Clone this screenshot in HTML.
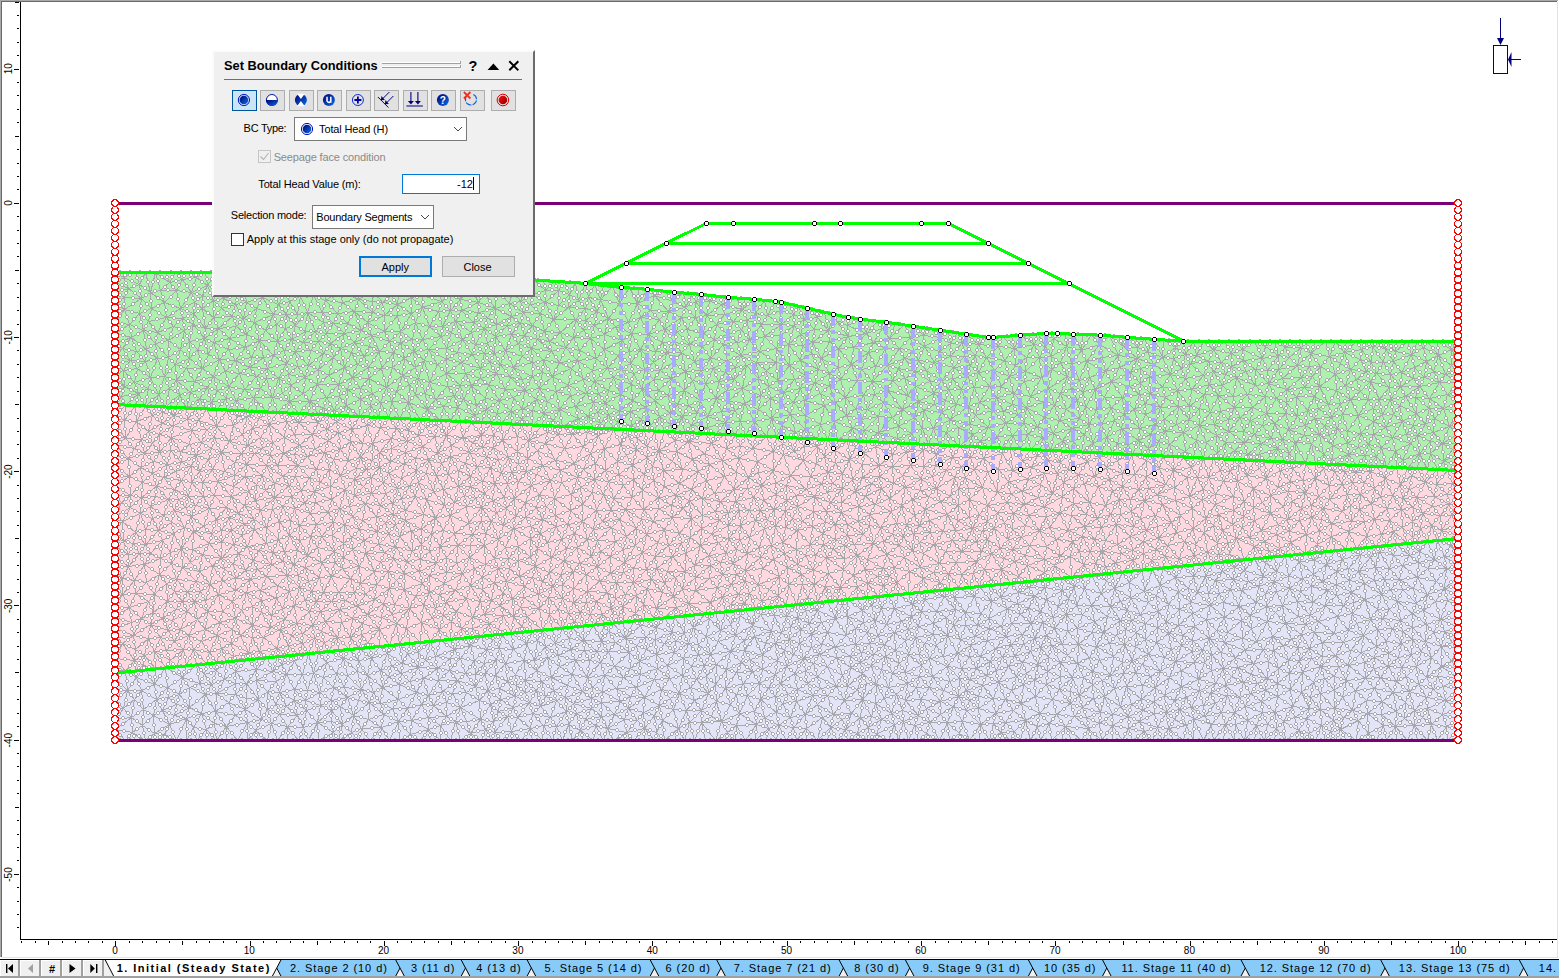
<!DOCTYPE html><html><head><meta charset="utf-8"><style>html,body{margin:0;padding:0}body{width:1559px;height:978px;overflow:hidden;background:#fff;position:relative;font-family:"Liberation Sans",sans-serif}svg{position:absolute;left:0;top:0}</style></head><body><svg width="1559" height="978" viewBox="0 0 1559 978" font-family="Liberation Sans, sans-serif"><g shape-rendering="crispEdges"><rect x="0" y="0" width="1558" height="1" fill="#a9a9a9"/><rect x="1" y="1" width="1556" height="1" fill="#6a6a6a"/><rect x="0" y="0" width="1" height="957" fill="#a9a9a9"/><rect x="1" y="1" width="1" height="956" fill="#6a6a6a"/><rect x="1557" y="2" width="1" height="955" fill="#e3e3e3"/><rect x="2" y="957" width="1556" height="1" fill="#e3e3e3"/></g><polygon points="115.0,272.0 418.0,272.0 585.5,283.4 621.2,287.3 647.3,289.3 674.2,292.2 701.1,294.4 728.3,297.3 754.0,299.3 775.2,301.3 781.0,302.2 807.3,308.2 833.3,314.2 848.2,317.3 860.2,319.1 886.3,322.2 913.2,326.2 940.1,330.2 966.4,334.2 988.2,337.4 993.3,337.4 1020.2,335.1 1046.3,333.4 1057.2,333.4 1073.2,334.2 1100.1,335.1 1127.3,337.4 1154.2,339.4 1183.4,341.1 1458.0,341.2 1458.0,470.5 115.0,404.5" fill="#aef0ae"/><polygon points="115.0,404.5 1458.0,470.5 1458.0,538.5 115.0,673.0" fill="#ffd9df"/><polygon points="115.0,673.0 1458.0,538.5 1458.0,740.0 115.0,740.0" fill="#e4e4f8"/><path d="M115.5 272.5l10 0l10 0l10 0l10 0l10 0l10 0l10 0l10 0l10 0l11 0l10 0l10 0l10 0l10 0l10 0l10 0l10 0l10 0l10 0l11 0l10 0l10 0l10 0l10 0l10 0l10 0l10 0l10 0l10 0l11 0l10 0l10 1l11 1l10 0l11 1l10 1l11 0l10 1l11 1l10 1l11 0l10 1l11 1l10 0l11 1l10 1l9 1l9 1l9 1l9 1l8 0l9 1l9 1l9 1l9 1l9 1l9 0l9 1l9 1l9 1l9 1l9 1l8 0l9 1l9 1l10 1l11 1l6 1l8 2l9 2l9 2l8 2l9 2l9 2l15 3l12 2l8 1l9 1l9 1l9 1l9 1l9 2l9 1l9 1l9 2l8 1l9 1l9 2l11 1l11 2l5 0l9-1l9-1l9 0l8-1l9-1l9 0l11 0l8 0l8 1l9 0l9 0l9 1l9 0l9 1l9 1l9 1l9 0l9 1l9 0l10 1l10 1l10 0l10 0l10 0l11 0l10 0l10 0l10 0l10 0l10 0l11 0l10 0l10 0l10 0l10 0l10 0l11 0l10 0l10 0l10 0l10 0l10 0l11 0l10 0l10 0l10 0l10 0l11 0l-7 8l-14-8l1 14l-11-14l-4 6l-6-6l-6 13l-4-13l-12 10l-9-10l-1 7l-9-7l-4 5l-6-5l-5 8l-5-8l-12 11l-9-11l-6 15l-4-15l-15 12l-5-12l-4 6l-6-6l-10 6l-11-6l-9 5l-11-5l-12 8l-8-8l-3 12l-7-12l-11 8l-10-8l-7 14l-3-14l-8 13l-2-13l-8 6l-12-8l-1 18l-8-18l-7 12l-2-13l-8 9l-10-10l-4 9l-14-11l-10 9l-8-10l-10 16l-8-16l-7 12l-1-13l-12 5l-7-5l-1 13l-8-13l-3 11l-6-10M115.5 272.5l8 5l2-5M115.5 272.5l0 10l8-5l12-5l4 12l6-12l5 20l5-20l14 10l-4-10M155.5 272.5l5 18l9-8l6-10l7 7l3-7l11 5l-1-5M246.5 272.5l-2 14l-8-14l-4 9l-6-9l-9 16l-1-16l-9 13l-2-13l-9 5l-14 2l-13 3l7 8l6-11l9 13l5-15l11 8l10 3l15-7l12 5l12-14l6 15l4-15l6 10l4-10M286.5 272.5l-14 10l-10 5l-18-1l-7 8l-5-13l-9 17l-6-10l-4 12l-6-15l-16 7l-15-2l-16 0l-10 2l-11-8l-16-7l5 11l-13-6l0 10l13-4l11-4l2 14l-13-10l-4 9l-9-5l0 10l9-5l17 1l9-6l14 10l-4-12M286.5 272.5l16 12l-6-12M286.5 272.5l-1 19l-13-9l2 11l-12-6l0 10l-18-11l2 16l-9-8l-14 4l-10 2l-11-5l5-10M317.5 272.5l-3 5l-8-5l-4 12l12-7l13-5l6 9l4-9l14 6l-4-6M327.5 272.5l-3 16l-10-11l-1 18l-11-11l-17 7l-11 2l-12 4l-16 5l-11 2l2-10M357.5 272.5l-6 6l-18 3l-9 7l16 2l11-12l8 10l-2-16l12 8l-2-8M418.5 272.5l0 10l-11-10l-8 13l-2-13l-6 5l-4-5l-6 11l-4-11l-8 8l12 3l10-6l8 8l19-3l10-10l10 13l0-12M449.5 274.5l-11 11l-20-3l4 13l16-10l12 9l-1-20l10 14l0-14l11 12l0-11M512.5 278.5l0 11l-11-12l-5 12l-5-13l-8 16l-3-16l-10 10l-11 2l-9 6l10 5l10-13l13 6l13-3l16 0l10-10l1 11l10-11l12 11l-2-10M533.5 279.5l-1 15l-9-4l-11-1l8 12l3-11M333.5 281.5l7 9l19-2l10-8l4 10l8-7l18 2l-8 10l-10-12M418.5 282.5l-7 15l-12-12l-2 19l-6-9l-18-5l-14-2l-1 11l15-9l-1 11l-14-2l-18-9l-15 10l-1-12l-11 7l-13 1l2-12M438.5 285.5l3 16l9-7l0 16l10-11l-1-11M603.5 285.5l-3 14l-6-15l-6 13l-3-14l-7 17l-3-18l-6 12l-5-13l-6 9l-4-9l-9 9l13 0l11 4l9 6l10-3l12 2l12-13l7 17l2-16M470.5 286.5l8 16l5-10l12 16l1-19l13 14l3-14M638.5 288.5l-1 15l-8-16l-10 16l-19-4l-3 12l-9-14l-3 11l-7-8l-10 7l1-13l-11 11l0-15l-13 12l0-12l-13 4l-12 7l-11 2l-14 5l-17-6l-18-3l1 11l17-8l0 10l17-4l16 8l-2-13l14 9l-3-11l10 3l2-10l13 8l-15 2l-7 8l17 1l5-11l13 3l10 2l17 1l12 3l11 7l-8-19M340.5 290.5l2 12l16-3l-4 12l-12-9l-17-2l-12-5l-6 17l-7-16l-15-5l4 10l11-5l-3 18l-8-13l-11 3l7-13M373.5 290.5l9 12l9-7M656.5 290.5l-2 5l-7-6l-10 14l17-8l11-4l8 10l1-9M150.5 292.5l1 16l-10-10l-17 11l0-12M191.5 292.5l11 3l-8 7l-3-10l-11 16l-4-18l-12 12l16 6l14-6l8 6l0-13M274.5 293.5l4 11l-16-7l-6 11l-10-6l-3 16l-8-14l-12-6l-2 10l-8-8l-11 8l-9 5l1-11M313.5 295.5l9 17l3-12l12 13l5-11M422.5 295.5l-11 2l-14 7l-15-2l-10-1l0 11l-14-13M422.5 295.5l19 6l-19 6l0-12M654.5 295.5l19 6l10-9l2 15l7-14l3 8l6-7l8 7l1-6M654.5 295.5l-4 15l-13-7l-18 0l-11 15l20 4l9-19l3 14l10-7l18 1l-14-16M262.5 297.5l11 17l5-10l8 10l3-13M728.5 297.5l-6 7l-3-8l-10 5l-14 0l-10 6l-12-6l-5 10l17-4l-4 10l-13-6l-9 8l-9-9M141.5 298.5l-2 15l12-5l13-6l2 15l14-9l13 5l-11 5l-2-10M745.5 298.5l-3 11l-6-12l-14 7l-13-3l-3 14l-11-14l0 16l-10-10M213.5 300.5l0 17l8-9l14-4l-3 12l-11-8M545.5 302.5l8 17l5-14M781.5 302.5l-1 8l-5-9l-8 14l-3-15l-9 13l-1-14l-12 10l-20-5l2 10l18-5l13 4l12 2l13-5l9-6l4 10l5-8l6 13l3-11l10 9l-2-7M619.5 303.5l9 19l12-5l19 2l5 10l4-18M397.5 304.5l14 9l0-16l11 10l16 4l3-10l9 9l11 0l17 2l9 5l8-9l1 16l15-8l12-4l-3 11l-9-7l-4 9l13-2l12 2l-9-13M397.5 304.5l0 11l14-2l11-6l-7 15l-4-9l-11 18l-3-16l-13 0l-2-13l-10 10l-18-1l-17 2l-15-1l-15 0l-10 2l-11 0l-13 0l-17-6l-13 10l-11-2l-19 1l-11-9l3 20l-12-15l0 11l-11-6l-16-1l-15-9l-3 13l-9-8l-15-4l-9-7l0 10l9-3l-9 13l0-10M397.5 304.5l-13 11l-12-3l-5 10l-13-11l-7 12l-10-10l-4 10l-11-11l1 10l-16-10l-12 13l-9-11l-10 10l-3-10l-19 8l2-14M530.5 304.5l10 9l13 6l15-12l7 12l10-11l0 12l12-9l-3 14l14-7l7 8l13-4l3 11l9-16l8 17l11-15M722.5 304.5l-16 11l18-1l9 7l9-12l5 11l8-7l6 11l6-9l14 9l-1-14l13 4l11 5l13-2l7-5l4 18l5-16l4 8l11-5l-1 8l13-6l6 14l2-13M422.5 307.5l7 19l9-15l12-1l5 11l6-11l12 12l5-10M124.5 309.5l5 15l10-11l4 17l5-9l18-4l7 9l9-8l2 12l9-6l12 4l8-11l5 11l14-12l4 10l7-8l11 4l11 8l8-16M450.5 310.5l-8 16l-4-15M354.5 311.5l7 19l6-8l17-7l0 16l13-16M286.5 314.5l-1 14l-9-4l-11 6l-6 10l-5-18l-8 12l-3-16M297.5 314.5l-2 11l-10 3l6 11l4-14l10 6l2-19l8 19l8-9l10 1l14 0l14 7l-17 3l-11-10l-7 10l-3-11M724.5 314.5l-8 10l-10-9l-11 2l-14 0l6 12l8-12l8 16l3-18M166.5 317.5l-9 15l-9-11M487.5 317.5l-14 5l-18-1l-13 5l-13 0l-14-4l-15 9l-16 0l-17-9l4 13l-10-5l-7 12l-10-9l3-10M487.5 317.5l9 7l11 1l4 9l9-11l4 12l8-10l8-12l4 18l9-12l22 0l10 1l9 5l-11 5l-8-11l-15 13l-7-13M487.5 317.5l-3 11l-11-6l-2 10l-16-11l-4 11l-9-6l-1 10l-12-10l-7 13l-7-17l-3 17l-12-8l-11 10l-5-10l-13 4l18 6l11 1l0-11M608.5 318.5l-4 16l-10-9l-4 13l-7-8l2-10M575.5 319.5l-2 18l10-7M804.5 319.5l-10 6l-1-11l-12 10l-20 0l-14-4l-14 1l-17 3l-13 9l-16-4l-11 2l5-14l-17 12l12 2l-2 11l-10-13l-16 5l-17-1l-16-7l-11 8l-14 4l-17-1l-13-5l-16-1l-12-6l5 14l7-8l5 10l11-9l5 15l8-10l6 13l11-12l14 11l0-15l18 6l-7-14M804.5 319.5l10 10l3-12l11 13l9-8l10 3l19 8l11-12l5 7l4-6M804.5 319.5l-4 15l-6-9l-13-1l-1 11l14-10l-6 19l12-10l14-5l14 1l20 6l-11-14M455.5 321.5l7 18l-11-7l-10 4l-19 3l-10 0l-12 3l13 9l9-12l6 10l13-13l5 12l5-16M276.5 324.5l1 17l8-13M781.5 324.5l-17 12l-3-12l-12 16l-2-20l-6 9l-8-8l-6 13l-11-10l-2 15l-11-6l-14 11l-2-15M507.5 325.5l-12 11l1-12l-12 4l-13 4l-9 7l13 5l9-16l11 8l16-2l13 1l13 4l12 2l16 6l14 3l17 8l-6-20M847.5 325.5l1 11l18-3l16-5l13-5l-6 15l15-14l6 13l3-11l10 9l-1-8M173.5 326.5l11 4l-16 10l5-14l-16 6l-14-2l-14-6l-14-2l0 11l14-9l2 13l12-7l12 13l2-11l11 8l-13 3l-9 6l-3-19M236.5 326.5l-18 2l-13 0l-1 10l-11-14l-4 17l-5-11l-4 19l-12-9l0 17l-13-14l2 15l-11-9l-15-12l-16-4l0 10l16-6l-9 11l-7-5l0 10l7-5l14 3l-5-14M236.5 326.5l10 8l-17 4l7-12M218.5 328.5l11 10l-16 4l5-14l-14 10l-15 3l8 8l7-11l9 4l15 7l1-11l16 9l1-13l13 6l18 1l-12-11M484.5 328.5l3 15l8-7l10 14l6-16l7 9l6-8l7 13l6-9l14 12l-2-10M664.5 329.5l-2 13l-14-8l-8 15l-9-16l-9 7l-18 9l14 6l4-15l7 11l2-18M741.5 329.5l-14 5l-13 5l9 5l4-10l10 8l4-13l8 11l15-4l16-1l8 9l14 1l-2-11l12 8l2-13M940.5 330.5l1 7l-10-9l-8 7l18 2l7-6l2 12l7-11l5 10l4-8l12 10l-1-9M305.5 331.5l10 0l11 2l18 0l-14 10l-4-10l-8 8l-3-10l-12 11l2-11l-14 8l-14 2l7 9l7-11l12 3l15-1l12 2l10 5l4-15M676.5 331.5l13 13l-15-2l-12 0l-7 9l-7-17M471.5 332.5l4 12l12-1l7 10l1-17M703.5 333.5l-1 13l12-7l-4 19l13-14l14-2l12-2l10 11l5-15l12 12l4-13M1057.5 333.5l-4 5l13 8l15 4l1-16M371.5 335.5l-17 7l15 4l2-11l8 16l10-10l4 11l7-10l4 16l9-7l-1-12M1011.5 335.5l3 13l6-13l14 9l11 2l8-8l-2 18l15-10l-6 16l-9-6l-6-10l-6 11l-5-13l-20 4l-12-12l-4 10l-10-9l-10 7l-16-2l-12 1l-9-6l-17 9l-1-11l-13 2l-21 1l-7-10l-9 14l-7-9l-13 14l-5-11l-19 5l-1-11l-16 12l17-1l9 7l10-12M1100.5 335.5l-1 9l-18 6l5 11l13-17l19 11l-9-20M1118.5 336.5l5 10l14 1l-1-9M910.5 337.5l14 9l-11 4l-3-13l-11 11l-10-10l-16 4l-20 5l-15 1l-17 10l8-17M941.5 337.5l-2 14l11-8l0 13l12-14l13 13l3-11l20 2l-5-9M204.5 338.5l4 16l5-12l6 17l9-10l17-2l14-7l14 15l4-14M889.5 338.5l-4 10l-12-6l-5 10l-15-5l-2 17l-13-16l0 19l-17-9l-9-16l-10 3l9 8l1-11M291.5 339.5l4 12l8-9l7 8l8-9l5 12l7-10l3 14l7-9l14-6l-3 10l-11-4l4 19l7-15l13 4l-10-14M462.5 339.5l-16 9l-18 1l-15 2l11 9l4-11l18 10l0-11l11 4l5-13l10 15l3-10l9 9l3-10M749.5 340.5l-9 15l-3-13M1173.5 340.5l2 7l10 7l11 1l17-6l0-8M1244.5 341.5l-2 8l-11 4l-18-4l-5 12l-12-6l-6 8l-5-9l-12 4l2-11l-13 10l-15-6l-10-4l0 11l-14-12l-5 9l-16 2l-3-13M1254.5 341.5l8 17l3-12l-1-5M1274.5 341.5l4 14l-13-9M1285.5 341.5l0 6l16 0l9 6l5-12M1346.5 341.5l-2 11l17-3l11-3l13 2l10 3l1-10M1447.5 341.5l4 8l7 2l0-10M662.5 342.5l5 10l7-10l7 10l8-8l13 2l8 12l17 2l-4-16l17 11l19-4l17-3l12-4l12 16l2-15M962.5 342.5l2 14l11-1l11 2l-8-13M518.5 343.5l13 5l20 3l14-4l12 13l2-10M518.5 343.5l-13 7l-11 3l-10 0l-12 1l-15-2l-11 7l15 3l-4-10M518.5 343.5l4 13l9-8l12 12l8-9l8 11l6-15M689.5 344.5l5 17l8-15M788.5 344.5l1 21l-13-17l0 14l-17-11l-3 11l-16-7l-13 5l8 7l5-12l6 10l10-3l20 0l13 3l11-5l11-7l10 5l-3 11l-7-16M1034.5 344.5l-8 13l-12-9l-16-2l-12 11l18 3l-6-14M924.5 346.5l15 5l11 5l14 0l6 9l5-10l3 17l8-15l8 13l10-10l10-12l1 17l11-8l13 0l12-1l0 13l-12-12l-14 14l1-14M924.5 346.5l-6 14l-5-10l-14-2l-14 0l-17 4l-17 12l-13 3l-9 6l-8-15M924.5 346.5l10 16l5-11M1066.5 346.5l5 17l10-13M1423.5 347.5l-12 7l-16-3l-2 10l-8-13l-2 14l-11-16l-1 16l-10-13l-1 10l-16-7l-15 4l-19-3l-13 12l4-18l-12 10l-4-10l-7 8l11 2l8 8l12 1l1-13l10 13l9-10l11 7l4-11l6 17l10-10l11 3l12 0l10-1l18-7l15 7l-3-14l15 8l13-6l7 12l0-10M122.5 348.5l8 12l6-9l10-2l-1 12l-9-10M531.5 348.5l1 14l-10-6l-17-6l-5 14l-6-11l-5 9l-5-9l-4 15l-8-14l-11 8l19 6l9-6l11 2l13 3l-8-17M197.5 349.5l11 5l11 5l16 1l10-13l6 10l8-17l4 17l10-2l11-5l11 1l15-1l13 3l10 4l11 10l13-3l-6-12M197.5 349.5l-8 9l0-17l-9 8l-12 8l-11 1l-12 3l-15-1l-15-7l0 10l15-3l7 8l8-7l5 16l7-19l7 18l4-19l7 7l5-15l9 9l-14 6l11 4l3-10l13 10l-5-19M228.5 349.5l7 11l16-3l12 0l-14 10l2-10M428.5 349.5l9 15l9-5l0 14l15-11l4 11l15-5l16 5l-7-11M640.5 349.5l15 2l12 1l14 0l13 9l16-3l3 10l14-8l-2 12l10-5l11-2l12 13l-2-16l10 8l10-8l1 18l12-15l16 10l-5-15l18 9l11 4l11 6l11-15l10 5l7-17l7 14l10-18l2 17l12-17l5 10l9-8M640.5 349.5l-11 2l-11 4l12 8l10-14l13 13l2-11M640.5 349.5l4 20l9-7l14-10l6 10l8-10l4 19l9-10l7 9l9-12M1213.5 349.5l8 13l10-9l12 7l-1-11l20 9l16-3l0 14l11-12M1451.5 349.5l0 16l-13-10l-12 6l-12 6l-3-13l-10 18l-8-11l-3 13l-7-12l-7 11l-5-11l-5 9l-6-12M284.5 350.5l2 13l9-12l13 14l2-15M295.5 351.5l2 15l-11-3l-13-8l-6 13l-4-11M379.5 351.5l-10-5l-5 10l15-5l14 1l11 6l11 9l-2-16M379.5 351.5l-11 16l-4-11l-7 8l11 3l13 1l-2-17M629.5 351.5l1 12l-9 6l-3-14l-11 13l-3-19l-8 9l-19 2l-18 2l-16-2l-11 2l-19 5l9-11M667.5 352.5l-7 18l13-8l12 9l16-1l12-2l12 4l9 7l12-14l-4 23l16-10l8-8l11 10l17-1l-5-14M1231.5 353.5l0 13l12-6l19-2l-7 11l-12-9l2 11l-14-5l-10-4l-13-1l-18 2l-9 5l4-14M208.5 354.5l-6 14l17-9l6 12l10-11l14 7l18 1l19-5l2 11l9-8l11-1l15-12l-5 16l15-12l-5 18l16-8l8 10l5-13M1118.5 355.5l19 3l10-7l6 13l9-7l11 1l8 10l-11 6l-8-17M1118.5 355.5l1 12l18-9l16 6l-13 4l-3-10l-7 14l-11-5l-14 4l13-16M1278.5 355.5l-11 15l-5-12M964.5 356.5l-11 11l-3-11l-16 6l-16-2l-14-2l-17 7l-12 1l-14 3l-4 11l-6-16M1329.5 356.5l6 18l5-11l10 6l16 2l10 2l14 1l11-2l13-5l10 10l2-16l7 10l5-16l7 19l6-9l7-4l0 10l-7-6M1039.5 357.5l2 20l10-8l9-7l11 1l15-2l16-4l3 14l-19-10l3 16l16-6l6 10l8-14M1173.5 358.5l-3 16l-17-10l-4 12l-9-8l-10 4l-19 9l18 5l1-14l10 11l0-15M219.5 359.5l-6 17l-11-8l-16 0l-10 12l-1-16l-11 12l-14 1l-13-9l-14 2l7-10M235.5 360.5l4 13l10-6l7 9l11-8l-1 10l-10-2l-17-3l-14-2l-12 5l-19 5l8-13M577.5 360.5l-6 8l-12-6l-7 14l-9-16l-1 12l-10-10l0 14l-19-9l-3 10l-10-13l-4 9l14 4l12 2l-9-12M577.5 360.5l15 10l4-12l11 10l14 1l12 4l-3-10l14 6l16 1l-7-8M577.5 360.5l6 19l-12-11l-19 8l-10-4l-10 4l-10 3l2 11l8-14l7 12l3-16M1086.5 361.5l-7 19l-8-17l-4 13l-7-14M673.5 362.5l-2 16l-11-8l-7 9l-9-10l-11 4l-2 11l-10-15l-8 8l-6-9l-15 2l-9 9l11 2l13-13M934.5 362.5l19 5l17-2l8 7l16-2l15 6l-5-16l11 5l10 6l-16 5l6-11M934.5 362.5l-8 8l-8-10l-3 11l-11-13l-6 10l-11-3l5 15l6-12l17 3l11-1l15 10l-7-18M286.5 363.5l-8 15l-11-10M437.5 364.5l-13-4l-9 7l-13 8l2-17l-12 9l1-15l-12 16l11-1l10 8l16 3l6-18l5 22l8-18l9 9l19 0l15 5l0-10M887.5 365.5l-15 16l3-15M970.5 365.5l-3 11l-14-9l-1 11l15-2l11-4l11 14l5-16l7 16l8-10l15 5l1-10l16 6l-17 4l-11 12l-4-17M1297.5 365.5l-19 4l-11 1l-12-1l-10 2l-9 6l-5-11l-6 8l-4-12l-8 9l-5-10l-5 14l-13-12l-5 15l-4-10M1297.5 365.5l4 12l8-11l11 0l15 8l15-5l6 10l10-8l4 10l6-8l13 14l1-13l10 12l1-14l12 6l1-11M1297.5 365.5l-15 13l-4-9l-10 14l-13-14l0 16l-10-14M297.5 366.5l8 11l3-12l10 4l10 6l-11 9l1-15l-13 8l-17-3l-10 4l-12 0l-6 10l-4-12l-12 13l-5-16l-11 13l-3-15M1309.5 366.5l3 10l8-10l-1 20l16-12l10 11l5-16M344.5 367.5l-6 17l-10-9M392.5 367.5l-6 20l-5-19l-13 10l0-11l-16 10l16 1l18 9l16-12l7 9l9-6l-3-11M735.5 367.5l-1 12l-16 2l-5-13l-8 15l-4-13l-9 10l-7-9l-14 7l-18 1l-11 10l2-20M838.5 367.5l2 12l17 1l15 1l-11-12M953.5 367.5l-12 13l11-2l-4 11l-7-9l-11 1l-4-11M137.5 368.5l-3 14l-11-12l-8-7l0 10l8-3l1 16l-9-13l0 10l9 3l10-4l16-5l-2 11l-14-6l4 11l-14-7l-9 8l0-11M186.5 368.5l8 13l-18-1l-12-4l5 12l7-8l14 12l4-11l13 6l6-11l15 10l16 3l16-1l-7 9l-9-8l-8 11l-8-14l-11 4l-4-14M571.5 368.5l-3 17l-16-9l-13 12l-15 2l-14-13l-5 12l-9-16l-16 5l8 6l8-11M898.5 368.5l7 10l10-7l15 10l-15 5l0-15M592.5 370.5l2 11l19-4l18 7l11 5l-9-16M766.5 370.5l2 16l-10-8l2 17l8-9l9-6l6 12l11-13l11-4l13-6l-4 14l15-10l0 12l11-6l5 18l12-17l6 15l9-14l20-1l13-2l10 8l18 7l8-13M1267.5 370.5l1 13l14-5l19-1l11-1l7 10l-15 1l8-11M685.5 371.5l-1 19l-13-12l-13 12l-5-11M1105.5 371.5l-10 18l-6-12l-10 3l-12-4l-16-7l-3 19l19-12l4 12l8-8l4 11l6-14M1433.5 371.5l12 3l13-3l0 11l-13-8l-6 8l-6-11l-9 6l-11 1l6 8l5-9l15 5l19 0l0 10l-11 2l-8-12l-20 4l-19 0l13-8M725.5 372.5l-7 9l-13 2l-13-3l-8 10l-16 5l3-17M978.5 372.5l-4 15l-7-11l-6 13l-9-11M446.5 373.5l-17 9l-11-4l7 15l4-11l18 4l-1-13l14 12l5-12l6 12l9-7M288.5 374.5l2 11l15-8l12 7l21 0l14-7l8 11l8-10l4 15l14-6l10 4l6-16M1225.5 374.5l-12-3l-10 4l-18 3l-15-4l-21 2l-9 7l-11 3l10 8l1-11l10 10l-1-17l13 10l8-12l7 16l8-12l6 11l12-14l6 9l4-13l9 14l3-11l11 3l19 8l13-2l18 6l15-12l3 10l-18 2l-4-11M1335.5 374.5l1 16l9-5l11-6l14 2l19 6l11-1l5 10l14-10l-4 11l-10-1l-15 3l10-13M164.5 376.5l-6 18l-8-17M552.5 376.5l4 15l12-6l15-6l3 14l8-12l14 9l5-13l7 17l11-10l1 16l10-11l16 1l10 5l-14 5l-12-11l4 18l-14-7l-12-6l-12-4l-10 3l-4-12M1067.5 376.5l-7 17l-12-5l-7-11l-11 19l-6-15M305.5 377.5l-2 16l14-9l9 13l12-13l9 5l5-12M1236.5 377.5l-14 8l-13-1l-18 5l-14 1l-15-4l-12 7l-11 1l-17 3l-11-16l-16 8l-12 2l-12-3l-11 5l17 7l-6-12M1236.5 377.5l11 17l8-9l10 11l3-13l8 15l10-9l10 7l8-9l10 9l5-10l17 4l14 9l-5-14l15 6l-4-12M1236.5 377.5l-3 19l-11-11l-4 10l-9-11l-5 10l-13-5l-2 17l-12-16l-12 7l-3-11M266.5 378.5l6 19l6-19l12 7l-8 8l-4-15M418.5 378.5l-3 16l-6-10l-13 7l-5 10l-5-14l-6 15l-8-9l-12-5l-13 1l-8 7l-1-12M905.5 378.5l2 17l-15-15l-5 10l-15-9l2 13l13-4l20 5l8-9l3 15l15-8l-3-12M794.5 379.5l6 9l5-13l9 8l15 2l-9 8l-6-10l-14 5l-17 4l-15-6l2 12l13-6l10 10l7-14l4 12l10-17M176.5 380.5l3 14l-10-6l-11 6l-10-6l-10 5l-17 3l3-10M692.5 380.5l8 20l5-17l11 15l2-17l8 9l8-11l8 9l-16 2l-10 8l-16 2l-16-10l-7 14l-9-9l2 18l-16-13l4-10M1111.5 381.5l-7 16l-9-8l-10 18l-2-16l-6 9l8 7l11 2l-1-20M1370.5 381.5l-10 10l-10 8l18 0l2-18l9 18l10-12l1 12l-11 0l-11 0l-8-8M429.5 382.5l6 17l12-13l13-1l11 0l17-1l17 5l19 1l-11 7l-8-8l-6 11l-11-16l-3 14l-14-13l-8 14l-3-14l-6 10l-7-9M1439.5 382.5l-10 16l-10-12M1458.5 382.5l-11 12l-18 4l-14-1l14 11l0-10l14 10l4-14l11 8l0-10M317.5 384.5l-8 17l-6-8l-13-8l-1 16l-7-8l-10 4l-12-9M409.5 384.5l-1 18l-12-11M471.5 385.5l5 20l9-7l14 2l14-3l9 12l2-19l12 9l3-11l17 3l14 4l-2-10l18 8l12 0l-5 9l-7-9l-16 2l5 11l11-13M228.5 386.5l-2 12l-9-8l-10-3l-17 5l-11 2l-14 13l4-19M1001.5 386.5l-12 0l-15 1l-13 2l-13 0l-15 4l12 7l3-11l8 15l5-15l7 17l6-19l5 15l10-16l7 11l5-11l12 7l17 3l18-8l-5 14l-13-6l-4 11l-13-14l-17 4l-17 5l-11 4l-12-2l-11-4l-11 4l-1-11M1129.5 386.5l-7 11l-18 0l7 10l11-10l12 12l5-15l6 9l5-10l15 4l13 9l-1-16M1319.5 386.5l9 18l8-14l4 13l10-4l-8 15l-2-11l-12 1l-14-8l-18 0l-10 6l0-13M148.5 388.5l-3 18l-7-13l-13 12l-4-9l-6-2l0 10l6-8M360.5 388.5l0 11l-13-10l-1 16l-7-9l-13 1l-17 4l-20 0l14-8M539.5 388.5l8 13l9-10l3 18l11-14M742.5 388.5l18 7l10 3l12 6l1-12M742.5 388.5l-14 13l-2-11M742.5 388.5l2 15l16-8l-2 14l12-11l1 20l11-14l11-2l11-2l16-7l15 9l-6-17l16 12l18-2l11-1l9 8l4-12l15 19l5-14l11 6l16 3l-11 6l-5-9l-16 8l-19-7l-16 7l7-15M1048.5 388.5l6 17l6-12l6 16l11-9l2 18l6-11l4 17l7-15l8-12M217.5 390.5l-6 12l-4-15l-8 11l-9-6l-4 16l-7-14l-3 13l-11 0l-7-13l-13 12l-10-1l3-12M608.5 390.5l-3 13l-7-10M684.5 390.5l4 15l12-5l-3 12l-9-7l-11-1l-7 9l12 3l-5-12M425.5 393.5l-10 1l-7 8l-17-1l-11 1l-10 3l2-12l-12 6l10 6l-11 11l1-17l-14 6l-12 5l5-14M425.5 393.5l10 6l19-4l9 4l13 6l10 4l-1-11M425.5 393.5l2 16l-12-15M820.5 393.5l4 12l-20-5l1 15l-12-13l-3 12l-8-10M1013.5 393.5l-1 11l-16-7l-4 13l-13-8l-4 13l-7-9l-18 13l6-15l-15 8l4-12M1150.5 393.5l10 14l5-10M158.5 394.5l-3 12l-10 0l7 9l3-9l10 1l-3 5l-7-6M1218.5 395.5l-14-1l-15 12l-11 0l-18 1l-15-4l-11 6l11 5l0-11M1218.5 395.5l15 1l14-2l18 2l11 2l10 4l0 11l-10-15l-10 15l-1-17l-13 11l-5-13l-13 13l-16-12l2 16l14-4l-1-11M1218.5 395.5l-8 17l-6-18l-5 14l-10-2l0 13l-11-13l-14 13l-4-12l-15 7l10 10l5-17M253.5 397.5l19 0l17 4l-12 11l-5-15l-5 15l-14-15l-17 3l-10-2l-15 4l-12-4l-13 10l-10-1l-2 8l-9-8M253.5 397.5l-6 14l-11-11l1 10l-11 0l0-12l-10 11l-5-7l-5 7l-7-11l-3 10l-10 0l-12 7l-12-3l-10 3l-16 6l-1-16l-10 0l-10-1l0 10l10-9l-1 15l11-15M253.5 397.5l4 14l-10 0l-10-1l0 6l-11-6l10-10M513.5 397.5l-2 14l-12-11l-13 9l11 4l2-13M845.5 397.5l-10 5l-11 3l-19 10l-15-1l-19 4l-13-9l-14-6l-16-2l-12-3l5 13l7-10l7 9l9-7l10 18l4-12M845.5 397.5l10 11l8-13l4 14l-12-1l-9 7l-1-18M996.5 397.5l7 14l9-7l14 3l17-5l11 3l12 4l13 9l-20 2l-5-15l-10 12l-1-15M1122.5 397.5l2 17l-13-7l-15 2l5 15l10-17l3 13l10-6l10-5l5 19l6-14M1415.5 397.5l1 16l-11-17l-6 9l-9-6l-8 15l-3-15l-6 9l-5-9l-10 16l-8-16M716.5 398.5l-9 18l-7-16M1390.5 399.5l3 15l6-9l17 8l13-5l14 0l15-6l0 10l-15-4l-9 10l-5-10l-4 16l-9-11l-14 8l-3-16M547.5 401.5l-11-2l-14 10l10 1l4-11l8 14l3-12l12 8l16-3l18-4l12 1l15-9l-1 17l13-11l-2 11l16-4l8-7l5 16l-13-9l-5 12l-11-8l-11 0l-14-8l-8 9l-4-10l-5 14l-13-10l3 12l-19-9l-15 4l-12-3l-10 9l0-10l-11 2l-14 2l-6 10l-5-14l-12 6l-11-16l-6 8l-3-12l-11 11l-8-7l-8 10l-19-7l-9 16l-8-17l-2 17l-9-16l-1 15l-9-12l-1 12l-10-1l-13-11l-8 10l-4-5l-8-13l-3 11l-14-7l-11 12l-9-12l-2 12l-10-1l-10 0l-10-1l-10 5l0-5l-10 5l10 0l12 2l-2-7M918.5 401.5l-4 16l-12-8l-10 8l-9-15l-5 14l-11-7l-6 10l-6-11M1286.5 402.5l11 14l-1-20l11 14l7-14l4 12l10-4l3 13l9-14M605.5 403.5l3 11l11-3l-2 11l13-11l1 14l10-6l9 6l-4-18M744.5 403.5l-4 18l-5-11l-14 1l-14 5l-10-4l-15 4l6-11M934.5 404.5l7 8l-18-2l-9 7l-16 9l4-17M1012.5 404.5l6 10l8-7l18 10l15 3l7-11M346.5 405.5l3 11l-11-1l-10 0l-5-7l11 2l-6 5l-10-1l-9-13l-1 13l-10-1l-11 0l-1 8l-9-9l-8 12l-2-12l-8 6l10 6l17-3l12 1l-11-9M476.5 405.5l-2 10l-17-8l-14-1l-16 3l-7 10l-12-17l2 17l-11-1l-10 0l-10-1l-10 0l-2 8l-8-9l-10 0l-13 5l-8-6l-10 7l-10-8l10 0l5-6M145.5 406.5l-9 15l-12-1l-9-6l0 10l9-4l1 18l11-17l12 10l4-16l9 8l1-11M968.5 406.5l1 18l6-9l17-5l11 1l15 3l-13 9l-13-13l-4 17l-13-12M1178.5 406.5l-2 18l13-5l10-11l11 4l10-1l8 8l6-12l18 0l14 6l20 0l11 3l10-6l11-2l13 9l11-3l16 1l15-7l9 6l11 0l9 7l11 4l3-12M1234.5 407.5l6 10l12-10l-2 13l16-7l8 10l12-10l2 16l9-13l8 9l2-15l7 8l4-10M186.5 408.5l1 11l9-11l10 1l10 0l10 1l7 15l4-9M196.5 408.5l2 12l8-11l10 17l0-17M1199.5 408.5l0 17l11-13l4 12l6-13M1373.5 408.5l0 13l9-7l3 13l8-13M1443.5 408.5l6 18l9-14l0 11l-9 3l-15-8l-9 6l-12 1l-7 9l-4-13l-17 6l-12-6l-15-6l-11 16l-5-17l-5 14l-6-11l-17 1l10 7l7-8M486.5 409.5l-5 13l-7-7l-14 6l-3-14l-7 14l-7-15l-3 14l-13-11l3 11l-10-1l-10 0l-2 11l-9-12l-3 10l-7-10l-9 9l-1-10l-12 8l13 2l16 1l12 2l12-11l5 8l5-7l10 0l10 1l10 0l11 1l3-7M226.5 410.5l-10 16l-18-6l-11-1l-13-4l-13 8l12 2l1-10M532.5 410.5l0 15l12-12l9 7l6-11l3 17l16-8l10-2l9-4l11 2l9 8l14 3l-8 4l-6-7l-4 7l-5-15l-8 9l-3-11M735.5 410.5l-10 12l-4-11M511.5 411.5l11 8l-11 5l0-13l-10 12l-4-10M1003.5 411.5l2 12l19 0l2-16l11 19l7-9l9 16l6-13l13 8l7-10l10 6l12 0l13-4l7 8l3-14l15 14l16-4l9-5l12 5l-11 7l-1-12M697.5 412.5l-6 13l-9-9l-12 8l0-11l-11 3l11 8l-6 7l-5-15l-9 9l-6 5l-3-11l-8 11l-2-5M298.5 413.5l0 9l10-8M544.5 413.5l-2 12l11-5l9 6l-10 0l1-6M1266.5 413.5l-4 12l-12-5l-10-3l-12 2l-14 5l-15 1l-10-6l-6 13l-7-8M318.5 414.5l0 8l-20 0l14 12l6-12l8 7l2-14M608.5 414.5l-5 14l-3-5l-12-7l-5 11l-5-9l-6 9l-10-1l10 8l0-7l11 0l10 1l-5-12M790.5 414.5l-9 11l-10-7l-17 3l-14 0l-15 1l-18-6l-16 9l16 2l0-11M790.5 414.5l15 15l0-14l15 9l4-19l10 16l1-19l11 13l15 4l17-3l14 1l6 9l-20 6l0-16l-14 14l-3-11l-9 9l-6-13l-12 6l-14 3l-15 5l-10 3l-5-18M1018.5 414.5l6 9l13 3l16 7l19-5l17-4l-5 10l-12-6l-10 12l-9-7l-11 4l-5-11l-10 8l-3-11l-12 12l-7-12l-17 4l-19-3l-19-5l-9-7l-8 16l-10-18l-1 18l-8-11l-3 16l-13-7l-1 12l-19-6l14-15M338.5 415.5l-2 6l15 8l-2-13M1358.5 415.5l2 18l13-12l0 13l12-7l7 10l10-16M247.5 416.5l-14 9l-17 1l-10 3l-8-9l-7 10l-4-11l-14 6l18 5l15-1l8 8l2-11l13 15l4-16l9 9l5-18l5 12l7-10M359.5 416.5l-8 13l16-4l-5 18l-11-14l-13 3l-2-11l-10 8l12 3l-10 8l-2-11l-14 5l-18 0l-8-13l-2 16l-15-13l-17 4l-10 6l-13 7l-15-4l-13 5l5-13M659.5 416.5l-5 15l-4-6M1434.5 418.5l-1 14l-8-8l-8 11l-4-10M420.5 419.5l-2 16l7-8l12-2l-7-5M950.5 419.5l8 8l11-3l3 10l16-7l9 9l8-13M950.5 419.5l-17 9l-11 0l-11 5l-14 5l-9 4l-10-10l-14-2l-12-2l-18-7l-7 18l-7-15l-3 15l-12-10l-9 9l-1-6l-14-7l-5 12l-5-19l-5 18l-12-15l-9 14l-5-14l-5 14l-10-13l-18 5l-13 6l-3-8l-7 7l-2-16l-8 16l-4-8M950.5 419.5l-4 13l12-5l14 7l8 7l8-14M1228.5 419.5l0 12l12-14l3 14l7-11l4 14l8-9l12-2l14 6l17-4l9-7l5 16l5-9l13 3l10 3l13 2l13 1l19 3l14-3l11 1l16-3l16-6l9 7l0-10M1114.5 420.5l-8 17l-5-13l-9 19l-3-19M136.5 421.5l5 18l7-8l13-8l-2 11l14-9l-2 12l20-7l10 12l-12 2l2-14M450.5 421.5l-4 14l-6-15l-3 5l9 10l14-14l2 16l9-15l10 0l10 1l10 0l10 1l10 0l1-5l10 6l-11-1l-4 12l-6-12l-9 16l-1-17l-8 12l-2-12l-10 12l-10-13M754.5 421.5l1 15l-10-1l-10 0l-10-1l0-12l-10 12l-8-7l-2 6l-11 0l-10-1l-10 0l-10-1l-10 0l-10-1l-11 0l-10-1l-10 0l-10-1l-10 0l7-5M834.5 421.5l3 19l15-12l-5 12l-10 0l-10-1l-10 0l-11-1l-1-9M298.5 422.5l-4 12l-10 3l-12 5l-3-18l-9 13l-8-9l-5 17l-5-11M481.5 422.5l0 13l12 0l9 5l15-4l11 4l-7-16M367.5 425.5l5 18l8-16l11 11l5-10l11 13l1-11l10 5l17 1l2-11M781.5 425.5l5 12l9-5M1262.5 425.5l9 13l3-15l8 16l6-10l16 6l1-10l14 9l-15 1l-9 7l-7-13M1324.5 425.5l5 10l8-7l10 15l0-12M552.5 426.5l-10-1l-10 0l-4 15l14-15l5 7l5-6l6 8l4-8M1449.5 426.5l-7 17l-9-11l-3 9l-13-6l-7 8l-4-9M425.5 427.5l10 9l11-1l16 2l19-2l-9 7l-10-5l-11 8l-5-10l-9 18l-2-17l-13 10l-4-11l-11 6l-16-3l-19 5l-10 0l-12-2l1-12M958.5 427.5l1 19l-13-14l-13-4l-5 16l-6-16l-4 16l-7-11l-3 10l-11-5l1 5l-10-1l-10 0l0-10l-11 9l-3-11l-7 11l-5-13M603.5 428.5l-5 7l-5-7l-6 4l-4-5l-11 7l15-2l11 3l15-6l7 15l3-15l4 6l6-5l4 8l7-8l3 16l7-15l4 19l6-19l11 9l-1-8M933.5 428.5l6 17l7-13l3 13l-10 0l-11-1l-10 0l-10-1l-10 0l8 9l2-9M1072.5 428.5l1 13l11-7l8 9l14-6l15-9l18 0l11 6l5-10l10 7l18 1l16-7l17 10l-2-11l14 7l15 0l11 3l17 4l11 1l13 3l16 1l8-9l10 1l3 10l5-17M1121.5 428.5l17 12l1-12M1121.5 428.5l-4 15l-11-6l-5 16l-9-10l-11 9l3-18M1121.5 428.5l7 16l10-4l12-6l15-3l-7 10l-8-7l-2 14l-10-8l-6 14l-4-10l-11-1l-5 10l-6-16M613.5 429.5l-9 19l-6-13l-15 11l4-14M1165.5 431.5l4 13l14-12l13 8l3-15l7 17l10-7l12-4l16 11l-1-11M1228.5 431.5l-3 11l-9-7l1 18l8-11l19 0l10-8l7 9l10-5l6 10l5-9l7 14l6-11l0 20l-6-9l-12-5l-16-5l-17-1l-10 8l-9-8l-2 17l11-9l13 4l-3-12M547.5 432.5l11 2l14 0l11 12l-19 2l8-14M547.5 432.5l-19 8l17 3l2-11M1183.5 432.5l2 19l11-11l10 2l11 11l-4 5l-10 0l-7-18l-3 17l-8-6l-16-7l-11-3l-10 7l-6 7l-4-15M694.5 433.5l-6 8l-4-9l-9 8l13 1l17-8l10 1l10 0l-14 9l-6-10M1053.5 433.5l-2 17l-9-13l-15-3l-15 1l-15 1l-17 5l-11 5l3-12l-13 12l-10-1l-13 9l-8-10l-5 5l-5-5l-12 8l17-3l13 5l3-9M1360.5 433.5l-13 10l-15 2l-13-11l4 20l-12-11l-7-8M1360.5 433.5l8 11l5-10l8 13l11-10l18 6l-15 8l-3-14M1360.5 433.5l-2 14l-11-4l1 11l-16-9l-9 9l9 5l0-14M115.5 434.5l0-10l10 14l-10-4l0 10l10-6l16 1l11 4l-4-12l11 3l12 3l18 7l-9 7l-9-14l-1 13l10 1l16 4l5-13l10 6l3-11l7 15l8-11l18 4l13-8l12 5l-10 6l-2-11M294.5 434.5l5 11l13-11l16 6l-14 9l-2-15M715.5 434.5l-4 9l-23-2l-12 10l-1-11l-17 10l-11-4l-10-8l-10-3l-7 9l-16 4l-14 5l8-18M725.5 434.5l1 14l9-13l5 11l5-11l8 13l2-12l11 0l10 1l10 0l10 1l10 0l11 8l0-7M481.5 435.5l1 12l11-12l0 12l9-7l15 11l0-15M627.5 435.5l9 14l1-11M1012.5 435.5l-12 13l-3-12l-8 11l-9-6l-1 6l-10-1l-10 0l-7 11l-3-12M1012.5 435.5l-2 13l-10 0l-11-1l-10 0l-9 10l-11-11M1012.5 435.5l8 14l7-15l3 15l12-12l-2 13l-10-1l-10 0l-10-1l-8 5l-13-6l-6 11l-4-11M1417.5 435.5l2 18l11-12l12 2l16-10l0 10l-16 0l10 6l6-6l0 10l-6-4l-9 12l-1-18l-12 10l0-12M171.5 437.5l-12 15l0-18l-7 9l7 9l11-2l11 12l-1-11M462.5 437.5l7 15l3-10l10 5l11 0l-7 10l-4-10l-13 5l-18-7l-14 8l-15-7l-15-5l-16 7l0-10l-12 14l-7-9l-12 14l-10-16l-12-9l2 17l-12-9l-4 12l-10-3l-15-4l-15-8l-1 16l-11-11l-2 13l-8-7l-15-3l-6 8l-12-12M125.5 438.5l9 10l7-9l3 14l8-10M806.5 438.5l-2 8l-8-8l-2 13l-8-14l-4 6l-6-6l-3 14l-7-15l-13 12l-13-2l-14 2l-15-5l-7 10l-16-12l4 18l-16-8l-18-1l-11 7l0-11l-11 3l-16-5l6 11l10-6l11 8l-15 8l4-16M827.5 439.5l-10 7l-13 0l-10 5l-12-8l-9 8l-20-3l-15 10l2-12M827.5 439.5l8 11l2-10M827.5 439.5l-3 17l-7-10l-14 14l1-14M502.5 440.5l6 17l-15-10l5 12l-12-2l-17-5l-19 4l1-11M528.5 440.5l9 10l8-7l13-9l6 14l-19-5l10 17l9-12l10 15l9-17l7 7l5 10l9-15l13 13l3-17M528.5 440.5l-11 11l-9 6l-10 2l-8 8l-4-10l-9 9l-8-14l-4 11l-15-7l-13-3l-9 6l-6-13l-17 6l2-11M528.5 440.5l-1 18l10-8l18 10l19 3l16-10l-7 16l12-6l10 7l-1-22M1073.5 441.5l-11-1l-11 10l-11 0l-3 5l-7-6l-8 12l-12-13l2 22l-10-17l-2-5M1073.5 441.5l-2 10l-9-11l-1 11l-10-1l-3 10l-8-10M1073.5 441.5l8 11l-10-1l-10 0l-1 11l-9-12M1206.5 442.5l-3 16l14-5l6 6l-10-1l7 12l3-11l11 0l0-9l10 10l3-6l14-11l-2 11l18-6l-13 13l-5-7l-12 0l7 6l5-6M1295.5 442.5l10 21l6-20l4 20l8-9l2 10l7-5l16-5l10-7l10-3l13 3l14 4l7 9l8-17l9 10l11 0l13 8l15-8l0 10l-15-2l-6 8l-7-16l-3 16l-8-16l-17 7l-6 7l-1-16l-9 16l-5-20l-5 9l-8-12l-3 11l-7-8M362.5 443.5l-2 14l12 3l0-17M711.5 443.5l11 17l4-12l12 10l-16 2l-18-7l-12 6l17 5l-5-11M782.5 443.5l1 11l-10-3l-16 10l-4-13M898.5 443.5l-6 11l-4-12l-13 4l-8-5l-10 0l-10-1l8 7l2-6l7 12l3-12l11 1l-3 4l-11 7l-9-6l-6 12l-2-19l-12 10l-11 6l-8 7l1-17M1092.5 443.5l-1 9l-10 0l6 9l-16-10l-11 11l-12-2l-11-5l-15 6l-2-12M1117.5 443.5l5 11l6-10M115.5 444.5l19 4l10 5l15-1l-6 9l-9-8l-16 5l-13-14l0 11l13 3l6-10M189.5 444.5l7 11l15-7l10 4l20 1l13 0l-7-8M299.5 445.5l-16 8l11 1l5-9l8 11l7-7M422.5 446.5l-7 12l-10-6l-14-4l-12 4l-7 8l7 7l0-15l11 9l1-13M969.5 446.5l1 11l-18 0l-16-3l-1 11l17-8l9 9l9-9l13 1l19-5l-4 16l-15-11l-9 11l-4-12M211.5 448.5l-3 11l13-7l13 10l7-9l5 11l8-11l8-5M1148.5 448.5l4 7l6-14l4 15l7-12l4 12l12-5l-2 6l-10-1l-11 0l-10-1l-10 0l-10-1l-10 0l-10-1l-11 0l-10-1l8 5l2-4M170.5 450.5l-3 14l-8-12M537.5 450.5l5 15l-15-7l-10-7l1 13l-10-7l3 15l7-8l9-6l-1 13l-8-7M658.5 450.5l14 11l4-10l6 18l10-10l6 12l11-7l13-4l14 12l2-14l19 3l16 9l0-19M658.5 450.5l-6 16l-5-9l-3 17l-12-9l-6-10l-9 6l15 4l-14 9l-1-13l-12 9l13 4l15 5l-1-14M658.5 450.5l5 20l9-9l10 8l-19 1l-11-4l-8 8l-11 5l-10 6l-5-11l-10 7l-3-11l-11 9l1-16M1071.5 451.5l-3 18l19-8l4-9M324.5 452.5l16-3l10-8l-2 19l-8-11l-7 10l-9-7l-17 4l-13-2l3 11l-14-12l-13 2l-16-2l12 12l4-10l7 10l6-12M324.5 452.5l5 17l4-10l15 1l12-3l-4 11l-8-8l-8 15l-7-16M324.5 452.5l-8 17l-9-13l-10 9l-20 0l-11 0l-20-1l-12-2l-10 9l-3-19l-9 17l-4-10l-12-4l-15 7l-14 2l-14-3l-13 6l4-14M906.5 452.5l-14 2l-17-8l4 19l-15-12l-15 6l-14-9l0 13l-11-7l4 16l-12-9l-13-3l-9-9l-11 3l20 6l-13 15l-7-21l-10 16l-15 2l-1-11l-9 16l-10-19M906.5 452.5l4 13l13-16l0 17l13-12M906.5 452.5l-14 14l0-12l-13 11l-17-1l2-11M437.5 453.5l4 10l9-7l8 14l7-7l12 3l13 1l11 6l7-16M1112.5 453.5l-13 4l-12 4l-9 13l-10-5l-8-7l-3 11l-9-13l-17 7l6-12M1112.5 453.5l5 7l5-6M1112.5 453.5l-6 14l-7-10l-5 19l-7-15M1289.5 453.5l-4 9l-8-14l-3 13l-10 0l-10-1l-10 0l-10-1l4 5l6-4l2 15l8-15l5 8l5-7l2 17l8-17l11 1l10 0l10 1l10 0l10 1l10 0l13-10l17 1l11 1l-10 10l-1-11l-9 10l-8-11l-2 11l-11-1l-3-5M115.5 455.5l0 10l13-7l12 9l12 6l1-12M1142.5 455.5l4 5l-14-6l-15 6l-11 7l16 6l10-19l2 20l12-14l6-5l7 13l3-12l11 14l0-14M450.5 456.5l-2 18l-7-11l-13-4l-13-1l-11 5l1-11l-15 9l14 2l12 7l-1-12M360.5 457.5l6 12l6-9M952.5 457.5l-6 13l-11-5l-12 1l-13-1l-18 1l-13-1l0 11l13-10l10 9l8-10l11 14l2-13l9 10l3-11M1183.5 457.5l10 0l10 1l-12 9l-8-10l-10 13l18-3l2-10M128.5 458.5l1 18l-14-11l0 10l14 1l11-9l2 15l10-9l15-9l8 7l6-9l10 3l5-10l3 16l9-12M983.5 458.5l4 13l11-2l14 1l10-9l9 6l-19 3l16 9l3-12l13 6l4-13M1213.5 458.5l-5 19l-5-19l-6 19l-6-10l-4 10l-14-7l-14-2l-13-8l0 16l13-8l6 16l8-14l1 17l13-10l10 0l11 0l12-7l10 1l-7-12M428.5 459.5l-12 11l10 3l2-14l8 16l5-12M498.5 459.5l3 14l10-1l15-1l16-6l13-5l5 10l14-7l9 6l-6 8l-3-14M1234.5 459.5l-4 12l8-7l8 11l13-7l7 10l14-8l-6-9M722.5 460.5l2 16l-15-12l-3 16l-8-9l-16-2l-3 14l-16-13l-10 10l-1-14M803.5 460.5l7 16l6-13M1117.5 460.5l5 13l12 1l12 2l19 8l9 3l-17 7l8-10l-17 4l-2-12l-8 13l-4-15l-12 12l0-13l-13 6l-3-12l-12 9l-16-2l-15 8l5-13l-11 4l-13 0l-16 6l-20 2l-10-12l-1 23l-10-21l-13-2l-13-3l-15 4l-14 6l-11 3l-19-4l-9 8l-1-17M1402.5 460.5l5 8l12-15l-2 15l-10 0l-11-1l-10 0l-10-11l0 10l-10 0l-10-1l-10 0l-2 6l-9-7l-1 7l-9-7l-2 4l-8-5l0 15l-10-15l-13 5l-7-6l-5 8l12-2l3-6M1443.5 461.5l4 9l11-7l0 7l-11 0l-10-1l-10 0l-10-1l-6 7l-4-7l-7 16l-4-17l-11 11l-9-12l10 1l-1 11l-15-7l-4-5l-11 6l-9-7M234.5 462.5l0 13l12-11l16 11l4-10l16 11l15-11l19 4l13 0l11 6l16-7l10 1l13-2l11-6l-2 12l16-10l-3 15l15-8l2 12l8-9l10 2l12-1l10-4l12 6l-5-13M835.5 463.5l14-4l13 5l0 13l17-12M835.5 463.5l-7 9l14 1l7-14l3 20l10-15M835.5 463.5l7 10l10 6l10-2l17-1l14 7l12 3l-3-11M1305.5 463.5l-2 17l-11-12l-2 13l-10-11l-2 17l-12-9l-20-3l-9 6l1-17M167.5 464.5l-4 13l12-6l16-6l8 6l13-2l12 2l10 4l11 1l1-12M266.5 465.5l8 18l-12-8l-17 1l11 8l6-9l3 15l9-7l8-7l-5-11M542.5 465.5l18 5l17 7l17 2l-11-10M542.5 465.5l-6 9l-10-3l-8 10l-7-9l-4 11l-6-10l-7 10l-4-16l-8 14l-5-15l-7 10l12 5l12 2l13 0l11-2l13 4l-5-14M542.5 465.5l8 15l10-10l1 12l16-5l3 10l14-8l14 2l15 4l9 12l1-18l9 11l2-16l9 6l11 6l-1-16M1356.5 465.5l-1 7l-11-1l-10 0l-11-3l-8 10l-12 2l-13 1l-12 6l10 4l2-10l15 11l10-14l14 7l-6-17M1376.5 466.5l-6 5l-15 1l-3 10l-8-11l-2 13l-8-13l-5 14l13-1l10-2l12 0l6-11l4 17l11-10l15 6l11-9l14 7l-8-14M379.5 467.5l9 6l13 5l8 8l7-16M379.5 467.5l-8 10l-5-8l-12 10l2-11M379.5 467.5l4 15l5-9l9 15l4-10M1427.5 469.5l-2 13l12-13l-1 15l11-14l11 4l0-4M458.5 470.5l0 16l-10-12l-5 15l-7-14l-3 16l-7-18M773.5 470.5l17 5l20 1l18-4l-7 11l-11-7l-4 13l-16-14l-15 8l-2-13l-12 15l-3-13l-10 5l-12-5l-12 4l-18 4l-15 9l7-18l-19 12l-15 3l12 9l3-12l12 6l-15 6l-18 2l-5-17l-11 10l-10 7l-19 1l-5-17l-5 13l-9-15l-2 13l-12-5l-9 7l6-17M1012.5 470.5l-4 11l14 10l6-12l12 5l4-11l8 20l5-20l6 9l10 6l5-14l6 9l10-7l15 3l13 7l16 3l10-1l9 6l18 6l-1-13l15 9l-2-19M1220.5 470.5l3 11l7-10l7 10l-14 0l-15-4l-5 12l-6-12l-8 19l14-7l12 5l-7-17M1447.5 470.5l5 13l6-9l0 10l-6-1l-16 1l-11-2l-16 7l2-14M175.5 471.5l6 9l10-15l0 17l8-11l3 11l10-13l5 12l7-10M987.5 471.5l-5 16l-8-18l-9 8l-4-11l-7 11l-8-7l-10 18l-4-12M736.5 472.5l-2 17l-10-13l-10 17l-8-13l-4 18l-11-9l-2 11l-13-5l-5 10l-13-8l6-11M828.5 472.5l4 11l10-10l0 15l10-9l3 12l7-14l9 6l8-7l2 12l12-5l-4 15l16-12l16-7l15 9l18-11l11 0l17 10l-14 1l-3-11l-7 11l-4-11l-4 19l-14-8l-16 2l1-11M1355.5 472.5l9 10l10 6l-14 6l-8-12l-5 12l-5-10l-13 15l0-14l-11 11l-3-18M115.5 475.5l0 10l14-9l13 6l14 4l-4-13l11 4l18 3l10 2l11 0l15-1l17-6l-1 11l12-10l3 15l8-7l9 6l9 7l0-14l15 2l6-9l2-11l12 12l7-8l4 13l9-13l1 17l10-11l14 4l17-2l12 5l14 6l12-2l9-4l15 9l10-2l15-3l12-10l0 10l12-5l2 12l10-10l10 14l3-14l7 15l4-17M340.5 475.5l5 14l9-10l9 7l8-9l0 16l12-11l2 11l12-5l4 10l8-12l6 10l3-14l8 17l7-8l11 14l-1-16l11 13l4-16l12 0l14 7l-9 5l-5-12l-6 9l-6-9M790.5 475.5l-4 10l-11-2l-14 2l-13-8l-1 11l14-3l15 9l-1-11M1246.5 475.5l7 13l13-10l4 17l8-8M129.5 476.5l1 19l12-13l-1 15l15-11l7-9l11 12l7-9l7 16l3-14l12 14l-1-14l12 13l3-14l16 5l15 5l-17 5l-14-15M295.5 476.5l-13 0l7 9l12 5l-6-14l14 1l11 5l10 4l15 3l9 6l0-16M1094.5 476.5l4 10l11-7l3 12l10-5l-3 13l-7-8l-14-5l-14-3l-11 5l-11 8l1-14l-11 11l-12-9l-18 7l-12 2l-2-12l-11 11l-15-5l-13 12l-1-11l-10 0l-8 8l-10 5l-4-13l-8 8l-8-6l-15-4l7 13l8-9M748.5 477.5l-14 12l13-1l6 9l8-12l2 15l13-6l10-9l20 4l15-6l11 0l10 5l13 3l16-8l10 5l-16 8l6-13M550.5 480.5l-14-6l-5 11l19-5l11 2l10 12l-17 4l-4-18l-11 14l-8-9l-17 13l-10-1l-12 3l2-17M1303.5 480.5l2 12l-17-1l-18 4l-17-7l-16-7l-4 15l-10-15l-8 13l18 2l11 5l-7-20M320.5 482.5l-6 9l-5-14l-8 13l13 1l16-5l1 13l14-10l4 17l5-11l9-9l8 7l14 0l7 10l5-15M561.5 482.5l-7 16l-15-4l-14 8l6-17M1364.5 482.5l-4 12l-13 0l-18 5l-11-3l-13-4l-13 9l-4-10l-5 15l-13-11l-8 7l-9-14l-9 13l9 6l0-19M832.5 483.5l-5 9l-6-9l-7 13l-8-7l-10 6l-10-10l0 15l-10-6l-2 15l12-9l10-5l18 1l13-4l15-4l-1 14l14-11l10 5l10 8l6-16l8 10l-14 6l-17 2l-3-15M1084.5 483.5l5 19l9-16l7 19l7-14M256.5 484.5l-1 16l10-10M1040.5 484.5l-2 13l-16-6l2 13l-14-11l-13-1l10 10l3-9M1400.5 484.5l9 5l7 8l9-15l9 14l2-12l11 10l5-11l6 11l0-10M1400.5 484.5l-8 11l-7-17l-5 18l-6-8l-3 15l-11-9l-10 11l-3-11l-5 17l-13-12l-6 9l-5-12l-7 9l-6-13l-4 16l-9-7l-9 5l-13 7l0-18M1400.5 484.5l2 14l7-9M623.5 485.5l-10 13l-10-4l-11-2l-10 12l-2-17M156.5 486.5l18 3l14 7l15 0l11-1l17 1l2-10M156.5 486.5l-1 10l-14 1l-11-2l-15-10l0 10l15 0l-9 7l-6-7l0 11l6-4l9 5l0-12M156.5 486.5l12 13l6-10l4 10l10-3l7 9l8-9l6 12l5-13l12 12l5-11l13 9l4-14l7 9l19-3l15-12l2 11l10-6l3 13l10-12l17 8l-16 3l-1-11M905.5 486.5l-4 19l-12-7l2 13l-16-7l-6 10l-11-8l7-10M1122.5 486.5l8 13l8-10l6 11l4-12M982.5 487.5l5 18l10-13M747.5 488.5l-12 13l-1-12l-20 4l-12 5l-13 2l-6 8l-7-13M842.5 488.5l-12 14l-3-10M345.5 489.5l-6 19l-8-9l-3 13l-13-10l-11 1l-13-7l-17 1l8 9l9-10l3 12l10-5l6 10l5-11M734.5 489.5l-14 12l-6-8M1203.5 489.5l-1 10l13-5l0 10l18-8l0 14l11-9l-1 15l10-9l9-5l8 11l-17-6l1 13l16-7l17 6l5-18M592.5 492.5l4 18l7-16l8 16l2-12l12 11l7-12l11 12l-1-19l16 7l0 11l13-3l12 3l-11 9l-1-12M371.5 493.5l-17 2l11 8l6-10l9 12l5-12M1052.5 493.5l10 3l11 7l0-15l16 14l-16 1l-14 10l3-17l-18 10l8-13l-14 4l-14 7l-17-2l-20 3l-18-6l-11-11l0 17l-8-9M1360.5 494.5l-1 15l12-6l9-7l12-1l10 3l14-1l18-1l13-2l11 0l-9 10l-2-10M1458.5 494.5l0 10l-9 0l-15-8l-2 10l-16-9l-3 10l-11-9l-1 11l-9-14l-5 13l-7-12M464.5 495.5l11 3l-9 8l-2-11l-10 7l-10 3l-18-6l-11-3l-14 2l-9 5l-12 2l-15-2l-16 3l-10 2l-11 4l-18 1l-16-5l-12-2l-10 3l2-12l-14 13l-5-10l-11 5l16 5l12-1l7 12l3-15l8 14l4-12l5 17l11-12l6 11l12-12l5 10l6-14l13 8l13-13l11 13l4-11l13 9l-1-11l13 7l10-14l8 18l3-15l9 18l9-12l6 10l4-13l12 4l15 1l3-14l8 7l-11 7l-6-9M796.5 495.5l1 11l17-10l16 6l11 0l17 4l-17 6l0-10M188.5 496.5l-3 11l-7-8l-10 0l-13-3l-5 10l-9-9l-11 10l10 6l1-16M231.5 496.5l7 17l6-8l10 14l6-9l6 17l6-18M928.5 496.5l-16 3l-11 6l-10 6l-22 3l-11 7l0-15M928.5 496.5l12 5l18 4l11-6l10 15l8-9l10 7l10-10l6 11l11-9l20 2l-6-9M928.5 496.5l-3 13l-13-10l2 16l-13-10l-5 18l-5-12l-11 16l-11-13l0 11l-11-4l-17-9l-11-10l-4 9l-12-15l-1 15l-16-5l-11-6l-1 10l12-4l-5 12l-7-8l-11-1l-11-9l-10-3l-18 4l-15 0l-18-3l13 13l5-10l8 11l7-11l14 9l4-13l7 13l3-10M1189.5 496.5l13 3l13 5l18 6l-15 4l-3-10l-10 14l-3-19l-10 9l-3-12l-14 4l-13 4l-5-10l-13 6l-14-1l-11 0l-14 6l-16-3l-3 12l-13-11l-2 12l-12-2l-15-7l-16 9l-4-11M504.5 497.5l2 11l8-10l11 4l11 5l3-13l7 12l8-8l16 12l1-16l11 10l-12 6l-15 5l-1-17M658.5 497.5l-15 12l15-1l14 9l19 1l-2-18l13 15l0-17M1416.5 497.5l6 16l10-7l17-2l2 11l7-11l0 11l-7 0l-11 0l9-11M401.5 498.5l4 12l-12 4l-17 2l-14 4l3-17M514.5 498.5l1 18l10-14l0 15l11-10l10-1l9 9l-13 4l4-13M168.5 499.5l-18 7l-10 7l12 5l-2-12l13 9l5-16l6 11l4-11M969.5 499.5l0 18l-11-12l-11 9l-7-13l-15 8l22 5l10 6l1-15M1119.5 499.5l12 12l-1-12M1119.5 499.5l1 15l11-3l13-11l18 4l-7 11l-11-15l-4 18l-9-7l2 15l-13-12l-10 0l9-15M735.5 501.5l4 9l10 0l11 0l14-1l-7 10l-7-9l-5 10l-6-10l-9 15l-1-15l-11 2l-13-1l-13 4l-11 3l-8-10M121.5 502.5l-6 14l0-10M1089.5 502.5l8 16l8-13l5 9l-13 4l-11-4l-15 1l13 11l2-12M195.5 505.5l-10 2l-11 3l-11 5l-11 3l-7 11l-5-16l-18 8l8-14l-15 9l7 5l-7 5l0-10M195.5 505.5l14 3l17-1l12 6l-9 4l-3-10l-10 12l-7-11l-18 8l4-11M901.5 505.5l5 19l8-9l11-6l4 11l18-6l8 16l2-10l12-3l10-3l8 7l0-16M1311.5 505.5l12 3l19 3l8-6l9 4l15 10l-3-16l16 5l14 1l12-2l9 6l18 2l-8-9M1311.5 505.5l-10 3l10 9l0-12M1350.5 505.5l1 16l8-12l5 12l10-2l13-11l2 12l12-11l11 12l1-14M349.5 506.5l3 10l10 4l-3 9l-7-13l-8 8l-5-16M797.5 506.5l5 15l11-10l13 0l15 1l6 12l11-3l5 13l-16-10l-12 0l-9-13l-1 11l-12-11l-1 15l-10-5l-10-3l-7 9l0-17l-10 16l-1-17M1044.5 506.5l2 10l13-3l-10 14l-3-11l-18-1l-15-2l-16-1l-10 9l-15 7l7-14M1283.5 506.5l4 13l14-11l-2 12l12-3l12-9l-2 11l-10-2l8 14l2-12l10 4l-8-15M185.5 507.5l6 9l-17-6l-3 12l-8-7l-5 15l-6-12M536.5 507.5l6 12l-17-2l-10-1l-9-8l-14-8l4 12l-15-5l0 14l10 0l-10-14l-13 16l-2-17l-16 9l-15 2l-12-3l-18-4l0 10l-12-6l-8 8l-9-6l1 15l-15-11M209.5 508.5l-6 18l-12-10l-7 11l-10-17M658.5 508.5l-5 13l-10-12l-18 0l-14 1l-15 0l-14-6l0 17l-12-11l-2 14l-13-9l1 11l-14-7l-11 7l-6-9l-12 11l2-12l-12 9l3-17l-10 4l-5 9l12 4l-7-13M625.5 509.5l16 10l2-10M625.5 509.5l-6 10l-8-9l-9 11l-6-11l-14 11l-14 3l-12 2l-16 7l2-14M625.5 509.5l11 19l5-9l12 2l19-4l-8 12l-11-8l-7 13l-5-15M925.5 509.5l-6 16l-5-10M1401.5 509.5l1 18l-13-7l-15-1l7 15l8-14l4 11l9-4l10-6l10-8l9 12l9-10l1 15l10-15l7 10l0-10M596.5 510.5l-3 19l-11-8l-8 12l-6-9l-7 15l-5-13l-9 16l-7-9l-9-7l-18 2l-10-3l-5 14l-7-18l-6 12l-4-12l-13 2l-18-8l-7 15l-8-13l-14 12l2-15l-18 6l-10 4l-2-10M739.5 510.5l-11 15l0-13l-9 8l-4-9M841.5 512.5l-6 12l-10-2l-13 4l-15 4l-5-12M140.5 513.5l-5 19l-13-11l1 20l-8-15l0 10l8 5l12-9l10-3l13 1l13-8l13 5l9 4l-2-15M1013.5 513.5l-9 9l-7-10l-3 16l-7-7l-5 10l-10-3l-3-11M1013.5 513.5l12 12l3-10l11 15l7-14M1013.5 513.5l-1 16l-8-7l-10 6l-12 3l5 8l7-11l14 11l-4-17M1059.5 513.5l9 17l3-15M1422.5 513.5l-2 15l-8-7l0 16l-10-10l5 16l-14-12l-12 3l-15 2l8-17M947.5 514.5l-4 17l-14-11l-10 5l-13-1l-10-1l-16 4l-11-2l-6 9l-16 1l0-11M1120.5 514.5l-4 10l-6-10l-9 13l-4-9l-13 8l17 1l15-3l17 2l7-8l15-3l16 7l-9-18l18 11l-5-15l17 8l-12 7l-9 7l-14 4l-2-11l-9 15l-6-12M450.5 515.5l4 18l14-10l4 11l9-13M435.5 517.5l-4 16l-10-4l-16-9l6 10l10-1l0 15l-10-14l-12 6l6-16M672.5 517.5l7 16l12-15l10 10l1-13l17 5l9 5l12 0l15-5l12-1l8 7l10 1l12 3l5-9M1311.5 517.5l-5 17l-7-14l-12-1l-9 5l-8-11l-9 17l-7-10l-11-4l-10-6l-1 14l-14-10l-13 4l-13-10l1 20l-13-13l-4 17l-5-10l-13 16l-1-12l-11 4l-13-4l-3 10l-14-12l-11 16l-4-13l-7 12l-10-13l-16 4l-19-3l-10 3l-14-5l-13 4l9 8l4-12M691.5 518.5l-1 19l11-9l18-8l-8 14l17-9l0 13l12-13l9 12l6-17l9 8l3-9M1205.5 518.5l8 7l5-11l4 16l10-6l11-8l-1 11l12-7l-5 17l-7-10l-10-3l4 14l6-11M1205.5 518.5l-12 10l-17 4l-18 6l-12-8l-16 6l13 5l3-11M1205.5 518.5l-1 14l9-7l9 5l14 8l13-1l12-7l17-6l11 7l-2-12M290.5 520.5l-11 1l-13 6l-12-8l-16-6l6 11l-15-7l-13 2l-13 7l-10 5l18 2l5-14l5 11l8-13l2 12l13-5l10-5l0 10l-10-5l-3 11l-10-6l-10 1l-10 3l-8-7M290.5 520.5l9 5l17-1l17-2l11 2l15 5l18 2l8-9l10 2l-7 10l-3-12M290.5 520.5l-1 15l-10-14l-1 18l-12-12l-12 2l-13 6l-8 9l-2-15l-10 13l0-12M929.5 520.5l1 12l-11-7l-6 8l-7-9l-3 12l-7-13l-4 11l-12-7l3 14l9-7l11 2l10-3l17-1l13-1l12-1l17-2l-15-8M1299.5 520.5l-10 11l17 3l13-3l12-8l11-12l9 10l13 0l-16 10l3-10l-20 2l17 8l-17 5l0-13M582.5 521.5l5 18l6-10l9-8l17-2l-8 8l-9-6M1364.5 521.5l2 15l-18-5l8 17l10-12l10 10l5-12l5 11l7-14l3 13l11-1l5-6l8-9l11-3l10 5l17-5l0 10l-17-5l6 9l11-4l0 3l-11 1l-10 1l-6-15l-4 16l-7-13l-3 14l-5-5M171.5 522.5l2 11l11-6l-3 21l12-17l16 12l2-10l10 9l-12 1l-17 6l1-18M825.5 522.5l-3 11l13-9l12 11l-12 4l0-15M344.5 524.5l-12 11l1-13l-12 14l-5-12l-6 12l-11-11l-10 10l-11 4l-12 4l0-16M344.5 524.5l7 13l8-8l5 11l13-9l11 3l11 2l-4-12M344.5 524.5l-1 19l-11-8l-11 1l-11 0l-11 4l0-15M1116.5 524.5l1 20l13-8l2 14l11-9l15-3l9 7l9-13l8 9l9-13l11 4l13 11l-4-18M1278.5 524.5l-2 10l-15-4l3 11l12-7l13-3l1 11l16-8l11 10l2-13l12 5l-14 8l8 7l6-15l15 13l2-18M740.5 525.5l-1 14l10-2l15-9l11-2l7 16l3-15M869.5 525.5l4 18l7-16M531.5 526.5l-1 12l-17-10l-15 11l-13-6l-13 1l-18-1l-11-3l-12 3l-10 11l8 7l2-18l9 13l3-16M775.5 526.5l-4 19l-7-17l-5 19l-10-10l-2 16l-8-14l-11-1l-17-4l-10-6l-1 17l11-11l7 8l10-4l8 11l3-10M1084.5 526.5l-2 10l-14-6l-12 9l-7-12M994.5 528.5l6 20l-13-9l-11 2l-4-13l-6 12l-11-10l-3 10l-9-9l-9 13l-4-12l-11 10l-6-9l-1 17l-9-14l-4 9l-7-11M1193.5 528.5l2 16l9-12l3 20l10-9l5-13l6 13l8-5l18 8l-5-9l15 4l-10 5l15 5l-5-10l16 7l-4-14l14 8l-10 6l-11 3l5 5l6-8l5 7l5-13l15 11l1-19M145.5 529.5l0 15l13-14l15 3l-11 7l-4-10M1012.5 529.5l-4 10l13-2l18-7l17 9l16 2l-4-11M411.5 530.5l1 21l-13-15l-4 10l-7-12l-10 10l-1-13M797.5 530.5l-15 12l-11 3l-12 2l-12 6l-11-4l-10 4l2-15M797.5 530.5l13 14l2-18l10 7l13 6l-12 5l-1-11l-12 11l13 0l10 5l2-10l9 6l3-10l7 9l9-10l10 9l10-2l16 4l13 5l7-8l15 2l18-4l14 0l10 1l6-10M797.5 530.5l-1 19l-14-7l2 11l-13-8l-11 12l-1-10M1441.5 530.5l-4 10l-10 1l-10 1l-10 1l12 8l8-10l7 18l3-19l13 5l8-7l0 7l-8 0l-3-6M485.5 533.5l-1 12l-12-11l-2 11l-13 0l-3-12l-14 13l17-1l15-11M646.5 534.5l-10-6l-17-9l7 17l-15-9l-18 2l4 11l14-13l4 14l11-5l10-8l-1 17l11-11l18-5l15 4l11 4l-9 6l-2-10l-11 12l-4-16l-7 13l-11-8l-4 18l15-10l11 3l13-2l4 10l5-16l10 8l18-3l8 11l-18 2l10-13M241.5 535.5l6 11l7-17l12 14l-19 3l-14-2l-12-2l0 16l-12-15l-7 11l-10-5l-11-1l-8-15l-3 19l-8-12l-17 4l-10-12l-2 11l-10-2l-8 5l0-10M289.5 535.5l10 5l-2 10l-8-15l-5 16l-6-12l-6 13l-6-9l-8 7l-11-4l-9 7l-5-9l-12 14l17-5l15 7l-6-14M332.5 535.5l2 16l-13-15l-4 11l-7-11l-3 19l-8-15M1331.5 536.5l4 14l11-1l10-1l10-1l0-11M351.5 537.5l13 3l14 4l17 2l17 5l9-7l-1 15l9-8l11-5l6 11l11-12l12 12l1-12l14 0l14-6l7 8l8-19l5 18l12-8l10-5l-3 15l-7-10l0 19l-12-11l-13 1l-11 11l4-19M351.5 537.5l-8 6l9 6l-1-12M1158.5 538.5l-2 11l-13-8l0 12l13-4l11-4l17-4l11 3l12 8l11 2l10-11l-11 0l1 11l11 0l7-16l8 21l10-13l10 11l5-6M966.5 540.5l-5 11l-9-11l-7 11l-11-7l-11 9l-4-11M1105.5 540.5l-11-1l-12-3l-10 5l7 10l3-15l8 15l4-12l7 12l4-11l12 4l15 6l11 3l8 7l5-11l9 7l2-11l12 13l5-17l10 14l1-11M1437.5 540.5l7 16l6-11l8 10l0-10M123.5 541.5l5 13l5-11l12 1l5 9l12-13l-2 18l10-6l11-4l9 14l2-13M883.5 541.5l3 13l-13-11l-19 1l-10 1l-11 4l-7 8l-3-13l-8 11l-5-11l-14 5l-12 4l-11 6l-2-14M547.5 542.5l14-3l13-6l13 6l10 1l18 1l8 8l3-13l9 9l-12 4l-13 7l5-15l-15 10l-3-11l-6 16l-4-17l-10 8l-3-14l-8 15l-5-9l-10 18l-4-15l-10 6l-7 9l-12 3l0-14l-10 12l-3-11M657.5 542.5l-2 14l13-11l4 11l9-13M1290.5 542.5l5 12l10-1l12-9l-2 8l10-1l10-1l7 9l4-10l14 5l6-7l10-1l10-1l10-1l13 11l-2-12M1417.5 542.5l2 9l-10 4l-16 0l3-11M133.5 543.5l6 10l6-9M1228.5 543.5l1 11l15 5l10-1l0-12M810.5 544.5l-5 11l-9-6l1 15l-13-11l3 14l-14-8l-13-2l-13-4l-14 10l3-14M854.5 544.5l3 11l16-12l-6 16l19-5l13-9l5 12l8-7l11 3l16 10l-5-19M457.5 545.5l-1 18l-10-6l-10 6l4-17M484.5 545.5l-15 12l-13 6l-10 9l0-15M484.5 545.5l10 13l14 0l10 2l17 6l2-18l14 9l15-9l11-1l14 9l9-5l10 5l14 6l11-17l7 7l13 4l17 0l13-3l15-8l8 10l12 7l6-9l7 10l-13-1l-10 3l-2-10l-14 10l6-20M484.5 545.5l1 19l-16-7l5 11l11-4l9-6l4 10l10-10l1 10l9-8l1 16l16-10l-5-9M395.5 546.5l-11 6l-6-8l-13 9l-1-13l-12 9l13 4l19-1l9 6l2-12l11 15l6-10l8 8l-14 2l-13-3l-13 4l4-10M1046.5 546.5l-7-16l-10 15l-8-8l-9 12l-4-10l-8 9l12 1l17-4l17 1l10-7l4 17l12-15l-2 15l9-5l11 0l11 0l16-7l4 9l11-3l1 10l10-7l-1 17l9-10l14-4l14 2l15-3l13-3l6 10l5-8l5 7l6-7l5 6l10-1l-10 8l0-7l-11 1l-10 1l-10 1l4-11M1046.5 546.5l14 10l10 0l13 8l-4-13M1046.5 546.5l-2 13l-15-14l-4 10l-13-6l-9 9l-3-10l-9 5l-4-14l-6 12l-5-10l-15 10l20 0l10 2l12 5l12 3l-3-12M317.5 547.5l17 4l9-8l0 14l9-8l7 17l6-13l15 9l-6 9l-9-18M317.5 547.5l-10 8l-10-5l-13 1l-12 1l-14-2l-5 10l18 4l-13-14M317.5 547.5l4 15l13-11l9 6l-9 5l0-11M1366.5 547.5l4 10l6-11l3 5l7-6l7 10l-14-4l-9 6l-10-3l-4-6M566.5 548.5l-2 12l13-13l2 16l12-7l6 10l3-15M623.5 549.5l1 13l18-10l-9 16l-9-6l-1 10l10-4l13 1l-4-17M833.5 549.5l11 9l0-13l13 10l-13 3l-18-1l-11-2l-10 0l-8 9l-10 3l14 7l-4-10l16 6l2-15M297.5 550.5l-4 14l-9-13l-1 10l-11-9l-1 12l12-3l10 3l14-9l14 7l13 0l8 6l1-11l16 9l-17 2l-11 8l3-14M912.5 550.5l8 17l3-14M1335.5 550.5l-9 14l-1-13l-11 9l1-8l-10 1l9 7l-15 1l6-8M429.5 551.5l7 12l-16-4l-1 12l-13-10l-2 12l-11-15l-5 13l-8-9M945.5 551.5l16 0l15 10l5-10M945.5 551.5l11 11l5-11M945.5 551.5l-6 12l17-1l20-1l15-8l-7 16l-8-8l-3 12l11-4l17 0l-10-16M170.5 552.5l1 11l10-15l1 19l8-5l12-8l19 4l12 5l5-10l7 17l8-10l4 9l14-5l16 11l-4-14M150.5 553.5l-11 0l-11 1l-13-8l0 10l13-2l0 12l11-13l5 11l6-11l10 5l11 5l11 4l17 4l3-17l10 11l9-7l3 10l9-5l12 7l12-1l9 7l5-12M747.5 553.5l-2 17l15-13l2 11l11-9l6 17l8-9l1 17l13-10l12-4l-8-15M1121.5 553.5l-20-2l14 11l6-9l12 7l-18 2l-10 5l-4-16l-6 12l-5-12l-7 13l12-1l10 4l7 6l3-11l7 10l11-12l9 10l10-1l-1-9l11 8l3-12l8 11l6-9l4 8l11-11l9 8l-10 1l1-9M886.5 554.5l18 3l-10 10l-8-13l-3 14l-16-9l-10-4l-14 14l-17-12l-13 13l15 3l-2-16M1360.5 554.5l-18 5l-16 5l-12-4l-1 14l-14-13l-4-7l-10 1l-11 1l-10 1l-10 1l11 4l9-6l2 15l9-16l14 6l-11 15l-3-21M1360.5 554.5l-12 14l-6-9l-6 12l-10-7l-13 10l-11 4l-3-17M1360.5 554.5l-2 17l12-14l5 10l4-16l10 17l4-13l9 10l7-10l9 7l1-11l15 8l10-3l14-1l0 11l-14-10l2 12l-12-9l-16 3l-16 3l-13 3l-14-1l-17 4l-10-3l-12 3l13 9l-1-12M307.5 555.5l-2 12l16-5l10 14l-12 1l2-15M1025.5 555.5l19 4l16-3l-6 9l16-9l1 21l12-13l8 11l4-12l6 11l4-7M1025.5 555.5l-10 6l12 4l-2-10M672.5 556.5l-16 12l-1-12l-9 13l10-1l11 3l5-15l13 15l0-18l9 12l16 0l12 9l-2-12M469.5 557.5l-7 16l-6-10M551.5 557.5l13 3l15 3l18 3l13-10l0 17l14-11M551.5 557.5l-16 9l14 6l2-15M1264.5 557.5l1 5l11 9l-13 5l-9-18l-10 12l0-11M844.5 558.5l-1 11l-15 4l-14 11l-1-14M1003.5 558.5l-2 11l14-8l3 15l9-11l17-6l10 6l-10 7l0-13M867.5 559.5l-2 10l-8-14l-4 20l-10-6l-3 18l-12-14l-3 13l-11-2l-13-10l1 10l12 0l-7 13l-5-13l-14 0l-9-8l-17-8l-17 2l-12-7l3 11l9-4l0 11l-9-7l-14 0l11-11M1434.5 559.5l-7 9l-9-6l-1 15l-15-12l-3 14l-10-11l-5 11l-9-12l-1 13l-16-9l-9 9l15 3l-6-12M564.5 560.5l9 11l6-8l7 11l11-8l13 7l13-1l10 10l0-14M564.5 560.5l-15 12l12 2l3-14M1133.5 560.5l-1 11l10-1l-13 12l3-11l-10 1l-10 1l-11 1l-10 1l-10 1l2-12M976.5 561.5l-15 13l-5-12l-8 11l-9-10l-19 4l-16-10l5 14l-15-4l-11 1l-18 1l-12 6l14 8l-2-14l12 7l6-8l6 8l5-9l3 15l12-11l11-4l13 5l6-9M190.5 562.5l9 9l13-6l12 3l11 10l-2-15M1265.5 562.5l-2 14l-19-6l-10-3l-11-6l-1 10l-9-9l-8 14l-2-13l-10 13l0-12l-10 2l-10 1l-11 1l-10 1l8 16l2-17l13 9l8-11l10 10l12 0l17-5l12-4l-1 12l11-9l4 11l15-5l11 5l2-10l12 5l14 2l9 8l2-12l9 7l4-17M436.5 563.5l-17 8l-15 2l-16-2l-14 0l-15-5l-9 12l-8-10M436.5 563.5l10 9l16 1l12-5l8 9l3-13l13 4l11 0l10 8l13 1l3-11l7 15l7-9l3 14l9-12l12-3l13 3l13 7l-2-15M436.5 563.5l-7 12l-10-4l3 12l-18-10l-8 7l-8-9l-12 13l-2-13l-14 12l-1-17M144.5 564.5l16-6l-1 16l12-11l5 16l6-12l14 14l3-10l11 13l2-19l10 15l2-12M144.5 564.5l-16 2l-13-10l0 11l13-1l-6 12l-7-11l0 10l7 1l12 2l10-16l15 10l17 5l20 2l14 3l12-4l13-2l10-8l5 9l7-10M144.5 564.5l2 18l13-8l7 9l10-4l11 12l9-10l4 10l10-7l8 10l4-14l13 10l0-12l15 1l16-3l21-1l6-11l12 3l-7 8l-5-11M1054.5 565.5l17 12l10-1l-7 10l-3-9l-10 1l-7-13l-3 14l-7-7l-17-7l3 16l14-9l-4 8l11-1l10-1l13 8l10 2l7-13l15 5l6-7l2 15l8-16l7 10l-15 6l-8-8l-5-6M128.5 566.5l6 14l12 2l-11 11l-1-13l-12 14l0-16l-7 9l0-10M920.5 567.5l3 11l-14-7l-1 22l15-15l10-6l15 1l13 1l12-1l6 13l5-17l7 10l10-10l17 7l12 5l10-1l-12 7l2-6l-10 1l-2-6l-8 7l-9-14l-1 15l-9-5l-2 6l11-1l10-1l10-1l8 5l17 0l6-8l11 11l-1-12M1173.5 567.5l2 10l18-1l-5 12l-13-11l-15 8l18 6l-3-14M474.5 568.5l-4 17l-8-12l-18 10l2-11l-17 3l-7 8l-18 6l0-16M498.5 568.5l-16 9l12 5l4-14l8 13l3-13M762.5 568.5l-4 16l-13-14M1427.5 568.5l19 0l12-2l0 10l-12-8l-10 13l-9-13l-10 9l-18 2l-15 0l-10 1l-10 3l-13 9l-2-12l-13 4l0-13l-14 10l14 3l-9 6l-5-9l-11 5l16 4l9 5l0-11l15 8l-15 3l-11 10l2-15l-15 12l-1-16l-11 5l2-13l-13 10l-1-12l-14 5l-16 5l5-10M1446.5 568.5l-2 20l14-12l0 10l-14 2l-8-7l-19-4l-4 11l-14-9l-9 10l-6-10l-3 15l-7-14M1152.5 569.5l-8 22l-2-21M388.5 571.5l1 17l7-8l8 9l-15-1l-13-4l-16-1l-10-5l-19-2l-8 16l-4-15l-14-10l3 14l-10-6l-11 0l-10 10l-11-9l-6 14l-10-11l-15 11l11 2l4-13M667.5 571.5l18 0l9-6l1 12l15-12l-1 13l13-4l9 10l5-10M667.5 571.5l8 6l10-6l10 6l14 1l8 9l5-13M667.5 571.5l-3 11l-8-14l-5 11l-5-10l-13 13l18-3l13 3l11-5l7 12l3-18M623.5 572.5l-7 10l-6-9l-11 8l17 1l17 0l14 6l4-9l11 13l2-10l9 14l2-19M933.5 572.5l7 10l8-9l11 15l2-14l8 13l4-14M462.5 573.5l-7 17l-11-7l-15-8l0 17l-7-9l-7 13l-11-7l-10 15l-5-16l-15 11l2-15l-11 10l-5-11l-6 9l-4-14l-12 14l-7-16M948.5 573.5l1 16l-9-7l-17-4l5 13l12-9l-1 8l10-1l10-1l10-1l10-1l12-7M159.5 574.5l-5 20l-8-12M561.5 574.5l1 11l11-14l0 17l13-14l1 17l12-10l8 11l9-10l9 12l8-12l3 13l11-7l15 4l11 4l9-7l13-12l0 13l14-12M298.5 575.5l1 12l-12-12l2 16l-12-6l-17 5l-14 2l15 8l-1-10l16 8l1-13M1091.5 575.5l10 18l5-13M779.5 576.5l-21 8l-13-3l-14 3l-14 3l-22 3l-13-1l6 14l7-13l15 12l7-15l5 9l9-12l7 10l7-13l4 12l9-9l11 5l10-13l-1 19l10-11l8 20l6-20M877.5 576.5l12 0l8 6l-14 3l-6-9l-10 7l16 2l6-9M1081.5 576.5l3 12l17 5l13-5l16 9l-1-15l15 9l16-6l-4 10l-12-4l-14 6l-10 4l-6-13l-4 18l-9-13l-10 12l-7-17l-8 17l-2-19l-12 4l-17-3l-5-7M1193.5 576.5l4 16l8-16l10 4l7-9l11 8l-18 1l15 9l3-10l15 2l10 5l-17 4l-8-11M1205.5 576.5l3 17l7-13l4 13l11-4l11 1l7-9M532.5 577.5l10 4l10 5l10-1l11 3l14 3l20 1l8 6l1-16M532.5 577.5l-8 9l-5-10l-13 5l-12 1l-12 7l0-12l-12 8l12 4l9 11l3-18l9 11l3-12l18 5l14 8l-6-17M1417.5 577.5l10 17l9-13M923.5 578.5l-5 14l10-1l11-1l5 6l5-7l5 8l5-9l15 8l5-10l10-1l11 12l10-14l8 9l2-10M176.5 579.5l-2 12l-8-8l-12 11l-19-1l-13 1l-7-7l0 10l7-3l-7 13l0-10M1399.5 579.5l3 10l11-1l14 6l17-6l14 8l0-10M308.5 581.5l11-4l-8 14l-3-10l-9 6l-10 4l-13 7l-15 2l-9 6l-6-14l-14 9l3-11l-17 4l-13 6l5-16M506.5 581.5l6 17l12-12l-1 11l15-3l4-13M1274.5 581.5l15 7l11 3l-3 10l-8-13l-13 3l-2-10l-9 12l-7-7l-2 16l-15-12l-2 16l-9-17l-7 13l-4-9l-11 0l-11-1l-9-4l-10 3l12 11l-2-14M897.5 582.5l11 11l10-1l6 7l4-8l16 5l10 1l20-1l-5-9M897.5 582.5l1 12l10-1l4 11l6-12M897.5 582.5l-9 13l-5-10l-5 11l-11-13l-10 3l-4-11l-13 12l-15-1l7 8l8-7l17-1l10 11l0-14M166.5 583.5l1 18l7-10l13 0l13 0l5 9l-11 1l-7-10l-5 10l-8-10M758.5 584.5l3 17l8-12l9 6l-17 6l-12-8l-11 1l-16 2l-12 6l-22 1l-15-7l3 11l12-4l17 10l5-11l5 10l7-16l8 8l8-10l6 9l5-10l6 15l6-7l5 6l12-12l8 10l2-21M814.5 584.5l3 18l8-16l2 15l5-7l5 6l3-13l7 12l10-13l0 12l10-1l11-1l10-1l10-1l14 10l12-5l20-3l11 13l-1-12l11 15l9-16l17 5l-2-16M1000.5 584.5l0 13l18-5l10-5l6 9l11-9l1 12l16-9l6 8l6-12M470.5 585.5l-15 5l-16 4l5-11l-15 9l10 2l6 8l10-12l11 8l4-13l10 16l2-12M562.5 585.5l0 13l-10-12l-14 8l10 3l4-11M1160.5 585.5l8 19l10-13l1 18l11-7l7-10l13 13l9-12M979.5 586.5l12 15l9-4l17 6l1-11l16 4l12 3l12 7l4-16M299.5 587.5l12 4l12 1l15 0l16 0l11 2l9 5l9 4l6-15M299.5 587.5l6 13l6-9l5 10l7-9l8 9l7-9l7 8l9-8l3 14l8-12M299.5 587.5l-5 18l-5-14l-7 17l-6-10l-5 17l-10-15l0 12l-9-6l-11 4l5-18M1289.5 588.5l-7 17l-6-14l-11 2l-9 9l10 4l10-15M1413.5 588.5l3 15l-14-14l-12 0l-9 5l-17-11l1 16l-14-7l2 10l12-3l16-5l16 7l-7-12M404.5 589.5l5 19l6-12l14-4l-6 12l-8-8M1402.5 589.5l-5 12l19 2l11-9l8 7l9-13l3 12l11-4l0 11l-11-7l-12 1l-12 9l4-16M200.5 591.5l-6 10l-12 0l-15 0l-13-7l-6 7l-13-8l-6 14l-7-13M587.5 591.5l9 10l11-9l4 16l4-10l10-4l11 1l7 9l4-16l9 20l6-16M587.5 591.5l-1 11l10-1l15 7l12-2l2-12M587.5 591.5l-14 11l0-14l-11 10l-14-1l-9 11l-1-14M1144.5 591.5l4 11l8-7l12 9l11 5l13 4l-2-11l20 3l-2-12M1300.5 591.5l12 11l-15-1l-15 4l-16 1l-1-13M429.5 592.5l6 16l4-14M1351.5 592.5l-8 13l-7-10M503.5 593.5l9 5l11-1l-3 10l-8-9l-12 7l3-12l-12 7l-11 1l-14-3l-21 4l-10 6l-12-4l-14 4l-15-4l-11-1l9 11l2-10M154.5 594.5l-1 18l-5-11l-19 6l-14 0l0 10l14-10l12 11l7-17M218.5 594.5l14 7l9 9l-6 8l-3-17l-10 10l-4-17l-11 17l-2-11M898.5 594.5l-4 14l-6-13l-7 13l-3-12l-7 9l-4-8l-5 13l-5-12l-10 1l-10 1l-10 1l-10 1l-10-5l-1 6l11-1l0 8l10-9l8 17l2-18l5 5l5-6l15 11l9-5l10 3l13 0l18-4l9 7l3-12l12 12l8-15M778.5 595.5l-2 11l10-1l10-1l11-7M1156.5 595.5l2 16l-10-9l-18-5l-3 13l-7-9l-10 5l-19-1l-15 0l-8-7l-10 8l8 8l2-16M673.5 596.5l-17 12l-13-4l-8 9l1-18l-13 11l-8-8M722.5 596.5l3 15l5-7l14-1l11 5l11-1l10-1l-2 9l-8-8l-6 7l-5-6l-10 1l-1-6l-9 7l-5-6M974.5 596.5l6 17l11-12l16 7l-7-11M1034.5 596.5l-17 7l-10 5l13 6l-3-11l11 5l6-12l6 15l6-12l7 18l5-11M523.5 597.5l16 11l-19-1l-7 9l-1-18M1130.5 597.5l10 17l8-12M562.5 598.5l11 4l13 0l-6 10l-7-10l-5 11l-6-15l-4 11l-10-12l1 17l-10-6l-12 8l-7-9M847.5 599.5l0 17l-5-11l-7 13l-18-8l-11-7l-10 1l9 6l1-7M1365.5 599.5l12 10l4-15l8 15l8-8l15 12l4-10l7 7l-11 3l-12 7l-3-19M1365.5 599.5l-13 14l1-11l-10 3l-18 0l-13-3l-2 13l-13-14l1 15l-16-11l-7 7l-9-6l-16 9l6-13l-17 4l-16-4l-13 3l-18 8l14 6l4-14l14 12l-1-15M1365.5 599.5l5 20l7-10l12 0l-7 9l-5-9M305.5 600.5l11 1l15 0l14-1l12 6l17-7l-7 15l16-11l-2 14l11-3l17-6l12 14l2-18l9 14l3-10l8 7l2-13l11 9l10-13l6 19l8-16l4 13l7-14l9 5l-16 9l19 1l-3-10l13 11l-10-1l-14 8l-5-9l-12 3l-16-6l-13 4l-11 3l-11 4l-15 6l3-20l-13 15l-4-9M305.5 600.5l-11 5l-12 3l-11 7l-10-3l-9 13l0-19M305.5 600.5l4 11l7-10l4 10l11-10l8 8l6-9M1447.5 600.5l-7 19l-5-18M167.5 601.5l8 8l7-8l5 10l7-10l13 10l15 0l13 7l-16 4l3-11M167.5 601.5l-14 11l9 6l5-17M194.5 601.5l3 18l10-8l12 11l-14 7l2-18M991.5 601.5l-2 17l18-10l4 15l9-9l8-6l12 3l13 6l13-3l10-9l6 9l9-9l16 11l3-10l17 4l13 4l18-3l10-7l-2 18l13-13l-1 16l14-12l2 13l12-7l18-2l15-11l11 9l-9 5l-2-14M586.5 602.5l4 12l6-13l6 13l9-6l7 8l5-10l12 7l9 7l-1-16l11 14l2-10l20-1l8 8l4-12l6 11l11-1l10-1l10-1l10-1l10-1l-5 6l-5-5l-5 14l-5-13l-5 19l-5-18l-6 6l-4-5l-12 14l1-13l-10 1l-10 1l2-9l-12 10l-8-9M912.5 604.5l-1 12l-17-8l7 13l10-5l10-5l15 0l19-2l10 3l15 1l9 5l-12 7l-12-13l-12 13l2-16l-9 8l-10-6l-3 12l-12-12l-3 15l-7-10l-3 13l-7-8l-15 3l-5-16l-6 12l-4-15M294.5 605.5l15 6l11 0l19-2l18-3l10 8l14 3l15 6l10 5l14 14l1-20l18 7l4-14l8 6l5-10l5 17l11-11l17 6l-17 5l0-11M294.5 605.5l-10 14l-2-11M294.5 605.5l2 18l13-12l3 14l8-14l5 10l14-12l13 9l5-12M786.5 605.5l0 11l10-12l1 13l8-7l12 0l4 12l14-4l12-2l15-6l13 10l-12 2l-1-12M1091.5 605.5l3 16l-12-7l-16 0l11 14l5-14M1282.5 605.5l3 18l-10-11l-8 9l-1-15M1325.5 605.5l-15 10l-12 1l-13 7l-18-2l-17-6l1 13l-10-8l-17-3l-8 13l-10-11l3 19l-15-12l-16-1l-12-3l-8-11l-13 12l-5-9l-9 6l-4-10l-7 10l-10-14M1325.5 605.5l12 11l6-11l9 8l-15 3l-19 5l7-16M623.5 606.5l0 16l12-9l-2 8l11-1l10-2l10-1l10-1l-2 16l-8-15l-8 10l-2-9M776.5 606.5l10 10l-12-1l-14-1l-8 11l3-17M129.5 607.5l2 15l-16-5l0 11l16-6l10-4l12-6l-3 12l12-6l13-9l12 2l10 8l8 10l-17 6l9-16l-17 10l7-18l-15 9l3-11M539.5 608.5l3 22l7-16l9-5l10 4l12-1l10 2l12 0l11 9l-2-15M894.5 608.5l-8 16l-11-4l-8 12l-4-10l-16-6l8 12l8-6M1007.5 608.5l-6 18l-12-8l0 10l-12-3l3-12M1028.5 608.5l3 15l9-12l2 11l11-5l1 11l12-14l1 16l10-2l17-7l13-5l13 4l11 0l14 3l12 4l1-16M339.5 609.5l2 13l11-4l15-4l-5 9l-10-5l-2 19l-9-15l-16-1l-13 4l-16-2l-12-4l-13-4l-1 12l-9-15M558.5 609.5l4 19l6-15l6 8l6-9l3 14l7-12l3 11l9-11l1 10l10-1l5-7l5 6l10-1l7 4l4-5l12 7l-16-2l5 12l11-10l16 5l12 1l0-18l9 12l16-9l11 12l10-6l10-9l12 10l-7-16M1389.5 609.5l11 11l-18-2l-12 1l-18-6l4 10l14-4l7 10l5-11l10 10l8-8l12 7l0-14l14 11l-3-14l17 9l18-12l0 10l-18 2l-14 5l-14 3l-10 4l-2-11M241.5 610.5l11 15l-17-7l-3 11l-13-7l-2 13l-12-6l-4 12l-13-6l-8-6l-8-9l-10-2l6 12l4-10M805.5 610.5l4 13l8-13M965.5 612.5l0 13l-12 0l-7-8l-13 6l-15 3l-10 3l-14 3l7-11M1352.5 613.5l-4 17l-11-14l-3 17l-16-12l-8-6l-5 9l-7-8M367.5 614.5l12 15l2-12M760.5 614.5l11 17l3-16l7 17l5-16l11 1l12 6l12-1l6 10l8-14l11 17l1-19M1020.5 614.5l11 9l11-1l12 6l13 2l-5 14l-8-16l-8 7l-4-13l-8 16l-3-15l-20 0l-10 3l-12 2l-14 8l2-11l-12 0l10 11l-15 3l-7-14l-6 10l-1-18M740.5 615.5l-5 20l-5-11M513.5 616.5l14 0l-6 10l-8-10l-2 17l-8-18l-5 14l-9-6l2 12l7-6l13 4l10-7l11 5l-5-15l15 14l10-1l-3-15l13 14l12-7l9 5l10-1l10-1l5 7l5-8l10-1l2 16l8-17M674.5 616.5l10 17l9-6l13 9l3-18M786.5 616.5l4 10l7-9l3 12l9-6l2 11l10-12M1107.5 616.5l-4 16l17-12l5 9l6-9l5 12l9-9l0 16l12-12l9-5l2 11l10-8l4 10l12-9l-2 14l-10-5l-14-2l-11-6l-1 15l12-9l13 12l1-10M1224.5 617.5l3 15l14-12l1 18l9-10l16-7l5 15l13-13l20 1l13-3l-4 11l-9-8l-4 10l-16-11l6 16l10-5l13-2l20 1l14-3l8-7l7 12l7-16M1458.5 617.5l0 10l-18-8l4 12l14-4l0 10l-14-6l-11 1l7-13M235.5 618.5l5 17l12-10l18 2l14-8l-4 10l16-6l6 10l10-8l9 6l4-10l12 16l4-15M432.5 618.5l7 11l12-8l10 7l11 0l9 8l8-13M875.5 620.5l2 16l9-12l8 8l-17 4l-10-4l-12-4l-9 7l-19-3l-16 2l-11-5l-10-3l-9 6l-10-1l-19-6l-17 10l-15-5l-14 6l12 5l2-11M1120.5 620.5l-4 15l9-6l11 3l9 7l11 3l15 7l-3-16M451.5 621.5l-1 18l11-11l10 9l1-9M574.5 621.5l-2 6l11-1l0 14l10-15l8 16l2-17M1267.5 621.5l-11 20l-5-13M131.5 622.5l2 13l8-17l9 6l18 6l12-1l-6 12l-6-11l-8 7l-10-13l-17 11l-18-7l0 10l18-3l15 3l2-14M421.5 622.5l9 19l9-12l11 10l10-1l1-10M296.5 623.5l-5 12l-11-6l-10-2l-7 10l-11-12l0 12l-12-2l-8-6l-15 6l-16 6l-8 8l-5-14l-14 6l-14-4l-12 1l-13 11l-2-14l-11 8l-7-5l0 10l7-5l13 6l9 6l4-17l6 13l6-14l6 13l8-9l9 8l5-14M362.5 623.5l17 6l17-6l3 21l7-16l4 15l10-1l10-1l10-1l-1-11M362.5 623.5l-1 11l18-5l-12 13l-6-8l-11 3l12-14M396.5 623.5l-7 22l-10-16l0 17l-12-4l2 5l10-1l10-1l10-1l11-1l8 9l12-11l5 15l5-16l10-1l4 10l6-11l11-1l10-1l10-1l10-1l-3-5M613.5 623.5l12 15l15-13M1031.5 623.5l-9 11l-11-11l-5 13l-5-10M312.5 625.5l2 13l7-7l16 6l13 0l9 11l2-14M965.5 625.5l-5 14l-13-4l-14-12l0 11l-15-8l-3 11l-7-8l-3 11l-11-8l-10 12l-7-8l-8 7l-2-11l-12 12l0-16M521.5 626.5l0 6l11-1l10-1l-5 10l-5-9l-6 12l-5-11l-10 1l-10 1l-8 5l-2-4M790.5 626.5l-1 13l11-10l-1 14l12-9l10 10l6-12l8 14l11-11l9 9l14-1l15 1l11 6l-1-18M572.5 627.5l-10 1l-10 1l3 14l7-15l7 10l3-11l11 13l-14-2l-14 5l-13-13l3 16l-8-6l-11 3l-15-10l2 16l-12-15l-2 14l-6-9l-12-3l-11 9l1-8M656.5 627.5l-1 12l17-7l3 9l9-8l4 10l5-16l5 17l8-8l4 18l8-13l17-6l9 5l8-15l2 11l17-5l4 12l6-11l8 7l-14 4l-10 0l6-12M232.5 629.5l-1 14l9-8l8 17l4-15l11 0l17-8l8 16l3-10l11-2l12 5l10 4l-3-11M280.5 629.5l-3 19l-14-11l-4 14l-7-14M1125.5 629.5l-1 15l12-12l-1 14l10-7l3 15l8-12l8 15l7-8l10-4l11-5l17-2l7-8l11 2l15 6l14 3l16-5l19 3l-8 6l-11-9l-9 13l-7-8l-12 9l-2-12l-18 4l-8-12M1067.5 630.5l11 14l-1-16l15 4l2-11l9 11l-11 0l-14 12l-16 0l-16-9l-12 3l-12-4l-16 2l-17-8l-2 12l-12-4l-5 9l-10-6l-3 14l-10-18l-14-1l-18 3l-10 3l-10 10l13 4l7-17l9 6l9-9l3 11l11-10l-4 21l-7-11l-12-2l-5 11l-4-17M608.5 631.5l17 7l20-1l10 2l9 4l8-11M608.5 631.5l-7 10l-18-1l-13 9l-1-11M608.5 631.5l7 11l10-4l11 7l9-8l1 12l9-10l1 15l8-11l11-2l13 2l10 1l12 10l20-3l5-16M1402.5 631.5l-10-3l-15 1l-14 6l-15-5l-5 12l-9-9l-12 9l-8-10l-5 16l-8-14l-3 13l-7-8M1402.5 631.5l10 8l0-12l13 14l1-17l7 8l-8 9l-13-2l-11 4l-9-15l-6 13l-9-12l-1 17l-13-11l-20 7l-21 0l-13 6l-11-1l-15-2l-10 5l-1-14M1402.5 631.5l-1 12l-15-2l-10 5l-15 6l2-17l-13 15l-7-8l-8 13l-13-13l0 14l-13-8l2 10l11-2l13-1l15-5l11 2l13 5l2-11l12 7l-2-12M1092.5 632.5l4 14l7-14l13 3l-7 8l-6-11M1227.5 632.5l-3 10l-15-4l-7 11l-10-9l0 11l-11-6l-6 16l-4-12M1433.5 632.5l8 14l3-15l8 11l6-5l0 10l-6-5l-11 4l-16-5l-4 10l-9-12l-1 15l-10-11l-13 10l10 4l3-14M302.5 633.5l0 10l-11-8M811.5 634.5l0 13l-12-4l-10-4l-5 11l-9-7l-13 12l-8-19l-10 4l0 10l10-14l11 7l-3 12l-18-5l-14 1l14-11M217.5 635.5l14 8l-10 5l-4-13l-8 17l-8-11M1116.5 635.5l8 9l-15-1l-13 3l-18-2l-11 11l-5-11l-11 1l-5-10l-6 12l-6-9l-11 6l-1-10l-11 10l-5-8l-19 4l-17 5l-13 8l-14 3l-14 2l-5-15M481.5 636.5l5 13l7-10M1006.5 636.5l-11 12l-8-8l-7 16l-10-11l-1 11l-12-3l-10 13l-4-10M350.5 637.5l-1 12l-12-12l-13 5l4 9l9-14l1 13l11-1l10-1l8-6M314.5 638.5l-12 5l-14 2l-11 3l-18 3l-11 1l-17-9l2 13l-12-8l-12 4l-16-3l-10 0l-17 1l-12 1l-10 4l-10 5l-12-17l-7 15l0-10M314.5 638.5l4 14l6-10M314.5 638.5l-6 15l-6-10l-4 11l-10-9l-1 10l-10-7l0 8l10-1l11-1l10-1l10-1l10-1l10-1l5 8l6-9l9 11l1-12l10-1l2 11l8-12l8 7l12-9l8 9l3-10M460.5 638.5l10 7l-16 4l-14-9M625.5 638.5l4 14l-14-10l-14-1l7 10l7-9M1034.5 638.5l-4 13l-7-7l-12 0l-16 4l-15 8l-11 0l-8 12l-4-15M789.5 639.5l4 15l6-11l4 15l8-11l10-3l14 2l20-2l6 8l8-9l4 11l11-10l1 12l10-6l4 13l9-9l-3-14M537.5 640.5l-3 20l-8-17l-13 6l-14-1l-13 1l-16-4l-10 13l-6-9l-19 7l15 2l4-9M430.5 641.5l-5 19l-7-8l2-10M601.5 641.5l-4 10l-14-11l1 10l-14-1l-15-6l-10 3l13 9l-3-12M675.5 641.5l-1 11l-10-9M718.5 641.5l12 10l11 11l3-12l6 9l12-4l15 5l-2-17M1425.5 641.5l6 16l10-11l17 1l0 11l-7 3l-10-15l0 20l-10-9l-10-6l-10 3l-13 3l-10 9l0-13l-14 4l-10 5l-3-10l-13 13l2-15M1224.5 642.5l20 8l19-1l10 1l15 10l-5-15M1224.5 642.5l-3 10l-12-14l2 16l-9-5l-10 2l-17 10l-11-4l-16-3l-13-8l-11-2l-11 12l-4-13M1224.5 642.5l11 15l9-7l9 13l10-14l5 12l5-11l5 18l10-8l10-13l1 13l10-12M526.5 643.5l-2 17l-11-11l-8 14l-6-15l-3 11l-10-10l-12 11l-4-15M688.5 643.5l-14 9l-18 2l-10-5l-10-4l-7 7l-21-1l-11 0l-13-1l-9 10l-5-11l-12 6l-11 2l-2-11l-11 14l13-3l12 9l-1-11l17 5l14 0l-5-10M688.5 643.5l10 11l0-10M688.5 643.5l-5 15l-9-6l-7 13l-11-11l-17 7l-3-16M399.5 644.5l3 19l5-10l11-1l0 15l-11-14M821.5 644.5l-2 10l16-8l15 10l5-12M1023.5 644.5l-9 12l-3-12l-9 12l-7-8l-5 13l-10-5l-4 12l-7-12M389.5 645.5l-2 8l-16 5l-12-10M936.5 645.5l-7 13l-10-4l-11 0l13 11l-2-11M835.5 646.5l1 11l-17-3l-8-7M1096.5 646.5l17 10l-14 4l-3-14l-7 11l-11-13l-1 19l-10-8l-16-10l-11 2l-10 4l-16 5l-12 0l-12 5l-14 7l-15 0l-14-2l-18-8l-8 7l-16 7l3-18M1135.5 646.5l-3 14l-8-16l-2 18l-9-6l-3 19l-11-15l-10-3l-12 6l-17-1l-9-17l-3 12l-8-10l-2 17l-8-13l-8 11l-8-6l-6 10l-6-10l-6 14l-6-9l-4 14l-10-7l-7 11l-8-11l-2 10l-12-12l-15 10l-3-18M1458.5 647.5l-7 14l-10 5l17 2l0-10M277.5 648.5l-10 9l-8-6l-2 7l-9-6l-15 4l4 4l11-8l-1 7l10-1l10-1l10-1l4 8l6-9l7 6l14-8l5 20l5-21l8 10l2-11l15 7l15 2l13-2l9 12l7-17l15 10l-11 2l-4-12M135.5 649.5l-1 11l-19-2l0 10l10 3l-10-13M183.5 649.5l-13 11l-4-10M183.5 649.5l3 16l7-16l13 14l3-11l7 10l5-14l5 13l7-5M183.5 649.5l-7 17l-6-6l-16-9l11 16l5-7M193.5 649.5l3 15l10-1l10-1l10-1l11-1l10-1l9 10l11-12l5 14l5-15M486.5 649.5l-2 14l12-4l9 4l19-3l10 0l2 10l11-13l4 20l8-11l16-6l-3 14l-13-8M646.5 649.5l-7 12l-10-9l-15 14l-6-15l-8 11l-3-11l-8 9l11 2l14 4l16 2l-1-16M784.5 650.5l9 4l10 4l16-4l-6 9l-10-5l-17 8l-2-16l-7 10l9 6l7-12M154.5 651.5l1 17l-11-13l-1 10l-9-5l1 10l8-5l12 3l10-1l11-1l10-1l10-1l8 10l2-11l10 7l10-9l9 10l12-12M1192.5 651.5l2 11l8-13l2 13l7-8l10-2l14 5l18 6l15-2l10 7l11 5l10-13l12-2l9 8l15-11l13 10l16-3l9 6l1-11l14 9l13 1l10-13l5 12l5-15M861.5 652.5l12 2l12 2l14 7l6 9l-13 1l-7-17l-14 9l2-11l-13 8l1-10l-11 4l-14 1l-9 9l-8-12M1221.5 652.5l2 16l-12-14l0 16l-7-8l-10 0l-19-1l6 9l13-8l4 17l6-17M308.5 653.5l-6 21l-8-13l4-7M656.5 654.5l1 14l-18-7l-9 7l10 6l-1-13M710.5 654.5l-12 0l-15 4l-16 7l-10 3l-17 6l-17 3l-9-11l-10 9l-4-13l-13 15l-12-17M710.5 654.5l6 10l14-13l-4 18l15-7l9-3l12 10l0-14M710.5 654.5l-6 11l-6-11l-7 12l-8-8l-1 17l-15-10l2 13l-12-10l-3 11l-14-5l-4 13l-13-10l7-9M1148.5 654.5l-16 6l-10 2l1 11l9-13l10 4l6-10l12 17l4-14M1067.5 655.5l-7 7l-12-5l-10 7l-16-2l-14 4l-12 4l-10 5l-17 4l-10-1l-10 3l-2-15M1335.5 655.5l3 11l10-1l17 13l-1-16M885.5 656.5l-4 13l-10-4l-11-3l-10-6l0 11l-14-10l6 18l-15-9l-14-3l-8 8l-2-13l-9 15l-8-7l-11 8l2-14l-15 9l-10 2l-2-12M1322.5 656.5l-2 10l18 0l-4 10l-14-10l-18 6l9-14M1048.5 657.5l-1 14l13-9l0 14l-13-5l-9-7l-12 9l-4-11l-6 14l-8-10l-10 16l-2-12M1089.5 657.5l3 14l7-11M1398.5 657.5l3 10l15-1l15-9l-5 20l15-11l-4 10l-11 1l-10-11l-10 10l-5-9l-5 14l-8-15l-15 2l7 9l8-11M257.5 658.5l-1 11l16 2l9-7l13-3l-8 13l-5-10M371.5 658.5l-4 17l-9-15l-1 11l-14-13l-17 4l-13 11l-11 1l-16 0l-14-3l-16 9l0-11l-21 2l2-11M450.5 658.5l10 0l14 2l10 3l1 10l11-14l-1 16l10-12l10 11l9-14l12 10l15 7l21-3l15 3l2-17M450.5 658.5l-13 10l-2-12l-10 4l-7 7l-16-4l-1 10l-10-8l-11 5l-13 5l-10-4l-10 4l-4-17l-7 15l-10-11l-3 15l-10-4l-6 17l-5-16l-8 15l-8-15l-10 7l-4-10M450.5 658.5l-1 12l11-12l5 15l9-13l1 14l9-11M134.5 660.5l-9 11l10-1l10-1l-2-4M425.5 660.5l12 8l-19-1l-17 6l-13 3l3-11M524.5 660.5l1 20l11-10l5 11l10-4l16 8l5-11l10 17l5-14l17-2l19 2l-7 11l-12-13l-12 12l-5-10M1132.5 660.5l3 12l7-8l18 7l15-10l-6 16l12-7l17 9l13-9l12-2l12-11l2 10l16-4l-2 11l-14-7l-14 1l8 8l6-9l6 15l8-8l16 4l1-17M226.5 661.5l-2 18l-8-9l0-8M1451.5 661.5l7 7l0 10l-17-12M1060.5 662.5l12 15l5-14l15 8l18 4l12-13M505.5 663.5l2 18l8-7l10 6l16 1l12 9l-2-13M813.5 663.5l4 13l10-10l9 20l6-11l8-8l10-5l2 11l9-8l5 19l5-15l11 4l7-10M1077.5 663.5l6 14l9-6l10 9l8-5l13-2l12-1l15 4l-8-12M1253.5 663.5l14 15l11-10l-1 15l12-10l-1-13l11 0l3 12l-13 1l1 16l12-17l11 10l7-16l4 12l10-2l12 4l2-15M1038.5 664.5l-4 16l13-9l-1 13l14-8l12 1l11 0l9 7l0-13M186.5 665.5l-4 12l14-13l3 19l5-9l12-4l-5 14l-7-10M176.5 666.5l6 11l-17-10l-11 17l1-16l-10 1l-9 8l-1-7M691.5 666.5l13-1l12-1l10 5l10 3l5-10l11 9l-16 1l7 11l9-12l7 12l3-14l13 5l-16 9l-16 0l-18 5l1-19l-11 15l1-20l-10 12l-2-11l-8 14l-5-13l-9 9l-13 3l-15 1l-18 8l-20 1l-14 3l2-16M786.5 666.5l-6 17l14-10l11-2l12 5l-10 7l-2-12M1338.5 666.5l8 14l19-2l8-10M1416.5 666.5l2 18l-12-8l-10 5l-16-4l-15 1l9 10l6-11l13 15l3-11l13 10l-3-15M165.5 667.5l2 20l15-10l17 6l12 1l13-5l11-8l11 12l10-14M115.5 668.5l0 5l10-2l11 6l18 7l-9-15M437.5 668.5l12 2l16 3l10 1l10-1l10 2l12 6l9 4l-1-11M437.5 668.5l-14 10l-5-11l-9 14l-8-8l-2 11l-11-8l-8-6l2 17l-15-12l-6 14l-4-18M437.5 668.5l1 12l11-10l8 10l8-7l10 13l10-13l2 17l8-15l4 13l8-7l8 15l1-11l9-5l11 10l5-9l4 15l8-6l14-5l15 6l10-4l10 4l-11 7l1-11M881.5 669.5l7 18l4-14l15 10l-2-11l14 4l2-11l11 11l-13 0l-12 7l-19 4l-12-3l-14-11l-12-6l-3 19l15-13l4 10l10 1l8 14l4-11l8 7l11-11l9 4l3-11l10 11l3-11l17 5l-6 9l-11-14M1181.5 670.5l0 16l-12-9l-9-6l-10 5l-8 9l-7-13l-9 14l-3-13l-9 15l-4-13M1211.5 670.5l4 13l8-15l2 17l6-9l12 6l14 1l-6-9M235.5 671.5l0 12l-11-4l-8 14l19-10l11 0l10-3l20 1l-9 10l-11-11l2 19l-12-16l-11 11l0-11M1160.5 671.5l-5 16l-5-11M736.5 672.5l-11 16l-10-4l-9-8l-10 3l-14-4l8 12l6-8l12 14l-2-17M1302.5 672.5l-1 20l12-10l11-4l10 12l0-14M115.5 673.5l0 5l10-7l2 19l9-13l5 13l13-6l13 3l12 7l3-17l7 10l10-4l6 11l6-10l5 9l-11 1l-16-7l-10 7l-11 3l-1-10l-11 12l-2-15M313.5 673.5l6 19l4-15l13-4l11 2l-3 12l-8-14l-3 14l-10-10M862.5 673.5l-5 16l9-6l-4 16l14-15l-1 19l9-5l12-4l9 6l2-17M1026.5 673.5l-10 3l-18 6l-12-7l-4 10l-13-6l-3 11l-7-12l-1 18l-9-15M1026.5 673.5l8 7l12 4l13 5l1-13M1026.5 673.5l-3 11l-7-8l-5 14l-13-8l-16 3l-16 5l12 6l4-11l11 13l5-16l7 17l6-9l12-6l11-4l1 16l11-12l6 15l7-10l13-12l-2 14l-11-2l11 14l0-12l9 4l4-18M286.5 674.5l-7 18l-3-11M475.5 674.5l0 12l-18-6l-19 0l-15-2l-14 3l-10 3l-17 3l6-11M347.5 675.5l14 14l-17-2l-11 0l-14 5l-12-2l-13-1l-15 3l-12-1l-9 8l-12-1l0-15M367.5 675.5l6 17l9-5l16 12l1-15l17 8l7-14l5 17l10-15l4 11l15-11l9 12l9-6l12 4l12-2l16 8l10-4l0-12M682.5 675.5l-3 18l-10-15l-8 11l-7-10l-10 18l-8-10l-6 9l-14-8l4 13l-18-10l-1 11l-10-4l-9-7l-17 6l2-12M842.5 675.5l5 11l-11 0l-19-10l3 12l-13-5l-13-10l3 16l10-6l5 12l8-7l16-2l-9 9l-7-7M1437.5 676.5l21 2l-15 8l-6-10l-4 13l-7-12l-8 7l15 5l10-3l15 2l0-10M1072.5 677.5l7 18l13-11l10-4l12 8l12-2l16-1l13 2l14-10l-5 18l17-9l17-7l17 4l10 2l18-3l7 11l7-10l10-5l10 5l13 6l11 3l9 5l3-15l7 11l4-15M1267.5 678.5l-2 12l12-7l0 13l13-7l2 17l9-14l8 16l1-11l10-4l14-3l12-10l9 10l10-12M1198.5 679.5l1 11l16-7l-5 10l15-8l2 10l-17-2l-11-3l-18-4l5 11l13-7l4 15l7-12l5 10l12-8l12 2l4-15M457.5 680.5l-5 13l-10-2l-14 4l-12-3l-7-11M1102.5 680.5l2 16l-12-12l1 14l-14-3l-9 8l-18-4l-17-3l-12-12l-2 19l-10-13M1346.5 680.5l-4 17l-8-7l0 18l-14-15l0 16l-10-12M759.5 683.5l9 5l7-14l5 9l-12 5l7 8l5-13l17 6l-9 5l-8-11M759.5 683.5l-12 12l-4-12l-7 11l-11-6l-9 13l-1-17l-7 9l-18-6l-11 6l-18-4l-17 8l-14-1l-10 5l-19 1l-10 6l0-10l-18 5l9-12M759.5 683.5l1 16l8-11M1257.5 683.5l8 7l-15 3l-11 4l-14-12M516.5 685.5l9 7l11-2l9 6l11 4l-3-10l12 7l-9 3l-16 6l-4-16l-7 12l-4-10M1142.5 685.5l-1 14l-15-13l5 18l10-5l14-12l9 8l10 5l7-14M475.5 686.5l4 14l8-10l13 9l-1-11M836.5 686.5l8 14l3-14l10 3l5 10l-18 1l13-11M1126.5 686.5l-6 20l-6-18l-10 8l-11 2l-11 9l-3-12M1443.5 686.5l2 14l13-12l0 11l-13 1l-12-11l-7 8l-8-13l-9 7l-16 1l-19-4l-19 2l-13 7l-8 11l-14 1l-11-1l-17-2l-15-10l-12-6l-4 11l-11-8l-5 13l-6-9l-5 15l-7-17l-6 17l-6-9l-12 2l-12 2l8-17M189.5 687.5l0 20l-10-13l-3 10l-8-7l-12 2l-15-9l-14 0l-12-12l0 11l12 1l-12 9l0-10M344.5 687.5l3 10l-14-10l-2 13l-12-8l-14 8l-11-11l0 11l-15-8l-3 12l-9-13l0 18l-9-10l-13 10l-10-15l-19-1l12 9l7-8l11 4l-1 11l-17-7l-13 9l1-18M382.5 687.5l-2 16l-7-11l-12-3l-14 8l-16 3l-11 5l-1-13M690.5 687.5l4 13l14-7l8 8l14 3l-5-16M916.5 687.5l13 0l14 3l15 6l8-6l3 10l9-4l15 2l12 1l16 4l14-7l4 17l13-14l4 15l14-11l12 4l18 5l4-16l16 10l11-2l11 6l-1-11l13 2l1-14M916.5 687.5l4 12l9-12l11 14l3-11M916.5 687.5l-11 13l15-1l20 2l18-5l11 4l9 8l0-12M307.5 690.5l-2 10l-11 0l-8 6l-7-14M487.5 690.5l3 14l10-5l15-3l14 6l11 4l5-10M1409.5 691.5l17 6l19 3l-18 8l-1-11l-12 13l-5-19l-4 11l-12-10l-11 9l-8-13l-8 12l-11-10l-3 20l-10-13M373.5 692.5l-4 10l-8-13l-3 11l-11-3l-7 9l-9-6l0 10l-11-5l-15-5l1 10l-12-10l3 15l-11-9l-10-2l-9 5l12 5l-3-10M416.5 692.5l-18 7l-18 4l-11-1l-11-2l-5 15l-6-18M416.5 692.5l5 12l7-9l5 10l9-14l4 11l6-9l14-1l13 8l11 4l8 7l2-12l13 8l2-11M416.5 692.5l-9 16l-9-9l-6 9l-12-5l3 11l-14-12l-16 13l-13-9l-9 4l0 11l-14 1l3-17l-14 5l-9 5l-18-1l7-8M466.5 692.5l-6 15l-8-14M1393.5 692.5l3 19l-14-10l-16-1l-14 10l-18-2l9 9l9-7l15 3l-1-13M708.5 693.5l-7 17l-7-10l-15-7l-9 5l-9-9l-2 16l-15-8l-16 11l2-12M205.5 694.5l-16 13l-13-3l-14 6l6-13M205.5 694.5l10 17l-14 2l4-19M736.5 694.5l11 1l13 4l15-3l13-2l8 7l1-12l15 6l15 0l17 5l7 13l11-14l13 4l16 10l5-19l6 16l3-10l13 15l2-16l6 9l14-7l13 5l5-10l8 14l3-10M736.5 694.5l-6 10l9 9l-3-19M788.5 694.5l-6 9l-7-7l1 16l-16-13l-6 12l-7-16l-8 18l15-2l10 6l-4-18M812.5 695.5l-16 6l-14 2l-6 9l-12 5l-8 7l-2-13M812.5 695.5l5 9l10-9l6 19l11-14M812.5 695.5l-7 19l-9-13l-6 16l-8-14M1104.5 696.5l8 18l8-8l8 10l3-12M644.5 697.5l-1 15l16-7l11-7l3 11l6-16l7 17l8-10M1186.5 697.5l-12 3l5 9l7-12l5 10l-12 2l-13 3l-2-17l-10 6l-12 9l12 3l0-12l12 11l8-12M884.5 698.5l7 15l11-3l16 5l8-7l14 6l0-13M1093.5 698.5l7 14l12 2l16 2l14-6l-3 11l15-8l12-1l8 7l5-10l14 9l-2-11l13 9l11-13M134.5 699.5l-7-9l-4 18l-8-9l0 10l8-1l11-9l7-9l2 19l-9-10l-3 18l-8-9l-8 11l0-10M156.5 699.5l-13 10l10 6l3-16l6 11l-9 5l16 9l-7-14l12 5l2-11M258.5 699.5l3 20l6-10l4 14l8-9l8 12l10-11l6 12l3-17l11 12l14-12l11 14l-2-18M1458.5 699.5l0 10l-13-9l-3 14l-15-6l-13 2l-9-8l-9 9l-15 3l1-13l-15 12l14 1l2 11l-16-12l-9 7l-6-10M716.5 701.5l-15 9l-15 0l-13-1l-14-4l-5 10l-11-3l-15-4l-8-7l-6 13l-13-12l0 14l-10-8l-18-5l-8-6l1 14l-10-11l-6 17l-10-11l-8 7l-3-11l-16 5l-15 4l9 5l6-9l4 10l12-15M716.5 701.5l-5 15l-10-6l-12 12l-3-12l-8 18l-5-19l-11 11l-3-15M716.5 701.5l5 20l9-17M228.5 702.5l7 13l10-6l16 10l-14 3l-2-13M369.5 702.5l-1 17l15-5l9-6l15 0l14-4l12 1l13-3l14 5l19-7l1 19l10-15l3 17l5-10M446.5 702.5l0 14l-13-11l-5 12l-7-13l-10 16l-4-12l-9 13l-6-13M1405.5 702.5l-1 16l10-8l8 7l5-9l4 16l11-10l16-5l0 10l-16-5l4 12l12-7l0 10l-12-3l-15-2l-9-7l-8 8l0-15M1021.5 703.5l-8 7l-8-11l-10 14l-2-15l-15 10l-12 2l-13-4l-13 8l7 8l6-16l9 15l4-11l14 14l-2-16l17 5l18-3l12 10l-4-17l18 10l17 1l18 2l-4-13M817.5 704.5l-12 10l17 3l-5-13l16 10l18-1l9 4l2-18l9 17l4-13l6 16l10-6l12 8l-1-11M1203.5 705.5l1 11l17-4l13 0l11-6l16-5l16-5l-2 16l-14-11l1 11l-17-6l2 14l-13-8l-9 12l-4-12l-10 12l-7-8l-11 2l18 6l14 0l10 0l-1-12M1292.5 706.5l-17 6l-13 0l-15 8l-12 4l-1 16l-9-16l-12 16l-2-16l-8 16l-10-22l-7 7l-7-16M1292.5 706.5l2 11l15-9l-3 10l14-9l13 11l1-12M1292.5 706.5l-9 15l-8-9l-8 12l-5-12l-6 13l-9-5l-3 20l-9-16M189.5 707.5l12 6l-15 5l3-11l-15 8l12 3l-17 6l5-9M628.5 708.5l-14 6l-13 2l-16 3l6-11l-15 5l-3-10l-7 8l10 2l9 6l10 6l6-9l6 12l7-14l10 5l4-11l9 12l6-8l1 16l10-13l8 5l16 8l11-6l12 0l0-12M926.5 708.5l3 14l11-8M1320.5 709.5l1 16l-15-7l-12-1l-11 4l-7 7l-1-16M1013.5 710.5l-8 12l-10-9l-2 10l12-1l20-2l14-7l10 10l7-9l9 12l9-10l8-9l4 10l14-5l-1 11l13-9l0 11l16-9l11 5l18 6l9-15l2 16l6-9l12 6l-18 3l-11-1l-3-14M215.5 711.5l20 4l12 7l-21 4l-11-15l-1 12l-13-10l-8 14l-7-9l-10 22l-7-16l-15 9l-1-18l-11 10l1-16l-12 8l-16 2l0 10l16-12l11 8l-10 7l-1-15M566.5 711.5l-16 6l-18-4l-15 4l-10-1l-14 5l-13-2l-20-12l-14 9l-18 1l-17 3l-13 1l-15-7l-2 13l-13-8l-15-4l-11 9l-11-3l2 11l-16-10l-14 5l-16-1l-16-3l-10-4l-6 11l-8-8l-10 18l-11-14l9-11M566.5 711.5l2 13l8-11l4 17l5-11M566.5 711.5l-10 15l-6-9l-7 8l-11-12l-2 15l-13-11l-6 14l-4-15l-13 16l-1-11l-8 8l-5-10l-14 2l-6-14l-5 14l-9-5l-6 9l-12-8l0 12l-17-9l-1 14l-12-13l-17 6l-20 1l-8-13l-2 17l-9-8l-9 8l-15 8l-1-18l-9 18l-5-13l-5 13l-11-14l-10 14l-6-17l-16 7l-8 10l0-18M201.5 713.5l5 16l8-6l12 3l-10 14l-2-17M739.5 713.5l-18 8l-10-5l-10 6l20-1l15 4l3-12l17 11l-20 1l-9 7l-6-11l-6 19l-14-18l-7 18l-5-18l-5 18l-6-12l-14 12l-2-20l-6 12l-2-17M891.5 713.5l3 11l-13-5l-10-3l-11 1l8 10l3-11M995.5 713.5l-15 11l-18-3l-15 1l-18 0l-11-7l-15 6l-9 3l-18 10l5-15l-13 8l-11 6l3-16l-15 12l6-16l-9 6l-9-5l-11 3l8 10l3-13M1039.5 713.5l-2 13l-12-6l-11 11l-9-9l-5 10l-7-9l-13 1l-11 16l-7-19l-3 12l-12-11l-8 18l-10-18l-15 3l4-10M1367.5 713.5l1 20l-10-13l-15-3l-10 3l-12 5l9 6l3-11l7 9l3-12M805.5 714.5l-15 3l-14-5l2 13l-14-8l4 11l-12-4l-11 16l-9-15l-1 15l-8-8l-12 8l-10 0l-4-18M805.5 714.5l-12 13l-3-10l-12 8l15 2l13 1l-1-14M1381.5 714.5l14 12l1-15l8 7l10 7l17-1l-4 16l-13-15l-19 1l9-8M1128.5 716.5l0 12l11-7l5 10l13-4l-5 13l-8-9l-16-3l-16-3l-13-2l-13-6l-12-1l14 12l-2-11M1294.5 717.5l4 13l8-12l3 15l12-8l-6 15l-6-7l-11-3l-15-9l2 19l-9-12l-9-4l-11 1l-12 15l-10 0l-11 0l2-16M186.5 718.5l0 22l7-13l13 2l-10 11l-3-13M1193.5 718.5l0 22l-7-15l-3 15l-15-12l-6 12l-5-13M368.5 719.5l-7 9l-10 4l-13 8l4-16M480.5 719.5l-10 14l-4-12l-11 0l-15 4l-12 4l-18 5l-11 6l-1-19l-9 19l-8-13l-12 13l-8-12l-2 12l-8-8l-2 8l-11 0l-5-8l-5 8l10 0M624.5 719.5l13 1l7 8l12 4l-2 8l-10-12l-18 4l-2-13l-17 9l-12-3l-15 5l-12-6l-12 2l-13-1l-13 3l-19 3l-17 1l-9-3l-15 4l-15-12l-5 19l-10-15l0 15l-12-11l-8 11l-10-6l0 6l-11 0l-10 0l-10 0l2-13M637.5 720.5l-11 12l-19-4l-4 12l-8-15l-2 15l-13-10l-8 10l-4-16l-6 16l-6-14l-4 14l-9-15l-1 15l-12-12l-9 12l-10-9l-10 9l-7-8l-3 8l-6-11l-4 11l-11-7l1 7l10 0l10 0l10 0l10 0l0-9M455.5 721.5l5 19l10-7M903.5 721.5l11 4l12 8l3-11M903.5 721.5l-5 19l-4-16l-6 16l-12-6l-8-7l-1 13l-10-7l-12-4l-3-10l-12 8l15 2l-8 11l-7-13l-13 13l5-23l-16 11l-10 12l-3-13l-7 13l-8-15l-10 3l-13 12l1-16M903.5 721.5l5 19l6-15l4 15l8-7l2 7l-10 0l-10 0l-10 0l-10 0l-10 0l-2-6l-9 6l-10 0l0-7l-10 7l-2-11M947.5 722.5l2 18l10-7l0 7l10 0l-10-7M271.5 723.5l-4 17l-12-10l2 10l-10 0l-10 0l-11 0l0-14M993.5 723.5l-4 17l-9-16l-1 16l-10 0M169.5 724.5l-5 10l-10-1l-12-8l3 15l-13-8l-17-3l0 11l10 0l-10-11M1267.5 724.5l-3 16l-8-15l-2 15l-10 0M1431.5 724.5l6 16l9-14l1 14l11-11l0 11l-11 0l-10 0l-10 0l-10 0l-3-15l-7 15l-12-14l-12-1l-15 8l-12 7l2-20l-18 9l-10 2l-5 9l-4-15M778.5 725.5l-2 15l-8-12l-2 12l-11 0l-10 0l-10 0l-10 0l2-8M1112.5 725.5l10 15l6-12l4 12l12-9l-2 9l-10 0l-10 0l-10 0l0-15l-11 15l-2-17l-11 5l-23-2l-16-3l-12 3l-7 14l-5-20l-5 20l-6-9l-14 1l-11 8l-10 0M287.5 726.5l0 14l11 0l10 0l10 0l10 0M1037.5 726.5l3 14l9-17l2 17l14-14l-4 14l-10 0l-11 0l-10 0l-10 0l-10 0l4-9M830.5 727.5l-3 13l10 0l10 0l10 0M530.5 728.5l2 12l-11 0l-10 0M607.5 728.5l6 12l13-8l-3 8l10 0l11-12l0 12l-11 0l-7-8M678.5 728.5l-4 12l10 0l10 0l11 0M1088.5 728.5l13 12l-10 0l-3-12l-7 12l-16-14l6 14l-10 0M1168.5 728.5l5 12l-11 0l-10 0l-10 0M428.5 729.5l2 11l-10 0l-10 0M1340.5 729.5l-5 11l-5-9M1340.5 729.5l6 11l-11 0l-10 0l-10 0l-10 0l-7-10l-13 10l-11 0l2-12l-12 12l-10 0M1340.5 729.5l16 11l-10 0M580.5 730.5l3 10l-11 0l-10 0l-10 0l-10 0l-10 0M1298.5 730.5l-3 10l-10 0M656.5 732.5l8 8l-10 0l-10 0M926.5 733.5l13 7l-11 0M1309.5 733.5l-4 7l-10 0M164.5 734.5l-9 6l-1-7l-9 7l10 0l10 0l-1-6l12 6l-11 0M135.5 740.5l-3-8l-7 8l10 0l10 0M176.5 740.5l10 0l10 0l10 0l0-11l10 11l-10 0M216.5 740.5l10 0M257.5 740.5l10 0l10 0l10 0M349.5 740.5l10 0l10 0l10 0M430.5 740.5l10 0l10 0l10 0l11 0M583.5 740.5l10 0l10 0l10 0l10 0M664.5 740.5l10 0M715.5 740.5l10 0M766.5 740.5l10 0l10 0l10 0l10 0l0-12l11 12l-11 0M817.5 740.5l10 0M867.5 740.5l11 0M939.5 740.5l10 0l10 0M989.5 740.5l11 0l0-8l10 8l-10 0M1071.5 740.5l10 0l10 0M1101.5 740.5l11 0M1173.5 740.5l10 0l10 0l10 0l10 0l10 0M1264.5 740.5l10 0M1356.5 740.5l10 0l2-7l8 7l7-15l3 15l9-14l1 14l-10 0l-10 0l-10 0M1396.5 740.5l11 0l10 0" fill="none" stroke="#a7a8ab" stroke-width="1" shape-rendering="crispEdges"/><defs><marker id="mk" markerUnits="userSpaceOnUse" markerWidth="6" markerHeight="6" refX="2" refY="2" overflow="visible"><path d="M0 1h4v2h-4zM1 0h2v4h-2z" fill="#a7a8ab" shape-rendering="crispEdges"/><rect x="1" y="1" width="2" height="2" fill="#fff" shape-rendering="crispEdges"/></marker></defs><path d="M119 275l1-3l5 3l5 0l0-3l10 0l10 0l10 0l11 0l10 0l10 3l0-3l5 3l5 0l0-3l10 0l10 0l10 0l10 0l10 0l10 0l11 0l10 0l10 0l10 0l9 3l1-3l4 3l5 0l1-3l10 0l10 0l2 3l5 0l3-3l2 3l8-3l11 0l10 0l7 3l3-3l2 3l8-3l10 0l10 0l11 1l10 1l11 0l10 1l-350 2l0 10l4-7l3 5l4-2l6-2l2 5l3-8l5 0l6 4l5 0l5-1l4-4l3 10l2-10l5 0l1 10l3-6l3 4l0-9l5 0l3 10l3-7l4 6l8-3l5-3l5 8l0-8l5 1l5 0l3 5l4-8l5 0l5 7l1-5l5 0l5 0l3 8l6-7l5 0l3 5l2-8l5 0l5 10l0-10l7 5l9-4l5 0l5 0l4 3l5 6l6-4l6-3l3 5l1-8l5 0l2 9l5-6l4 5l9-2l3-3l5-4l1 9l4-9l4 10l1-10l3 6l2 5l2-9l5 0l2 2l4 5l5-4l3-2l5 0l5 5l4-7l5 0l6 1l5 6l4-5l6 1l5 0l6 4l5-3l5 1l5-1l6 0l5 1l0-6l6 9l4-8l2 8l6-2l3-6l2 7l8-1l0-5l6 6l4-5l1 5l5 1l5 0l0-6l5 8l5-7l1 5l6 1l4-5l1 5l6 0l3-4l3 4l8-4l10 1l10 1l9 1l9 1l9 1l-502 10l5-2l2-5l4 3l7 5l2-5l5-2l5-3l1 7l9-4l3 7l5-1l5-7l3 7l7 2l6-8l9 7l4-4l1 5l1-10l6 2l3 7l2-5l5 1l5-1l8-3l2 7l5-9l6 3l1 8l3-4l9-3l9 0l5-2l1 5l4-7l3 11l4-6l2 5l6-1l5-3l1-6l1 11l7-8l5 5l1-6l11 8l0-6l6 3l8 1l0-6l9 6l8-1l0-5l9 4l7 1l0-5l7 6l5 0l5-3l4 6l0-10l8 1l3 5l7-3l10-2l2 7l4-8l9 2l2 7l8-4l5-4l1 8l9-6l1 5l4-3l5-6l1 5l9 1l2-4l4 7l9-6l6 8l7-2l1-7l7 6l6 0l1-6l4 6l4 2l2-6l11 6l0-5l6 3l7 0l0-6l7 8l5-5l3-5l5 1l2 9l3-6l5 0l1 7l4-8l4 0l4 8l3-7l4 0l4 1l10 2l4 1l5 0l1-8l8 8l0-8l4 8l4 0l1-7l3 10l5-7l1-2l3 3l5 0l1-2l3 7l5-2l1-4l4 5l4 0l1-4l9 0l6 4l3-3l2 4l6 0l1-3l4 3l4 1l1-3l9 1l9 1l8 0l9 1l-635 9l5-8l0 6l0 5l4-7l9 0l8 2l4 5l2-7l4-3l7 5l8 4l7-4l13-6l1 6l0 5l7-3l4-2l0 5l5-9l5 3l6 4l3-4l1-5l5 4l6 3l1-5l4 9l3-11l3 11l1-7l4 6l7-4l3-6l5 3l8 3l3-5l5 8l6 0l2-6l4 5l5 0l6-3l5 0l7-1l7 0l6 2l7 1l3-6l6 7l8-1l3-6l6 5l8-5l1 5l6 1l6-5l0 5l5 2l7-6l1 7l3-10l4 10l6-9l0 8l7-3l6-3l0 8l6-9l7 8l2-5l8 1l4 5l2-5l5-4l5 8l0-5l5 0l9 1l0-5l9 6l8 3l0-5l3-4l13 5l7 4l5-7l1 5l6-1l4-4l1 6l5-9l4 9l2-5l5 4l7 3l2-7l12 2l0-6l5 1l5 3l3 4l5-4l5-1l5 7l1-5l6 1l6 3l5-7l4 9l15-7l10 7l5-4l8-4l7 8l2-7l10 2l6 3l3-5l4-4l5 0l2 4l5 5l5-1l2-7l5 7l7 2l1-7l5-3l3 9l2-8l4 0l3 6l7-3l4 0l4 0l1 7l6-5l4-6l1 7l6 1l4-7l2 7l6-2l0-4l3 4l4 1l0-4l7 6l2-4l2 5l7-3l9 2l8 2l-705 7l5-2l7 1l5-5l2 7l7 3l3-4l6-3l7 4l2-6l11 9l3-9l1 5l4 4l4-9l6 3l0 5l5-2l6 2l5-3l4-5l2 10l6 0l2-10l5 4l2 6l2-10l8 8l3-4l2 5l9-2l1-7l5 3l9 3l1-7l4 10l6-3l5-5l2 5l4 2l5-1l1-6l4 6l6-6l0 5l5 3l5 0l3-10l1 6l7-1l5 1l1 5l1-10l6 6l5 4l1-5l4-5l5 4l7 4l3-4l3-5l6 5l6 2l2-5l6 9l7 0l0-8l8 8l5-8l2 8l7-5l6-3l7 2l8 2l6 0l6-1l7-2l5 0l6 6l3-6l3-4l6 6l5 2l2-5l3 8l6-2l0-8l4 4l7-5l1 9l5 0l7-1l1-6l5 4l6 1l4-6l5 6l5 3l5-6l9-4l5 1l4 6l7-6l8 1l0 6l6-6l4 9l2-7l4 3l5 3l2-7l9 7l6-2l6-7l9 0l1 7l11-6l5 4l5-3l9 0l3 6l8-6l9-3l5 6l1-6l11 5l10 3l5-5l4 5l5 3l4-5l5-6l4 3l3 6l4-6l7 2l3 5l4-3l3-5l3 6l9-7l1 7l6-2l6-6l1 8l6 0l5-3l0 6l2-10l5 1l5 5l1-6l4 10l1-9l4 1l6 6l2-8l2 9l4-4l6-2l2 4l5 1l6 1l0-4l11 2l8 1l9 1l9 1l-776 5l7-4l0 5l1 6l8-4l5-4l2 7l8-8l4 6l3-5l9-2l3 5l6 4l8-5l5-4l5 3l2 5l8-7l0 6l6 1l6 1l1-5l12 5l4-6l5 4l9-1l3-5l5 3l7 3l3-5l11 0l6 6l4-7l1 9l7-1l2-7l3 6l4 2l3-6l10 2l9-4l1 5l4-4l5 0l6 6l3-5l7-1l7 4l1-5l11-1l1 7l4-4l6-2l2 7l14-3l16-4l6 4l5 0l4-6l3 8l10-2l0-5l6 5l5 3l0-5l2-5l5 3l5 4l4-4l10 0l5 3l1-5l11 7l0-6l6 5l5 0l1-6l8 5l4-5l2 4l2 6l5-6l3-4l3 6l6 2l3-4l3 6l8-10l3 7l5-6l10 9l1-9l6 2l4 6l2-9l5 0l2 10l2-7l4 4l7-2l7-4l3 4l9 4l3-9l1 5l7-2l6-2l4 8l4-8l10 1l3 5l5-8l9 7l2-7l6 1l3 6l3-7l6 0l5 7l3-6l6 0l5 4l5 3l7-3l8-1l4 4l3-6l8-1l1 10l3-5l7 2l7-2l9-5l1 6l8-1l6 1l1-6l3 10l7-5l5-3l5 5l1-8l12 6l2-6l10 2l6 7l3-9l1 5l5 2l9 4l0-5l6-3l4 0l5 1l2 3l4 4l2-10l4 0l2 8l3-7l3 5l5 1l3-8l7 7l2-5l3 6l6-1l0-4l5 4l4 1l0-4l9 5l0-3l5 4l3-3l1 3l8-2l9 2l10 1l44 0l9 0l8-1l9 0l10-1l9 1l8 0l9 0l9 1l9 0l9 0l-990 3l4 8l4-5l4 2l7 2l5-1l6-4l4-3l2 9l5-8l6 4l1-5l12 8l2-9l6 4l2 5l2-9l6 10l4-6l4 4l5 2l3-5l7-5l5 10l1-6l7 4l9-8l0 7l8-2l7-3l0 6l9-8l7 5l3-5l9 10l4-6l3 5l6 0l4-4l2 6l4-10l3 10l3-10l1 5l3 4l3-10l6 1l2 6l4-4l7 7l2-7l5 2l4 4l2-7l4 9l5-11l4 8l1-5l7 2l5 3l6-5l4 7l2-10l5 11l3-11l0 6l6-5l5-1l0 5l1 6l6-2l4-5l1 5l8 0l6-7l3 5l9-1l5-2l5 4l3-8l3 10l7-10l0 11l2-5l4-3l7-3l2 8l4-8l6 4l3 5l5-1l4-8l5 7l3 4l3-8l7 1l3 6l3-4l3-4l4 6l8-3l2 5l2-10l3 11l5-10l2 7l6-4l6 2l7 2l6-6l3 7l13-1l0-7l7 5l9 3l0-7l12 8l1-9l3 5l6-1l9 1l7 1l4-5l3 9l5-11l1 11l4-4l1-7l1 11l5-10l2 10l4-4l1-5l6-1l7 8l0-6l7 1l5 3l1-7l10 6l2-5l4 2l6 5l2-6l7-2l4 5l11 5l2-8l5 6l9-2l1-6l7 6l4 5l1-7l11 0l1 5l6-5l5-2l1 6l6-8l7 6l0-6l8 0l5 9l5-6l5 3l7 0l9-1l3 4l7-7l9 7l2-5l6 3l7 0l6-5l5 5l7 1l5-8l0 6l7-1l8-5l1 6l7 2l5 3l1-7l4-3l4 1l3 5l3-5l4 0l6 6l2-4l6 0l5 1l0-4l5 9l3-9l2 5l3 0l2-5l2 5l6 5l1-11l2 6l4 0l5 0l6 4l3-6l4-1l5 0l4 6l1-5l5 0l4 3l0-7l5 0l4 0l1 7l6-3l4 0l7 3l5 0l4 0l9-3l5 0l4 0l10 6l0-10l2 5l5 0l2-4l2 5l5 5l2-9l1 4l4 1l4 0l0-5l6 7l3-6l1 7l8-6l10 0l1 4l5 0l4 0l0-3l9 0l11 0l9 4l1-4l5 4l5 0l0-4l9 6l1-6l4 6l6-2l0-4l5 4l5 0l1-4l10 3l0-3l5 3l5 0l0-3l10 3l0-3l5 3l5 0l0-3l4 6l4-3l2-3l4 3l4 3l3-6l2 6l5 0l3-6l10 0l9 6l1-6l4 6l5 0l1-6l8 4l2-4l3 4l5-1l3-3l3 3l6 1l1-4l4 4l5 1l1-5l4 5l6 0l0-5l10 0l8 3l2-3l3 3l8-3l10 0l1 4l6 0l3-4l2 4l3 1l-1343 2l0 10l4-7l4 6l3-3l3-4l4 6l8-6l0 7l5-1l6-2l4-3l6-1l1 8l6-9l6 4l3 4l7-3l4-4l5 4l6 5l3-7l8-4l3 9l3-6l7 3l8 1l5-7l4 6l2 5l5-7l7-3l2 8l4-8l5-1l2 8l8-8l3 5l1 6l5-2l5-6l1 6l6 2l5-1l1-7l6 7l8-6l4-4l6 1l1 7l4-5l5 2l6 5l3-7l9 7l3-4l1-5l8 2l5 3l2-5l13 3l10-4l2 8l4-5l6 4l6 4l4-3l2-6l5 5l7 2l4-3l0-5l10 5l5 2l0-6l8 8l5-4l2 5l7-9l4 4l2-5l6-1l1 10l3-5l1-5l1 10l6 1l2-7l3 6l7 1l4-5l7-4l6 3l1 6l4-3l6-1l3-5l7 6l8 1l2-7l5 5l9-1l1-5l6 6l8 4l1-5l6-5l7 5l5 5l6-6l9-5l3 5l6 4l5-7l1 6l7 3l4-3l1-6l6 7l6 0l2-5l9 5l3-5l3 6l8-10l3 9l4-4l6 1l8-2l6-3l5 2l2 8l6-7l7-2l2 8l5-9l6-1l4 11l1-5l8 3l10 0l0-7l9 5l6 2l6-2l6-2l7 0l4 4l1-7l5-2l4 8l1-6l9 0l4 3l9 5l6-2l1-8l7 8l7 3l1-9l10-2l6 3l4 6l5 0l7-8l0 8l9-3l4-4l3 5l7 0l3-7l2 5l8 1l3-5l5 8l6 2l2-5l6-4l6-1l1 8l5-7l6-1l1 7l7-6l4 7l1-6l10 1l4 7l5-5l9 1l5 2l5-4l10-2l3 6l4-6l6 1l3 5l2-6l5-3l6 3l4 4l6 0l5-6l2 8l8-1l7-8l2 5l1 6l7-8l8-1l1 6l11-5l7 6l2-5l8 1l5 2l0-6l8 9l4-3l3-7l5 1l5 9l1-6l5 1l5 4l1-6l4-3l4 11l1-11l2 7l4-7l5 0l3 10l2-6l6 3l6 1l6-5l4 7l10-7l1 6l5-2l10-1l6-4l5 3l6 4l2-6l4-2l6 3l2 5l4-5l8 1l4 3l4 3l2-9l14 5l8-6l5 0l4 6l5 3l11-7l0 5l8-2l6-6l0 8l5-2l6 0l1-6l5 7l6 0l1-5l4 6l8 2l1-5l5-5l5 0l3 3l2 7l6-3l6-3l2 7l0-11l5 0l7 4l7 5l3-7l0 5l3 2l-1343 12l4-2l4-5l4 4l3 4l4-6l4-3l3 4l7 5l3-10l3 8l7 0l6-1l3 4l2-10l9 6l2-5l5 2l7 5l1-6l10-2l5 3l6 4l6-3l5-5l2 6l7 1l6-3l1 7l6-9l6 0l3 6l6-5l5-1l7 4l5 5l5-2l5-4l1 6l10-5l4 5l7-4l2-7l5 2l5 1l5 4l5 4l3-9l9-2l3 6l4 5l6-11l2 6l4-4l7-2l1 8l6-8l6 8l1-8l5 0l5 11l1-8l5 4l6-4l10 1l2 6l5 1l4-8l11 6l0-7l5 4l7 2l0-7l9 7l8-3l2 6l4-10l6 0l2 4l3 6l5-3l2-5l3 6l8 2l1-5l11-4l5 3l10 4l5-7l0 6l5-1l5 2l4-7l4 8l10-5l3-4l5 3l6 6l5-4l10-1l5 5l2-7l11-1l2 7l5-6l5-3l1 7l6 2l6-2l11-1l3 4l5-3l7-6l3 6l5 3l8-3l3-5l7 4l3 5l5-5l4-6l4 4l1 6l5-6l7 6l1-6l7 2l3 4l1-6l7-3l3 6l3-7l8 4l5 7l5-5l4-3l5 3l6 5l6-7l12-1l3 7l5-2l7-3l5-4l5 3l6 2l4-3l4 7l11-4l12 1l8-6l4 7l3-8l9 6l12 1l3-5l5 2l6 6l3-5l2-5l5 6l4 5l2-6l4-4l4 5l7 5l6-6l8-3l7 0l3 5l5-6l2 10l4-10l2 8l2-5l6 1l8-1l9 2l7 3l3-6l3 8l7-3l1-6l5 2l7 0l8 3l5-4l6 0l4 3l0-6l8 10l2-7l3 7l10-7l4 8l5-2l8-3l8-2l8-1l1 7l6-8l6 8l4-7l5 3l2 5l3-7l7-3l1 6l5 3l6-9l4 9l4-4l6 1l5-3l6-2l3 4l2 5l6-11l3 10l3-8l6 6l5-2l4-4l3 5l5 1l4-3l2 5l3-10l6 3l1 6l6-3l5-1l1 6l2-11l6 4l3 6l3-5l8 5l0-7l5 0l6 0l4 4l6-6l6 10l3-5l7-6l5 7l1-7l9 2l3 8l4-5l3-5l3 9l8-3l1-5l9 3l3 6l5-5l2-4l3 6l5 1l3-6l3 6l7 0l2-6l3 6l6-1l8-3l2 6l5-9l8 4l5 5l4-3l6-3l6 1l3-5l4 10l6-7l0 5l3-1l-1343 12l4-7l1 8l4-1l5-2l7-2l7 5l1-7l6 10l8-6l9 6l3-4l6-6l6 2l3 6l6-6l8 0l5 4l4-6l2 9l9-8l2 8l6-3l5-7l2 8l8 2l6-7l2 8l3-11l5 11l4-11l0 6l5-4l6-1l0 6l10-2l1 5l5-2l8-4l1 5l3-9l10 9l1-8l6 4l5 3l0-7l10 7l8-4l4 5l3-9l8 11l4-5l1-5l8 0l6 0l3 10l6-5l6-1l5 4l11-1l3-8l2 5l3 5l3-9l7 8l10-8l4 5l9 2l6 0l3-7l7 7l5 0l5-4l3 6l5-9l4 9l3-6l5 3l8 3l2-6l9-3l5 6l1-5l5-2l5 6l8 4l2-7l3 6l5 2l2-8l12 6l2-8l8 4l6 5l1-8l11 1l1 5l5-4l7-1l3 5l7-7l7 1l5 7l3-4l1-5l5 7l6 3l1-10l4 8l6-5l8 0l5 4l4-5l12 1l7 6l4-5l8-1l2 7l4-5l6-1l3 6l4-7l6 2l4 4l4-5l5-2l5-1l4 4l6 6l2-11l11 10l0-8l4 4l5-3l1 8l10-10l3 7l6-8l8 5l3 5l7-2l2-8l4 5l6 2l2-7l6 8l5 3l0-6l4-3l7-2l3 8l6-7l5 2l5 6l2-5l7-2l6-1l3 8l7-8l5 2l4 5l3-6l8 9l0-8l6 4l7-3l6 0l5-1l2 6l11-2l0-5l6-1l7 4l0-5l4 11l7-1l2-7l4 5l7-1l3-7l5 6l6 0l4-5l4 8l11-2l1-5l7 3l8 3l1-6l11 9l2-9l3 5l8 3l1-9l10 9l4-3l2-7l10 7l8 4l5-9l2 6l8-4l7-1l6 2l9 2l5-1l6-2l4 4l0-7l11 9l4-6l7 5l7 2l2-11l2 5l5-3l11 3l3 5l9-2l2-6l4 4l6 0l2-5l4 7l5 1l2-5l3-4l7 3l5 6l4-3l6-1l6-1l6 1l6-1l2 5l5-7l9-2l2 6l11 5l2-11l2 5l1 5l3-10l5 10l1-10l3 5l7 3l9 2l5-2l2-8l5 5l3 6l3-9l8 1l2 6l4-5l3-4l3 6l9 3l0-7l7 7l5 0l1-7l5 6l6 2l1-7l6-2l3 9l2-4l1-6l2 10l7-7l3 5l4-3l3-4l3 6l7 3l3-9l0 5l6-1l-1343 12l3 6l2-10l0 5l3 1l7-7l0 11l1-5l5-2l6-2l1 5l10 1l2-6l6 0l3 6l9-7l2 6l3-3l5-1l2 7l7-7l7 3l2-6l2 9l6 2l3-6l4-5l6 10l1-6l4 4l6 1l3-5l4 7l9-1l3-5l5 4l7-9l2 9l4-5l5 0l3 7l2-9l6 3l4 4l7-4l7-4l7 4l3 4l8-2l6-6l4 6l7 0l4-4l1 6l6-9l4 11l0-6l7 5l4-10l1 7l4-5l10 4l4 5l5-1l3-4l8-6l3 4l6 6l3-5l5-3l4 8l1-8l6 2l5 3l6-7l3 9l9-2l3-5l3 4l5 2l4-6l2 6l6 3l4-3l2-7l7 6l7 1l3-5l5 8l6-11l1 10l6-4l3-6l1 10l4-9l5-1l2 11l2-5l6 4l5 1l5-5l7-6l7 5l1 5l6-4l8-1l1 5l7-8l5 2l2 5l4-5l6-2l2 6l7-8l3 9l3-7l9 4l6 3l5 2l0-8l11 8l0-10l2 5l6 5l0-10l7 8l2-9l5 3l7 6l1-9l11 1l7 6l7 1l8-1l7-1l4 5l1-9l8-1l4 4l1 6l2-11l13 8l8-5l5 4l5 2l7-4l4-3l9 0l3 5l5 4l1-11l5 11l4-9l2 6l8-3l5-4l3 5l7 4l5-3l6-2l8 0l9-1l8 0l1 7l5-7l6-2l1 6l9-6l8 7l2-5l6-1l6 4l5 3l6-10l2 6l7-3l5 0l4 4l4-6l2 10l3-11l5 5l2-5l11 4l9 7l5-8l2 7l9-2l2-6l4 6l6 3l2-5l5-5l7 3l3 7l6-6l8-2l3 5l16-1l9-6l2 6l9 3l1-9l2 5l4-4l5-2l3 7l10 3l3-9l5 4l9 0l3-5l6 8l8-2l1-5l5 4l5 5l1-6l4-3l7 5l1 5l6-3l6-3l2 5l9-9l4 5l3-6l10 8l2-5l7 3l5 5l2-5l2-5l4 5l8 1l7-4l6 8l1-9l9 4l9 1l2-7l5 6l6 1l5-5l3 8l4-10l7 9l2-9l1 5l6 3l9 0l2-5l5 4l11-2l13-1l2 7l5-3l5-3l3 6l3-9l7 1l4 3l5 1l5-6l5 9l5 0l5-1l0-6l8 5l7-5l3 5l5 0l7 1l4-8l6 6l8-2l10 0l0 5l5-7l-1343 12l3 1l2 5l3-4l7 4l2-6l5 1l3 6l2-6l5-3l4 9l1-6l5 1l4 6l1-6l6-3l3 9l2-6l5 0l5 0l5-1l5 3l2-7l3 8l5 0l2-3l4 5l5-10l0 10l5-5l3 3l5 0l4-5l1 6l5 0l5 1l3-7l6 5l5 0l5 1l2-8l7 8l5 0l6-6l3 8l2-10l3 10l5 0l2-10l4 5l6-5l11 8l1-5l7 3l5 1l3-7l4 6l6-2l4-4l7 6l12 0l1-6l4 2l5 5l1-6l9 4l8-6l6 6l2-5l10 1l6 8l4-4l5 0l4-5l1 8l7-2l6-5l4 3l1 6l6-6l3-4l1 6l9 4l1-5l11 0l0 5l5-3l6-5l1 6l5 2l8-1l1-7l6 6l5-2l5-3l6 4l5 1l7 1l1-5l10-4l1 9l5-5l7 2l8-2l8-1l4 5l5-7l6 0l4 5l2-5l5-1l5 10l1-8l7 4l6 3l0-8l5 8l8-2l5-5l6 5l11-6l2 9l7-3l3-4l8-3l2 8l4-7l5-2l3 7l4 4l10-7l3 7l7-2l4-5l2 7l3-11l4 10l4-3l4 4l3-11l8 10l1-7l7 3l6 2l1-7l10 5l1-6l6 2l5 5l0-6l11 5l13-5l3 6l8-3l5-2l2 6l10-4l6 6l5-3l4-7l5 6l6 1l5-1l5 4l3-8l7-2l7 10l2-6l10 2l6 3l2-7l8 8l5-9l0 6l3 4l5-8l5-2l1 5l3 5l8-5l1-5l7 0l4 8l2-7l7-1l2 8l12 2l2-7l6 4l6 0l4-3l9-2l7 7l0-6l9 2l6 3l2-6l9-3l3 8l2-7l7 3l2 7l4-5l5-5l3 8l9-1l0-8l4 3l6 0l5 1l4 4l8-2l5-5l4 5l7 4l5-3l2-7l6 6l3 4l2-7l6-1l5 7l3-5l7 2l6 5l3-5l6-3l5 0l1 8l6-9l7 2l5 2l5 2l7 0l6-1l6-7l0 5l8 1l7-1l2 6l7-6l6-5l3 6l7 3l5-7l0 8l10 0l0-5l5-5l5 4l6 7l5-4l4-7l5 7l6-1l4-1l2 6l1-11l8 2l2 6l4-7l7 4l2 6l8 0l4-8l5 8l1-11l6 8l3-5l3 5l4 3l4-7l1 7l6 0l3-4l3-5l5 3l8 4l0-8l5 8l7-7l0 5l7 1l6 0l3-7l6 5l6 4l2-7l5-2l-1343 12l5 9l0-8l5 3l5 0l6 1l5 0l4 5l4-8l5 0l3 8l1-5l1-5l3 9l2-8l4 9l1-5l1-3l5 0l5 1l1 5l0-9l6 6l4-6l1 6l5 1l4-6l1 6l9 3l1-9l4 9l6 0l0-8l8 8l2-5l0-3l5 3l5 1l0-3l1 6l5-3l4-3l1 3l1 4l5-3l4-3l1 3l5 3l4-6l1 7l8-2l1-4l4 4l6 1l0-5l5 5l5 0l0-4l1-6l5 0l4 10l0-4l1-6l4 11l3-8l2 8l1-4l2-3l3-3l3 4l1 5l1-3l3-2l1 5l3-10l2 11l0-9l1 6l4-5l5 0l1 5l6-8l4 9l1-6l5 0l4 6l1-6l5-1l5 0l0 8l6-8l4 8l1-8l8 0l1 9l4-8l5 0l1 8l9-4l5 0l5 0l1-7l7 6l5 0l7 0l5 0l7-3l1 7l6 1l2-9l3 9l2-7l4 4l5 0l3-5l2 7l5 0l6-6l2 6l5 0l5-2l0-5l6 4l5 0l0-5l4 8l7-6l0 7l5 0l2-11l3 9l3-5l4 3l5 3l6-10l2 6l8-1l5-1l1 6l8-8l2 5l3-7l3 10l3-10l1 5l2 6l2-10l6 9l1-5l4 4l6 0l1-5l6 7l5-3l2-6l6 4l4 3l5-5l4-3l8 6l6 4l3-10l2 6l4-5l6 1l4 3l3-5l1 10l9-5l1-5l11 5l2 5l7-2l5-6l2 5l7 0l4-3l7-1l8 4l8-2l6-5l6 2l4 5l5-7l6-1l6 7l2-6l5-1l10 3l7 4l8-1l5-2l6 7l0-10l10 3l3 6l5-4l3-5l3 6l5 3l3-5l8-3l5 7l2-7l10 3l3 5l8-5l7-4l3 5l4 5l9-7l6-4l8 8l3-8l4 4l6 1l10 2l3-4l6-2l6 4l6 6l8-8l1 6l5 0l4-9l3 5l1 6l3-10l7 10l1-8l3 5l6 1l4-4l8-3l5 2l3 7l5-6l6 2l10-1l5-5l4 4l5 3l4-7l2 8l6 0l5-8l2 7l7-2l5-3l1 7l10-6l8 7l3-7l5-3l5 10l3-8l5 5l5-3l9 0l5 3l7-3l5 0l5 1l0-6l5 9l6-6l0 8l7-1l4-6l2 6l6-2l4-6l3 4l3 5l3-6l9 6l0-6l6 1l7 3l1-7l5 9l6-1l6-5l3 5l6-10l6 7l0-5l10 4l4 4l5-3l2-5l3 4l7 4l2-5l5-2l6-1l1 6l4-7l10 6l15-3l0 6l8-3l4-4l0 7l10-4l9-4l1 8l3-4l7-4l2 7l5 2l6 0l2-8l5 6l4-3l4-5l3 4l7 5l5-7l7-3l0 10l-1343 2l0 10l5-7l0 8l5-2l5-8l1 9l8 0l4-3l7-3l5 3l6 2l6 1l1-6l6-4l7 2l1 6l8-3l3-5l2 5l4 5l3-5l5-1l4 4l14-2l10-5l3 9l3-9l4 5l5-3l6 1l5 3l4 4l0-9l12 9l1-8l7 6l5-1l2-6l4 6l9 0l3-5l7 5l7-2l5-4l4 3l1 6l6-4l6-2l1 6l5-8l5 0l4 4l4-6l6 0l5 5l0-4l6 0l5 1l3 5l5-5l5 1l4 6l2-5l5 0l5 0l5 3l3 3l1-8l2-3l3 4l3 2l3-3l1-3l1 11l3-8l3 8l2-3l2-7l3 7l5 0l2-7l6 9l4-8l1 8l9-1l0-7l5 7l5 0l0-6l7 6l4-6l1 7l9-6l7 6l3-8l0 2l3 6l2-8l5 0l0 3l10 0l8 4l2-3l1-3l2 6l3-6l2 7l3-7l0 3l2 4l8 1l0-4l2-4l3 8l3-8l2 8l0-4l3-4l5 7l0-8l2 6l3 2l0-8l3-2l3 6l1 2l4-2l4-5l2 8l3-7l5 4l3 3l2-3l4-2l3 3l1 3l4-2l4-6l1 3l1 5l4-5l3-3l1 6l2 3l3-3l3-7l2 3l2 7l3-7l3-3l2 7l6 0l3-7l2 3l5 0l4-3l1 8l5 0l6-8l0 6l2 3l5 1l2-9l3 9l6-6l3 3l6 0l5 1l2-7l5 6l5 1l5-7l2 7l5 0l5 0l3-9l6 7l5 1l3-6l2 9l5 0l2-11l3 9l4-6l5-1l3 9l5-9l7-2l0 7l15-4l3 8l5 0l8-6l6-3l7 2l2 6l4-5l8 6l1-7l6 0l7 1l3 4l7-7l10 8l1-8l7 3l4 6l1-8l10 6l1-9l8 1l3 10l2-7l6 2l5 4l1-7l6-1l4 4l2 5l5-2l2-9l6 6l1 5l2-10l15 4l4 5l8-1l6-6l4 7l7-1l5-4l2 5l8-8l4 8l4-4l7 1l7 4l3-6l3-5l7 4l5 3l3-5l3 8l8-5l9 6l4-8l2 6l8-4l5-3l8 7l1-7l10 0l5 5l6 2l7-7l0 6l5-2l6-4l0 6l9 1l3-7l4 4l4 3l4-6l12 2l1 6l8-1l5-2l0-6l7 3l6 0l2 6l6-6l5 1l6 1l4-4l2 7l10-6l4 7l5 0l3-5l6-5l6 2l4 4l4-6l4 9l5-8l2 8l5-4l2-4l3 8l5 1l1-9l3 5l3-4l6-1l2 8l3-7l8 1l7 1l7 3l7 0l6-3l0 6l4-10l6 0l4 4l3 4l8-1l3-5l2 7l5 1l4-6l2 5l8-2l1-7l4 4l8-3l0 7l12-9l0 5l0 5l4-2l-1343 12l5-3l0 5l13-3l12-3l2 5l3-4l4-4l2 6l4 4l6-7l6-4l8 9l1-7l9 3l7-1l7 0l4 4l2-6l3 9l2-11l7 7l1-5l9 0l4 4l3 5l6-3l3-8l2 5l4 4l3-8l5 10l4-3l5-6l7 6l11-4l3 5l5-1l6-6l3 6l7 2l6-10l1 5l7-2l6 1l6 5l5-4l7-2l5 8l1-7l8-1l5 0l7 0l5 6l4-8l8 1l5 6l3-5l6 1l5-3l0 6l7 2l7-5l2 5l1-9l11 4l8 4l6-3l2 4l10-1l5-3l5 2l5 3l5-6l1 6l6 0l4-4l4-6l5 0l3 6l13 0l2-6l5 1l5 0l2 9l1-6l9 2l5 1l1-6l8 8l4-6l4 7l9-1l2-7l6 6l5 1l2-7l3-2l5 0l1 10l4-10l3 7l8-2l5 0l2 3l1-8l5 1l2 4l0 5l4-8l5 1l2 7l3-4l5 1l5 2l6 0l7-9l1 4l5 0l5 0l0-4l2 9l5-4l3-4l2 4l5 1l3 5l0-10l8 6l2-5l3 5l5 0l2-5l6 7l5 1l0-7l7 6l3-6l2 6l7 1l1-6l4 6l5 0l1-6l10 1l9 3l1-3l4 4l6-6l1 3l4-3l5 7l0-8l1 4l4 5l0-9l5 0l1 8l0-3l5 4l2-11l3 11l0-4l2-7l8 8l10 0l3-6l5 1l3 6l2-6l6 1l2 5l3-5l7 1l0 5l5-5l5 0l0 5l5-7l5 5l0 3l5-11l0 9l5 0l1-5l0 7l6-5l5 1l6-3l5 0l5 1l5 0l7 2l5 0l5 0l6-2l7 3l5 1l5-3l8-3l5 4l4-7l1 10l5 0l6-6l1 6l5 0l6 0l3-7l4 7l5 0l6-6l2 7l3-11l8 3l4 7l6-5l10 4l0-6l5 0l6 3l0-6l4 11l5-4l3-5l6 0l2 6l13 0l2-7l6 3l5 1l5-2l4 8l5-8l5 2l1-5l4 9l5-3l4-5l4 4l2 6l3-5l7-6l2 7l9 3l5-6l8-3l4 9l1-8l9 5l9 0l1-5l5 3l8 5l1-5l8 0l5-4l1 5l3 5l5-4l5-3l4-4l0 9l10-2l8-4l4 6l3-5l4-3l4 6l4 4l4-3l4-5l3 4l9-4l2 5l5 1l2-9l2 5l7-1l6 2l6-5l0 6l6 2l5-2l2-5l4 5l7 2l5-5l4 6l2-10l11 4l1 4l8-1l3-4l2 5l10-1l1-5l7 3l5 6l1-5l8-3l4 3l0 5l8-5l-1343 12l7 2l3-5l5-3l1 10l7-10l1 7l4-5l5 2l4 5l4-5l9 4l0-7l6-1l5 7l0-6l9 3l4 5l4-3l3-6l3 5l5 3l2-6l4 8l7-3l1-6l8 2l5 6l4-6l9 2l4 5l3-4l4-3l4 4l3 4l5-3l1-7l4 4l5 6l1-7l6-3l5 9l3-5l5 1l6 1l4-4l4 6l5 2l4-4l1-6l6 1l6 5l1-6l3 10l8-9l0 9l5-4l5-2l6 2l6 0l1-7l4 8l4-4l10 3l0-5l5 9l1-11l7 7l1-6l6 2l4 8l4-6l1-5l4 8l6 1l5-3l7-5l5-1l2 11l1-6l6 2l9 4l1-6l5-4l5 3l5 2l1-5l1 10l6-2l4-5l2 5l6 0l2-9l3 9l5-4l4-3l3 9l4-11l5 11l1-9l5 3l4 5l1-9l9 2l4 8l4-3l5-6l5 8l14-7l5 8l8-5l8-6l3 7l13 4l2-9l6 7l5-3l4-3l3 5l6-8l5 4l0 5l6-1l5-4l0 6l14-9l1 6l8-5l7 1l2 8l5-4l7-3l11 1l9 3l2-6l5 9l9-1l1-6l6 5l6 0l1-5l8 7l9-5l6-6l5 0l3 4l1 5l4-4l5-1l1 5l1-9l5 1l4 4l5 5l6-1l1-7l6 9l4-4l5-3l4 6l1-9l6 0l5 0l1 10l5-5l3-6l1 9l4-9l4 7l1-4l5 1l4 2l2-6l5 0l5 1l2 6l6-2l5 0l4 5l4-6l5 0l5 0l1-4l1 7l6-4l3-3l2 3l4 5l3-2l1-5l4 5l5 0l1-5l7 6l3-5l2 6l9 0l0-6l5 6l5 0l0-8l0 3l5-3l1 9l4-8l0 2l2 6l8-5l1 3l5 0l4-3l1 3l9-2l1 6l5 0l5-6l8 4l2-3l3 3l3-9l3 11l1-5l1-6l9 7l1-5l5 0l4 5l1-5l6 1l3 5l2-5l9 1l0 4l5-4l4 7l1-7l0 5l4 2l3-10l3 8l2-8l6 3l2 6l3-5l3-5l2 5l2 5l3-4l6-3l2 8l3-7l2-4l2 8l3 3l3-3l2-7l3 4l5 0l5 1l5 1l6-3l2 6l6 0l5 1l1-9l4 3l5 0l5 1l7-2l5-4l4 4l4 3l4 4l1-9l5 9l5-9l0 9l1-3l5-4l8 6l1-5l6 0l8 3l1-6l1 9l3-11l2 11l4-11l1 11l2-4l3-5l6 2l4 4l5 1l7 0l5 1l4-5l4-4l7 5l4 3l8-8l1 5l7-1l5-3l1 5l3 4l5-3l2-6l3 4l6 1l2-5l4 6l10-3l5-5l9 4l3 4l9-3l4-4l6 3l0 5l6-6l6 1l6 4l5-5l7 0l0 5l3-3l-1343 11l7-3l0 5l7 5l6-4l2-7l6 4l4 4l2-7l4 10l3-10l5 6l3-5l5 0l6 5l1-6l2 10l3-10l5 7l3-5l5 1l4 3l4-5l2 8l6-1l5-9l2 5l6 1l5-4l2 9l8-9l2 6l4-5l6 0l7 6l4-5l8 1l3 5l2-5l7-1l7 6l2-7l6 1l5-4l1 5l5 6l5-4l9-2l6 0l2-5l2 8l6 3l4-7l12 5l2-6l3 4l6 0l2-4l3 6l7-8l0 7l4-4l5-3l0 8l13-3l0-5l7 1l5 9l0-6l6 3l6 1l0-6l5 7l6-9l2 4l5-3l6 2l4 5l5-1l3-4l4 7l6-9l4 7l2-5l8 2l2 5l4-4l4-4l2 5l6 2l3-7l2 7l5-1l3-4l5-3l5 4l4 3l8-3l5-4l9 5l9 2l7-3l2 5l3-11l9 11l4-8l4 3l3 5l3-8l7-3l1 11l4-8l7 7l10-8l3 5l5-3l5-3l5 4l6 5l4-4l6-3l5 2l4-5l3 10l6-10l3 10l2-6l8 4l8 1l4-8l2 5l6-3l7-2l2 6l14 4l0-7l8 5l10-5l10 7l7-1l0-9l9 4l5 2l8 2l7-7l5-2l11 6l10-2l7 5l3-5l6-3l6 4l4 5l10-4l1-5l6 2l8 6l1-5l6-4l8 10l0-6l6 1l8-1l2 6l7-7l8 7l0-8l6 0l7 3l0 5l6-6l8 1l1-5l4 8l8-2l4-4l5 4l6 2l5-6l2 6l6 1l6-1l2-8l8 6l7 0l3-3l6 7l10-1l0-9l3 3l5 3l5 2l3-6l4 9l3-11l3 11l2-6l1-5l5 1l3 9l2-9l4 4l8 5l1-9l5 0l5 0l5 3l3 7l6-4l3-7l3 5l3 3l3-7l5 10l0-10l5 1l2 6l7 1l6-8l5 1l5 0l3 6l3-2l2-6l3 6l7 1l0-7l5 8l5-7l1 7l9-2l0-5l5 5l5 1l1-5l10 0l2-2l5 0l1 8l2-5l2-3l1 9l5 0l2-6l3 7l5-4l2-2l3 2l4-5l3 3l2-3l6 0l0 7l3-3l2-3l0 7l8-4l8 5l2-4l3 4l4-8l2 7l1-3l2-4l2 8l5 0l1-3l10 0l9-4l0 7l2-2l3-5l0 7l4-9l1 5l2 2l3-2l6-5l1 8l1-5l5 0l4 5l1-5l9 1l0 5l5-5l5-5l0 5l1 5l4-4l6 0l0 5l2-10l7 2l1 8l4-8l3-3l1 8l5 0l6-7l3 4l5 0l5 0l5 0l5 0l3-4l3 8l6 1l2-10l3 1l0 6l2 4l5-8l0 8l-1343 3l7 1l0 5l13-4l1 7l6-4l5-5l1 8l10-3l2-6l6 2l3 3l2-6l1 11l6-3l5-7l3 4l5 1l5-6l0 9l5 0l5-6l1 5l8-1l3-4l3 5l5 2l3-4l5-5l6 7l0-6l6 1l8 5l0-6l10 1l7 4l3-4l6 0l9 6l1-6l6 0l6 6l1-6l10 3l6 2l4-7l2 7l5 2l5-6l10-4l2 9l1-5l7 2l6 0l1-5l1 10l6-5l4-6l3 5l5 2l3-5l2 8l4-10l5 8l2-8l6 3l6 3l4 4l5-2l3-4l2 6l9-4l1-6l6 1l4 6l2-6l9 3l5 7l5-5l4-4l6 2l2 7l4-5l6 1l6 1l4-6l2 9l7-1l1-5l4 5l5-9l0 8l4-5l3-4l1 8l6 2l2-5l3-5l5 2l4 8l3-5l5-5l4 8l6 0l8-2l7-3l4 3l6 5l3-4l6-3l5 3l7 1l5-4l2 6l4-10l8 9l0-7l7 2l6 5l0-7l9 1l1 7l4-4l5-5l1 6l5 4l8-2l1-7l8 7l8 0l1-7l13 6l1-8l4 4l8 6l1-8l6-1l8 5l12 1l0-7l10 7l0-5l7 9l6-7l2 6l7-1l7-4l1 6l14-11l4 8l6-7l6 1l6 5l3-7l3 10l6 0l1-10l3 5l3 5l1-10l8 8l4-7l6 3l0 7l6-8l8 6l0-6l9 0l6 1l7 3l5-4l9 0l5 7l4-5l6 0l5 5l1-6l6-1l5 3l2 5l0-11l9 6l4-6l4 4l2 6l4-6l4-4l2 6l8 4l3-7l4 8l8-8l10 5l3-6l4 6l10-1l2-6l8 5l7 3l1-6l4 8l9-6l8-5l1 10l3-6l3 4l5 2l2-6l9 7l1-11l3 7l5-6l9 3l2 6l6-4l6-3l2 6l12-3l12 2l1-8l5 1l7 4l9 3l5-6l2 7l5 2l6-5l3-5l6 4l3 5l3-6l6-4l2 9l3-9l5 0l3 6l2 5l6-3l3-5l2 6l7 0l1-9l3 5l4 5l1-8l3-2l5 0l2 4l4 5l6-3l3-4l5 0l3 5l6 4l6-3l1-6l4 5l7-1l6-2l6-1l6 0l3 3l7 3l3-7l1-2l2 11l3-11l3 10l2-6l0-4l4 10l2-10l3 9l1-5l1-3l3 8l2-8l4 8l1-8l2 3l5 5l0-8l5 0l5 6l3-2l5 0l5 0l8 3l3-8l2 8l6-4l2-4l3 4l4 7l3-4l0-6l5 7l5 0l1-7l4 8l5 0l1-7l7 7l3-5l0-2l2 9l3 0l0-7l-1343 9l0 10l7-10l1 9l7-4l7 3l5 1l8-6l5-4l5 2l5 6l4-5l9 2l7 4l1-8l4 9l7-7l0 7l6 0l6-1l1-7l6 6l8 1l1-5l7 7l2-10l5 0l2 8l6-5l4-4l2 8l6-8l2 7l3-4l4-3l2 7l4 3l4-10l4 11l0-6l4-4l4 10l2-10l3 7l3-4l7 0l3 7l4-7l3-4l3 7l4 2l4-5l10-3l2 7l5-6l7 2l5 3l4 4l0-8l8 7l1-8l4 4l5 2l1-8l7 8l5-3l2 6l1-10l6 3l4 4l2-5l7 8l2-6l3 4l6 2l3-4l4-5l5 1l3 7l2-8l6 0l5 6l2-8l8 11l3-4l0-5l3 9l3-9l6 2l1 6l7-3l5-4l0 5l10 3l2-7l5 6l5 1l2-8l4 7l8-6l9-4l1 10l6-7l4 5l7 2l4-8l2 8l9-2l2-8l5 6l2 5l3-8l7 7l1-6l6 2l6 1l3-7l4 8l5 2l5-7l5-3l7 3l5 6l5-4l6-2l4 3l8 3l3-5l11 7l2-6l6 5l7-3l10-7l4 5l6 4l5-2l9-2l5 6l6-8l6-2l5 8l1-6l6 0l6 4l1-6l2 10l12-1l0-6l7 5l5-4l1 5l7-9l2 10l6-3l2-6l10 1l5 3l2-6l2 10l7-2l2-5l3 5l5 2l3-4l5-5l4 3l2 6l5-5l5-1l5 4l3-7l2 9l7-10l1 6l4-3l6-3l1 6l3 5l7-11l2 5l4-4l9 7l1-5l7 2l8-1l0 5l6-6l11 0l7 4l3-4l6 0l2 6l3-6l7-1l2 6l14 2l2-8l6-1l5 6l6 0l6-1l3-5l7 5l6 2l3-6l5 9l7-2l3-6l6 0l3 5l5 1l6-3l7-5l3 5l10-6l3 5l4-3l8 1l2 6l5-3l5-3l2 6l5-9l6 1l1 7l6-6l6 1l1 6l5-6l5 8l3-11l1 6l4 3l5 2l4-5l11-3l7 4l6 0l7-4l5 0l6 3l7 2l10 1l2-8l5 8l5 2l5-6l4-3l10 2l8 3l4-4l2 8l9-2l1-5l5 2l8-5l1 6l6-1l5-6l1 6l7 2l6-6l1 9l12-6l9 5l2-7l3 5l6 0l3-6l4 6l6-3l3-5l8 4l3 3l6 0l4-5l3 8l6 1l3-4l1-7l5 3l7 3l3 4l9-1l1-6l5 7l6-1l3-5l5 5l5-5l0 5l3 0l-1343 12l3-2l5-4l3 4l5 2l5 2l0-7l10 6l3-10l0 5l4 5l3-10l3 11l3-10l0 5l9-4l2 6l3-6l6-1l0 10l2-5l3 4l5-1l4-4l4 4l6 2l3-7l3 6l9 0l2-6l6 6l9-1l2-7l7 4l3 5l2-7l4-4l5 3l4 4l5-5l3 9l6-1l4-5l4 5l6 1l3-9l2 6l5-3l6 0l1 6l5-6l8 4l0-6l8-2l7 1l4 5l6-1l2-6l2 9l8-2l3-5l5 4l8 2l3-7l4 7l6-2l6-2l2 5l2-7l6-1l3 4l2 6l11-5l9-3l6 8l3-5l5-1l5-1l7-1l3 4l6 2l5-4l1 5l2-9l5 10l2-7l3 4l5-3l5-5l5 7l7 4l4-5l11 3l3-9l5 2l5 5l5 2l5-1l4-3l4 6l12-6l8 6l6-4l4-3l6 2l7 3l4-8l2 9l8 0l1-5l10-5l4 6l5-6l10 11l0-9l5 6l7-6l1 9l7 0l3-11l4 9l2-4l7 4l6 1l3-4l1-5l7 2l5 4l1-5l11 2l4 4l5-3l11 4l0-6l7 0l6 0l3 4l6-6l8 6l4-6l8 5l6 4l6-5l4-4l5 5l1 5l5-2l4-9l4 4l1 5l4-8l11 1l2 5l6-2l7 5l1-7l5 0l7 2l8 2l4-5l1 7l9-1l3-7l5 4l3 4l3-7l10 8l2-10l6 4l4 6l2-9l7 2l4 3l4-5l3 10l6-11l2 7l4-4l5-3l2 7l8-6l0 8l4-4l6-3l0 9l5-9l7-1l3 10l6-6l8 2l10-1l1-5l5 5l7-6l1 7l7-1l7-4l1 7l10 1l4-7l2 5l5 1l4-6l11-2l0 7l6-4l7 0l0 7l6-10l7 2l8 1l7 2l4 5l3-8l5-2l4 7l2-7l7 2l3 5l4-5l6-1l4 3l2 5l7-3l6-1l3 4l6-8l7-2l1 7l8 4l5-5l1-5l6 2l6-3l0 10l0-5l6 3l9 1l0-5l15 3l10-4l4 3l5-2l4-4l4 7l11 2l2-8l7 6l4-3l7-4l2 5l4 4l6-2l3-5l3 7l6 2l3-5l6-5l6-1l3 5l6 6l4-3l5-5l1 5l5 2l6-3l1-7l6 4l3 4l1-8l7 10l2-6l4 6l7 0l0-5l9-3l2 9l2-5l3-4l2 9l9-1l2-5l7 5l8-7l1 6l6-1l5-6l1 6l4 0l-1343 11l3-7l0 5l5 3l3 3l0-10l9 6l6-5l4 4l7 3l5-2l9-4l3 6l2-8l6 0l3 4l3 5l6-2l2-6l3 5l6 1l2-5l11 7l5-6l3 6l7-1l4-2l3-6l7 5l8 2l3-4l4 7l1-9l8 4l1-6l11 4l3 6l6 0l1-6l4 7l7-9l3 5l5-2l6-1l6 5l3-5l8-2l4 5l1-7l1 11l9-8l1 6l5-1l7-7l1 5l5 2l7-2l2-6l6 7l6 4l1-10l1 5l6-1l6 3l0-5l5-3l2 11l9-3l4-7l6 2l6 1l9 3l8-1l1-6l3 5l6 2l2-7l7 11l7-8l1 8l6 0l5 0l1-11l2 6l5-4l5-1l2 5l10 3l0-9l4 4l5 2l6 0l5 2l0-7l8 8l3-6l2 6l7-2l4-4l8-2l0 8l14-6l5 6l8-6l14 3l9-6l2 11l4-5l1-6l2 10l7-10l5 11l0-5l9 5l8-6l5 6l9-2l0-6l7 5l6 1l0-6l9-2l1 9l3-4l5-2l7-1l6 6l0-8l9 1l4 6l3-5l7 0l2 5l3-6l6 0l1 5l7-7l4 6l2-6l5 2l2 9l3-5l2-5l2 10l9-5l1-5l5 0l3 9l2-6l4 4l5 2l5-5l9-5l6 8l0-8l9 3l5 5l2-5l5 1l9 2l0-6l9 10l5-3l3-6l6 5l8 3l2-5l7-3l6 3l3 6l5 1l4-5l5-3l6-3l1 8l8 3l5-9l3 6l8-4l6-4l3 6l5 3l6-1l6-3l5-2l9 3l3 4l6-5l5-5l5 4l3 5l5-5l5-4l3 5l2 5l5-4l9-5l1 6l10 0l6-1l1 5l8-10l4 10l1-6l7 0l6 6l1-6l8-1l5 2l4-6l4 8l7-2l7-3l0 8l5-8l5-2l1 8l5-7l5 9l2-9l4 3l8-1l9 2l8 3l4-3l7-2l6-3l3 7l11-8l1 9l5-4l6 3l7-2l7-2l2 5l8-9l5 2l0 7l5-4l4 3l1-8l5 10l4-9l4 5l5-2l3-4l7 6l9 3l2-9l2 6l5 4l2-9l4 10l5-2l1-6l5 4l5 2l1-6l5 7l4-10l6 6l3-4l10 2l5 5l4-6l1 8l9-8l2 7l6-2l7-6l1 8l7 1l7-6l1 6l6-11l5 5l6 6l5-4l2-5l8 4l4 4l4-3l5-5l4 4l1 5l5-5l3-5l1 5l0 5l3-5l-1343 11l4-2l0 5l10 3l2-9l7 5l5-1l4-6l2 8l6 0l3-7l3 6l4 3l2-7l6-3l5 9l1-6l9 3l4 2l5-3l9-3l4 5l4 3l5-1l4-6l2 5l6 0l3-8l3 5l1 6l3-8l5-3l3 6l0 5l5-3l7-1l3-4l6 0l3 6l3-9l9 5l10 2l2-6l8 3l3 5l5-6l9 0l3 5l6-6l8 6l3-8l6 5l4 6l4-4l1-5l4 7l8-6l1 7l7-2l4-4l0 7l8-9l1 5l4-4l5-2l1 5l8 3l6 0l1-8l8 5l6-6l0 7l4 2l6-1l4-8l4 7l6 2l7-6l15 4l11-1l8-5l4 7l2-5l5-2l4 10l0-6l5 2l6 0l1-6l8 5l5-4l3 5l4 4l8-10l1 6l6-2l6-1l1 6l7-8l6 5l1-7l11 10l1-10l6 4l3 6l2-10l7 0l0 8l4-4l4 3l13 1l3-5l8 5l5 3l3-6l1-5l11 10l4-6l6 3l7 2l6-7l4 8l10-2l1-7l5 5l8 3l1-7l6-2l7 1l0 6l5-4l5 6l0-7l6 0l5 0l3 5l4-7l6 0l2 9l2-5l4 4l6-1l3-5l5 1l1 8l5-8l3 4l6 2l3-5l2 6l8-9l0 7l5-5l6-2l0 8l7-8l5 1l0 5l8-4l3 6l2-6l6-2l3 6l11-5l0 5l5-3l6 1l0 6l11-7l2 6l6-9l8 7l8-4l3 5l4-5l6-3l2 6l5 4l6-1l3-8l6 5l6 0l2-6l4 9l7-7l1 5l6-1l4-7l1 5l4 4l3-7l2 9l6-2l1-8l4 4l4 5l1-8l8 0l0 8l4-5l7-2l7 1l7 3l3-7l6 8l5-2l6-2l10 2l6 1l8-2l7-1l6 2l1-6l1 11l6-4l5-6l2 4l3 5l4-6l6 0l6 6l2-6l5-1l5 3l6 2l5-7l3 6l5-2l7-2l1 6l10 2l2-8l3 5l8-2l6-3l6 4l6 2l4-3l3-6l4 4l4 3l6-4l2 8l5-10l5 9l0-6l5 2l6 2l0-6l9 8l5-9l3 5l9-3l4-3l4 6l6 4l5-6l0 6l11-7l4 7l6-2l2-6l4 7l6-9l0 5l10-3l3 9l2-5l5-5l3 9l6 0l2-4l4-6l7 5l9 6l4-7l9 6l5-2l6-6l5-2l0 8l9 1l1-7l4 3l5 6l1-7l9 0l5 3l6 0l8-2l3-1l-1343 11l4 3l0 5l4-8l6 6l5 1l6 0l0-7l5 6l7 0l0-7l8 5l6-3l2 5l5-9l6 3l4 7l6-8l9-1l4 4l0 5l5-8l4 8l5-6l0 6l5-1l6-7l0 6l6 1l4-5l6-2l5 2l3 6l10-2l0-7l6 6l5-1l7-3l5 6l1-8l5-1l5 2l0 8l5-5l5-2l0 7l9-7l2 6l3-7l8 6l1-7l5 0l6 1l5 4l4-3l7 3l3 5l4-4l6-4l3 5l7 2l5 1l0-6l4-4l5 0l2 6l3-5l6-2l2 5l11 4l0-7l5 7l5 2l0-8l11 1l5 6l7-6l13-4l2 6l7-5l6-1l2 6l4-6l2 11l4-11l3 8l3-5l6 1l5 2l3 4l7 0l6-4l1-6l8 4l5-2l0 6l8 2l5-8l3 4l7-1l6-1l3 5l4-8l6-1l3 9l4-7l6 5l5 0l6-7l3 6l9 0l5-2l2 7l2-11l9 5l4 4l5-5l9-4l2 11l3-7l6 4l6 1l5-6l2 8l6 0l5-3l6-8l5 5l5 4l5-5l9-4l0 10l5-8l0 6l9-4l5 0l0 7l6-7l5 0l0 6l8-9l4 4l5 5l6-1l2-9l3 8l6-2l5 1l6 2l2-8l12 9l1-9l7 7l5 3l1-9l5 9l1-11l5 1l0 8l7-5l6-2l0 7l6-7l7 0l1 5l5-7l5 2l2 9l3-4l6 1l5-1l5-4l1 7l7-9l3 6l2-5l5 0l3 5l2-6l6 1l1 8l5-5l3-4l0 9l7 0l5-6l2 6l9-2l1-5l5 5l7-1l3-6l5 5l5 1l3-5l2 6l6 0l4-6l2 4l7 5l4-5l5-3l4 3l4 5l2-5l2-6l4 4l7 2l3-6l2 10l8 1l1-10l4 6l5-2l6-4l3 6l8 1l5-2l1-5l1 10l7-8l5 7l1-5l8 0l5 1l8-1l6 1l7-3l8 0l5 8l2-6l1-5l5 8l7-7l1 5l5-2l7-2l3 5l4 4l8-2l5-7l4 5l5 2l5-7l1 9l9-10l2 9l5-4l2-6l2 9l5 0l4-3l6-3l5 2l3 5l3-6l6-3l4 5l1 5l6-3l6-3l1-5l0 10l7-9l6 4l1-5l0 11l6-2l8-4l1 6l4-11l10 5l6 5l6-10l0 6l6-4l9 4l18 0l7-5l6-1l3 8l12-8l2 5l2 6l5-1l3-9l2 9l5-3l3-3l4-2l4 3l3 3l5-1l5-1l6-1l1-5l3 7l6 0l5-7l0 5l3 5l0 1l5-9l0 7l-1343 5l4 2l3 7l4-3l2-6l3 7l5-1l3-4l3 5l6 0l6-7l3 5l4 2l5-3l6-3l4 7l2-9l9-1l0 9l6-8l8 5l5 3l10-6l0 8l5-1l6-6l0 7l9-2l1-9l4 5l2 5l1-9l9 7l4-3l6 2l7 1l2-7l3 5l6-1l6-2l4 8l3-8l4 2l5 3l6-2l4 5l1-9l6 0l6 7l2-5l6 0l4-4l1 8l4 2l5-10l0 6l4-3l7 2l6 2l6-5l1 7l9 0l6-4l3 5l2-9l5 0l7 8l2-5l6-3l5 7l8 0l5-5l5 6l1-9l12 0l1 6l7-6l8 6l1-6l7 0l5 11l1-5l1-6l13 2l4 7l6-6l10 4l13-4l6 5l3-5l5-2l4 4l7 5l5-9l2 7l7-4l6-3l2 7l4-7l6 3l7 4l4-8l1 8l5-2l8-5l1 6l5 2l7-4l5-2l4 4l2-6l8 8l2-9l3 3l6 5l6 2l6 1l1-7l8 7l4-6l2 5l6-1l3-8l2 5l5 3l2-7l9 9l2-11l3 4l5 5l8-1l2-8l3 6l6-2l5 0l4 7l2-5l5-1l5 5l1-7l10 4l12-3l1 6l5-2l6-2l8-6l6 7l5 3l5 0l4-6l3 6l5 1l4-4l1-5l4 2l5 4l1-6l6-1l3 4l2 6l0-11l5 10l3-10l5 4l1 6l13-7l2 6l5-1l6-5l2 7l3-10l5 1l5 7l2-5l5-1l3 4l6 2l5-4l2 5l11-1l3-5l6 3l8 0l3-6l4 6l5 1l3-6l0 10l7-5l3-5l3 5l5 1l4-3l2 7l9-7l2 5l3-5l7-1l4 4l4-5l3 9l10-5l14-3l6 5l6-7l2 8l5 0l5-3l5-2l4 7l2-7l6 1l5 0l2-5l4 6l6 2l2-6l8 7l4-9l1 7l6-4l7 3l5 1l7-2l0 6l1-11l7 4l4 4l1-6l4 9l9-7l6 6l7-2l1-5l5 7l7-1l4-7l7 6l5 1l5-5l0 5l6 0l3-8l1 5l7 3l6-7l6 0l8 2l2 5l5-3l5-1l3 5l3-9l8 4l2 4l5 0l5-1l8-4l6-4l0 9l5 0l5-1l2-8l4 4l3 7l3-8l5 0l2 7l6-10l4 9l1-9l9 8l1-5l1 8l4-9l5 0l0 5l6 2l1-8l3 5l1 3l1-9l6 10l2-5l3 5l7-6l1 6l5-1l2-8l2 2l1 5l2-8l3 7l4-5l1 5l8 4l2-10l3 9l5-1l2-9l1 3l3 8l2-8l5 3l0 5l0-9l4 9l0-9l-1343 10l0 10l7-6l0 6l6-1l6-7l0 6l8-1l3-5l3 5l5 2l3-5l9-1l1 6l5-3l5-2l6 2l4-3l6 1l5 2l1-6l3 11l7-3l4-3l5 5l6 1l5-2l2-5l6 3l6 3l4-5l5-4l5 2l7 7l2-5l1-5l6 6l5 5l1-6l1-5l5 4l4 7l1-5l6-1l5 3l3-7l3 8l8-2l5-4l9 2l0 5l6-5l5-2l0 5l4 3l5-10l3 9l5-4l3-6l3 8l8 3l3-5l2-5l7 5l5 2l2-4l5-4l6 8l1-6l8 2l4 5l3-6l5-3l4 4l3 6l5-4l5-3l3 6l3-9l7 9l1-9l5 3l6 6l0-9l7 0l2 11l5-2l8-6l4-3l1 10l10-9l1 6l6-6l6 0l1 6l5-6l5-1l1 7l2 4l6-1l1-9l3 4l7 5l1-9l13 6l1-6l6 2l6-1l1 8l7-6l5-4l2 8l8 2l2-8l3 5l5 3l2-8l11-1l1 6l6-3l6-2l4 3l4 4l7 0l4-7l2 9l5-1l8-6l1 6l14-7l6 7l5-2l7-4l4 5l8 0l6-2l2-4l7 3l3 5l3-4l1-7l4 5l5 1l7 4l7-6l6-3l1 10l5-11l1 6l6-6l6 4l2 7l5-2l4-9l1 7l6-2l4-4l0 7l9 3l1-7l4 7l6-7l9-2l5 9l0-5l4-4l5-2l7 11l0-6l11 6l1-5l7-6l7 5l8 4l6 0l4-5l4 7l3-11l6 2l4 9l4-4l2-7l4 9l9-2l6-5l5 4l6 5l3-6l3-5l5 5l8 5l2-5l10-1l5 2l3-6l1 10l9 0l1-6l4-2l6 0l2 6l4-5l5-3l2 6l1 5l5-2l8-4l1 6l1-10l8 0l4 10l3-5l2-6l3 9l5 0l4-4l9-3l2 6l5-2l5 0l6 0l3-6l3 6l4 2l6-3l3-4l7 5l6 4l2-10l1 5l5-1l5 1l0-5l5 10l4-5l7-2l5 3l2-5l3 9l6 0l3-5l1-5l2 11l5-1l6-5l2 4l5-1l5 0l2-6l4 4l4 5l2-5l2-5l3 5l3 4l2-4l3-4l3 4l2 3l3-3l5-1l2 3l10-1l1-6l5 0l5-1l0 9l0-3l5 2l2-5l3 5l0-3l2-3l6-2l2 4l3-4l7 3l2 4l5-1l3-4l2 4l5 3l3-4l0-4l5 3l5 6l0-6l1-4l5 6l5 0l3 4l5-7l5 0l8 2l1-5l1 10l4-10l2 11l6-7l3-3l4 10l1-11l1 3l3 5l7 0l2-6l5 8l6-1l4-6l4 5l8-1l0-6l5 4l7 4l1-5l12 2l6 5l6-7l0 6l7-1l-1343 11l4 1l3-6l3 6l6 1l6-8l3 6l6 1l6-4l8-2l5 2l9 2l3-6l2 8l7-8l3 9l2-5l4-2l11 1l6 7l6-2l1-6l5 7l5-8l1 7l5-2l5-4l0 7l8 1l2-10l2 5l2 5l2-10l6 8l3-6l4 3l11 0l5-2l5 2l6 0l3-4l3 6l5 2l5-2l1-7l7 5l7-1l6 0l4 3l2-7l8 8l4-6l4 5l5 3l7-6l11-2l4 5l2-5l7-2l6 7l2-6l7 1l6 6l1-6l7-1l5 8l3-6l5 2l5 4l3-6l5-3l5 3l3 5l5-4l7-4l2 6l10 2l2-6l4 4l6 2l2-6l4-3l6 11l1-11l1 5l4 6l1-11l5 1l1 8l4-4l9 3l6 0l5 2l4-5l8-4l5 9l1-8l6 2l4 5l2-7l8 2l3 5l3-4l6-4l3 6l7 3l5-4l7-5l6 8l1-5l6-1l5-1l0 5l11-2l9 5l3-5l2 5l7 1l1-5l8-6l2 10l4-3l3-7l2 11l9-6l1 6l4-3l7-6l1 6l7 0l6-8l1 6l5-1l6 0l1 6l6-6l4-2l2 5l12-8l1 5l14-5l3 8l5-4l7 4l9-6l2 5l5-2l7-2l2 5l12-8l1 8l7-7l8 6l8-7l4 8l7-6l5 6l7-8l4 9l4-4l1-5l4 9l6 0l3-5l3 4l4 3l6-6l5-4l8 5l1 5l6-2l5-3l3-4l7 2l4 5l3-4l9-1l2 6l4-5l9 5l1-6l6 0l4 4l1-6l8 8l5-4l3 5l6-11l7 2l1 7l7-4l6 2l6 2l7-4l8-3l5 3l4 3l5 0l5-1l8-4l7 4l5-1l5 0l2-6l4 6l3 5l2-6l1-3l4 5l3 3l2-3l1-6l4 3l3 5l2-6l8 5l1-5l5-1l5 0l0 5l9-6l1 5l4-5l5-1l1 5l10-1l1 5l5-1l4-5l1 5l9-1l0-5l5 5l6-1l0-6l6 6l5 0l4 4l4-7l5 0l5 3l1-5l5 8l0-9l5 11l1-6l0-5l4 1l6-1l4 9l5-5l6 2l5 4l1-7l5-3l5 0l1 10l5-8l7 3l7 1l5-2l8-1l6 3l4 3l7-5l8-2l3 4l4-6l3 11l4-5l12-5l2 5l8 4l5-1l3-5l4 6l7 0l2-7l5 5l9 0l0-8l8 6l5 3l0-8l8-1l1 11l5-7l3-4l1 11l11-8l0 5l6-1l-1343 11l4-4l0 5l4 3l5-7l7 8l5-6l13-2l4 5l6-5l5-2l2 10l1-6l4 4l7 0l4-5l6 6l6 0l0-10l5 7l2-5l11 4l5 5l8-2l0-6l6 5l8 1l0-6l6 7l7-1l3-7l5 6l8-3l5-5l6 5l6 2l4-7l0 6l6 0l4-3l1 6l6 1l4-7l1 5l7 1l4-8l2 8l7 0l6-8l4 9l7 0l4-5l12-3l1 6l7-6l6 0l1 9l6-7l4 5l0-9l7 9l1-8l3 4l9 6l1-9l7 0l5 2l3 4l8-4l8-2l5 9l3-9l6 4l7-2l6-3l5 5l0 5l5-4l7-3l0 6l8-10l4 6l12-3l3 5l6-2l4-5l3 5l7 4l2-7l8-2l1 7l4-4l6 1l0 5l5-6l6 7l0-9l5 2l7 2l7 1l6-5l1 9l10 0l1-9l3 4l4 5l2-9l6-1l5 5l3-5l5-1l7 0l0 9l2-4l7 3l8 2l1-5l8-4l4 3l5 7l4-3l5-3l5 3l7 0l6 1l0-7l11 5l3-6l4 4l5 5l2-7l7 0l5 4l2-5l4-2l2 11l5-10l0 6l8-7l4 11l5-7l5 3l5 3l5-6l4-4l7 4l1 5l6-5l6 0l1 5l5-8l6 9l2-7l5 1l6 7l2-6l7-2l5 3l2 5l6-6l5-2l3 6l4-9l5 4l3 4l5-3l3-4l3 4l4 3l3-4l11-3l5 5l7 4l5-1l5 0l3-9l3 4l3 7l2-9l3 8l5-8l0 8l4-5l5 0l7 1l5-1l6 0l3 6l2-7l5-2l3 5l0 3l6-4l4 3l1-3l5-5l4 7l1-7l8 3l1 3l4-3l1 7l4-2l1-6l1 3l3 3l6-1l1-3l2-4l5 7l0-8l3 4l2 4l0-8l8 3l1 6l5-1l4-6l2 4l5 0l3-5l2 4l1 6l4-5l4-6l1 6l9 2l2-6l5 9l0-10l5 0l1 7l3-3l5-1l4 5l4-8l5 0l5-1l1 11l6-6l5 0l9-4l5 0l6 5l9 3l5-2l2-6l7 5l5 3l3-8l3 8l5 0l3-6l2 8l5 0l2-11l4 9l1-5l4-4l4 8l6 1l3-5l4 6l1-10l8 8l2-5l5 3l6 2l2-5l6-3l0 10l6-7l1 6l7-2l6-6l1 7l5 1l6-3l1-6l5 4l4 4l1-6l7 8l4-3l0-6l7 1l7 5l0-7l7 10l4-10l3 6l4-4l5-2l3 6l9 5l2-7l3 7l5-2l4-6l3 5l6 0l5 0l2-6l7 5l7 3l5-7l14 6l5-7l5 4l0 5l7-5l-1343 10l4-1l0 5l9-8l1 6l12-6l1 10l3-4l6-6l1 10l9 0l0-9l6 3l4 4l8 0l2-5l4 5l6 0l3-5l3 5l6 0l2-8l3 5l4 5l3-8l11 8l1-6l7 4l6 1l1-6l13 1l0 5l7-1l7-2l1-6l8 4l6 3l1-7l8 11l2-10l3 8l5-3l3-4l4 6l5 0l4-4l2 5l8 0l3-4l4 4l7 0l5-4l3 3l8-8l2 6l3-5l7 8l1-8l4 3l7 2l4 2l6 0l5-7l3 8l7 2l3-6l9-3l4 4l3 4l0-10l8 5l3-5l5 1l1 10l4-6l4 4l10-3l2-6l5 4l7 2l6 1l6 0l6-4l5 6l1-9l6 0l3 8l2-6l8 8l1-5l5-1l7 4l1-6l9-2l2 8l2-6l5 2l6 6l1-5l6-1l5 2l6 2l7-6l0 7l6 0l5 0l6-5l4 5l10-1l4-5l5-3l0 9l8-9l2 7l4-6l7 3l3 5l7 2l3-8l8-3l5 7l1-6l9 4l8 4l3-7l3 7l11 0l3-8l8 6l2 4l4-7l7-2l3 5l4 4l1-10l6 10l1-11l2 6l3 4l7-9l1 8l5-4l5 2l5 3l4-6l9-2l4 5l6 0l7 0l5-4l6 0l5 3l5 1l5-1l3-3l1 7l5 0l1-7l3 3l5 0l9-1l0 6l5-7l5 0l0 6l5-7l5-1l0 7l8-6l2 5l3-6l7-1l0 6l5-6l5-1l1 6l7 5l3-6l2 6l6-3l2-4l3 3l7-4l1 7l2-4l5-1l2-3l3 3l3 4l2-4l2-4l3 4l8 4l0-9l2 5l5-1l5 0l6 7l3-5l5-1l4-2l1 8l4-8l5-1l5 5l4-7l4 10l5-8l4 4l4-2l6-4l3 10l0-6l6 2l8 1l0-6l6 9l5-4l3-6l3 4l4 4l6 1l7 0l5-6l4 8l11-8l4 7l5-3l5-2l3 6l5-9l7 5l9 2l4-3l2-5l0 10l7-8l6 4l5-6l3 9l10-8l2 7l4-2l4-4l1 7l9-5l1 6l10-6l1 6l7-1l3-7l2 5l8 2l1-8l5 8l8-1l1-9l8 7l3 3l1-8l8-2l1 5l0 6l9-1l3-8l3 7l7-2l2-5l4 6l7-7l1 8l5-2l8-6l0 8l7 1l5-10l0 5l5-3l7-2l0 6l3 5l6-1l5-10l1 8l6-5l8-2l1 8l12-5l4 6l4-2l2-6l4 6l8-7l1 8l6-1l5-5l2 8l9-1l1-10l4 3l4 4l6 0l5-2l2 6l5-7l-1343 11l4-2l3 7l4-7l7 0l6 4l6 5l6-3l3-4l6 4l5 3l6-4l4-5l4 4l2 5l4-4l4-5l2 5l5 4l4-9l1 5l5 0l7-3l2 8l6-8l7 4l6 3l3-4l7-4l3 7l3-9l7 4l0 6l5-3l5 1l2-8l5 7l5-3l7-4l2 7l12-4l2 6l6-3l3-5l2 6l5-1l6-5l2 5l4 4l5-5l4-4l4 4l6 3l3-5l4-3l6 1l1 10l3-8l5 4l5 2l3-8l3 10l6-2l1-5l5 5l7 2l1-5l11-4l3 4l4-6l8 11l1-5l3-6l5 2l4 3l4 4l6-2l5-7l5 5l8 3l4-8l4 9l6-1l3-7l2 6l5 3l3-7l6 7l0-10l5 2l0 9l6-4l3-4l6-1l8 6l2-5l7-2l5 2l1 8l4-5l4-3l7 1l5 2l3-6l3 8l6-1l3-5l3 6l5 1l3-7l2 6l6 0l5-3l5-4l4 3l4 4l3-5l5-3l5 1l0 9l6-5l4-5l0 9l10-2l10-6l5 2l2 5l8-6l6-2l2 5l4 5l5-1l5 0l3-6l8 5l5 0l6-3l5-1l3-4l1 8l3 3l2-4l4-3l3 3l1 3l4-3l5-1l1 3l2-8l6 4l2 3l3-4l0 7l7-4l1-5l3 9l2-10l4 10l0-5l1-6l5 11l5-1l0-5l5 6l4-3l1-7l0 3l4 3l1-6l4 10l1-11l0 7l0-4l5 4l5-1l0-4l9 8l1-9l4 8l4-6l2-3l3 11l0-8l3 5l7-3l5 0l5-1l2 4l3-6l5-1l2 6l3-4l5-1l3 7l3-7l5 0l8 5l2-7l6 10l5-2l2-6l4 3l6 6l2-6l10-1l5 6l4-7l5 0l5 2l1 6l9-6l8 0l8 2l5 3l8-5l5-2l5-3l4 6l6 3l4-3l2 5l1-11l6 2l2 8l3-6l6 2l7 3l3-6l10 7l1-8l3 4l4 4l2-8l7 8l4-5l3 5l12 1l2-5l5-6l10 4l3 5l5-3l5-2l6 2l4-6l5 8l10-1l4-4l5-3l1 8l10-1l5-7l6 6l1 5l5-3l9-4l1 6l8-10l8 4l7 6l8-6l13 7l3-6l5 4l5 2l3-6l5-5l5 10l3-4l5 3l11-6l0 8l8-2l6-1l1-6l6 7l7 1l1-6l12-3l0 10l3-6l6-4l0 10l8-7l0 6l5-2l6-1l1-6l8 9l4-6l7-2l4 7l3-7l8 4l5 5l6-3l2-5l7 5l6-1l5-4l4 3l9 4l4-9l2 9l9-6l5-2l-1343 11l0 10l7-10l1 7l8-5l5-2l1 8l9 1l1-6l5 2l4 4l2-7l9 5l2-6l5 1l6 1l4 4l9-5l10 0l3 5l8-3l7 0l7 4l1-6l10 0l5 7l3-4l5-2l5 3l9 1l1-6l4 7l6-9l1 6l5-4l6-1l2 9l4-7l8 3l8 1l4-7l1 6l3 5l4-7l9-1l1 7l7-6l6-2l1 6l8-8l2 9l3-4l5 2l9 3l1-6l5 7l7-7l2 5l6-2l8-3l5 2l7-3l7-2l5 8l7-7l4 3l1-5l3 10l6-4l2-5l4 4l5 3l6-5l2 8l6 0l6-7l2 5l6-2l7-4l2 5l5 2l8-6l8-4l1 9l3-5l3-4l1 9l9-9l1 11l6-4l5 3l5 0l3-10l2 9l5-2l2-7l2 9l6-3l3-5l3 4l5 2l3-5l2 7l5-1l4-5l2 5l5-1l4-7l1 7l4-3l3-3l1 7l3 3l2-11l0 7l3-5l5 8l1-4l5-1l2 6l2-2l1-4l2 6l2-11l5 0l0 8l7-6l0 9l3-5l2-5l0 9l8-5l2-4l5-1l4 4l1-4l8 10l1-7l4 6l5 0l1-7l1 9l6-7l3-3l2 3l6 6l2-10l3 9l5-3l5-1l2 3l3-7l5 0l4 8l2-3l5-1l3 3l1-8l8 11l2-8l2-3l3 11l8-7l7 5l4-4l2 5l7-8l2 6l4-3l6 0l2 6l4-6l7-2l2 6l11-9l3 5l9 6l4-9l1 6l7-3l6-2l0 6l5-8l4 1l3 8l3-5l6 0l4 6l4-8l5-2l4 6l3 4l5-2l2-7l3 5l7-2l8 0l5 3l1-6l9 8l1-9l4 5l5 1l6 0l6 0l1-6l6 6l5 3l1-6l10 6l4-8l5 4l6-2l4-4l2 7l10 0l4-3l6 2l1 5l4-6l6-2l1 5l6 3l2-11l4 4l1 5l6 1l5-1l2-6l6 7l9-4l4-5l8 6l8-7l5 7l1-5l9 2l2 5l3-5l5-3l2 4l2 5l5-3l6-6l3 4l6 2l5-2l5-4l5 3l6 1l6 3l8 0l6-4l2 7l8-10l7 6l1-7l15 0l1 7l7-6l6 5l5 4l8-3l8-5l5 3l5 6l4-5l3-3l8 5l10 0l2-4l4 4l4 3l3-5l7-5l6 6l15 4l2-8l6 7l4-3l7-2l2 5l10-7l3 4l3-5l6 0l5 6l4-5l11 2l7 3l5-8l1 7l6-1l7-3l2 7l15-9l0 5l9-6l0 10l-1343 11l8-8l1 7l8-3l5-2l5 3l8 2l6-1l3-3l5 6l1-10l5 2l4 4l2-5l1 10l7-2l5-9l4 3l4 6l5-9l10 8l1-6l6 3l6 4l1-7l8-2l3 9l1-6l9 4l6 0l5 0l3-5l6 6l5 1l4-5l2-4l5 1l3 7l3-6l5 3l3 5l3-6l4-4l3 5l6 3l4-4l1 7l6-9l6 8l1-5l8 1l7 0l6-2l5 2l5-1l8 3l1-5l17 0l5 8l5-1l4-8l11 9l1-9l7 7l5-1l5-6l4 9l1-11l4 11l5-1l1-8l5 5l5 3l1-9l4 9l6-5l0 4l5 0l5-1l4-6l4 4l5 0l4-4l1 6l2 3l3-3l5-1l2-7l0 10l6-9l4 5l0 3l5-4l5 0l0 3l3-8l7 7l3 4l7-5l11-1l8 4l2-5l1-3l2 8l3-8l4 9l0-7l1-3l4 9l5 0l0-7l9 7l1-8l4 8l4-5l2-4l3 3l6 8l2-4l6-1l5 0l3 2l10 0l6-6l2 6l0-8l5 9l9-3l3-5l5 0l5 8l1-8l5 0l5 6l11 1l8-5l6 6l1-9l11 3l2 6l5-3l5-5l6 6l5 2l5-2l8-2l1 5l13-2l2-8l6 0l2 5l4 4l5 2l1-7l3-4l6 2l1 6l5-3l5 0l3 4l5-5l7-3l6 9l4-7l6-1l4 6l8-6l2 5l5-3l6-2l0 9l4-7l6 3l4 4l4-6l8-2l4 4l3-6l2 10l5-1l2-6l3 4l9-7l0 6l8-2l6 0l1 6l6-9l4 5l6 2l2-7l4 7l8-2l0-5l6 5l6 2l0-6l6 8l1-11l5 4l3 5l6-2l3-6l2 5l6 5l2-6l4-5l6 5l6 2l5 0l7-2l4-4l2 7l10-2l11 0l13 1l1-6l8 2l4 5l1-5l6-3l5 10l2-8l6 2l3 4l2-7l5 0l3 6l3-4l7 1l4 3l7-6l0 8l5 2l5-10l1 6l4-3l5-4l1 6l2 5l5-4l6-5l3 5l4 2l9-1l6-3l4-4l1 10l8-11l1 7l4-6l8 1l1 9l7-6l4-5l1 9l7 2l5-10l3 6l8-2l9 1l10 2l4-3l3-5l7 5l5 5l2-6l7-1l8 6l2-5l9-3l6 7l11-5l3 6l4-4l7-2l4 5l3-7l6-1l2 11l3-6l3-5l1 11l7-10l1 5l4-4l6-2l1 6l5 4l6 0l1-8l6 7l4-4l7-3l2 6l3-6l7-2l2 6l0 5l7-2l-1343 10l4-2l0 5l5-9l4 3l1 6l5-4l7-5l1 7l5 3l5-2l3-7l3 7l5-1l4-5l3 7l1-10l8 9l2-7l5 4l5 1l4-4l3 7l6-10l2 11l4-8l4 5l5-2l6-2l2 6l5-9l4 3l9 4l2-8l4 9l5-1l2-7l4 7l8-1l9-4l4 8l2-9l5 3l5 4l2-6l5-1l6 3l1-5l2 10l6 0l2-5l4-4l4 10l4-7l2 4l5 0l5-1l1-6l6 6l5 0l1-7l4 5l3 5l1-7l4 6l5-9l0 9l1 2l5-9l6-1l0 9l10-1l8-9l2 8l3-8l7 7l9 4l1-5l10-1l11-1l1 5l6-1l3-5l2 5l4 3l4-5l0-4l5 3l5 0l0-4l2 10l6-4l2-7l1 2l3 7l3-7l3 6l2-7l2 5l7 0l6-1l6-3l1 8l4-8l5-1l3 5l3-6l6 8l3-6l5-1l2 8l3-9l5 0l4 5l0 5l7-2l7-5l0 6l7 0l6 1l3-5l6 5l6-10l0 10l3-4l4-5l0 10l8-6l7 5l4-4l4-4l6 3l1 6l4-3l4-5l1 6l5 2l4-6l4-5l5 2l1 5l4-6l1 10l5-9l2 5l4-4l5-3l2 8l3-8l7 4l5 5l5-6l7-3l5 11l2-9l6 5l5 3l2-8l5 8l5-2l0-6l8 8l2-6l8-2l3 6l2-7l6 1l1 9l3-5l3-6l1 9l5 2l2-5l6-5l5 2l0 6l6-4l5 5l1-7l7-1l4 7l3-6l10 2l4 4l6-5l4-4l6 2l1 6l7-6l4 2l4 4l4-3l8-2l6 3l5-5l1 9l10-7l1 7l6 0l2-5l5-5l4 3l2 6l4-5l7 0l4 6l6-2l2-7l5 9l7-3l2-5l5 3l6 2l3-5l10 6l5-6l4 4l3 5l5-6l8-1l1 5l5-6l6-3l0 6l4 3l5-2l3-6l3 5l2 5l3-6l6-1l2 5l1-9l7 2l5 6l3-7l5-1l8 2l1 7l7-6l6 0l3 6l3-7l7 1l4 5l4-4l4-3l5 8l0-6l6 1l4 3l1-7l6 11l4-6l11-3l2 8l6-4l5-2l7 1l5 2l0-5l5 8l5-1l4-6l5 5l5 2l5-1l1-5l4-3l2 10l3-10l7 3l1 7l9-2l6-5l1 6l10-1l4-6l4 4l5 0l5-2l4-3l5 5l4 4l4-4l1-6l4 4l5 1l7-2l4 6l3-8l10 0l4 5l6-5l7-2l1 10l7-7l3 4l6 1l7-3l7-3l5 6l12-2l3-6l5 2l5 4l0-6l5 11l5-1l2-5l5 5l6-9l4 7l4-4l5-1l4 5l1-7l2 10l5-7l0 5l3-2l-1343 11l4-3l6 8l3-7l7 3l5-3l0 6l10-5l11-2l1 5l6-1l7-5l2 5l3 3l5-1l4-8l1 9l5-1l5 0l2-6l6 7l5 0l2-8l4 5l5 0l3-3l3 7l3-9l2 8l5-10l1 6l2 3l5-1l4 3l1-3l1-4l5 3l4 3l1-3l5-5l4 3l0 4l5-4l5-1l0 4l5-5l3 8l2-9l0 5l3 3l4-9l1 9l2-4l2-5l8 4l8-5l1 9l2-5l4 5l6-6l2 4l5-1l3-4l2 4l5 5l3-4l0-6l5 5l5-6l1 11l1-5l5-1l5 0l4 3l4-6l5 0l5-1l1 10l6-5l3-5l1 10l4-10l4 4l1-5l5 0l3 9l6-6l2 7l3-9l5-1l5 10l2-5l7 1l4 5l2-5l8-2l2 7l4-6l8 2l5 1l6-2l2-5l5 5l5 2l3-7l4 7l9-1l6-3l6 0l5-1l4 3l1 5l6-7l5-1l1 5l4-7l7 3l3 6l6-3l4-5l3 6l7 0l4-5l2 5l6 1l4-6l2 6l7 2l7-7l3 7l0-11l11 1l2 8l3-4l5 3l5 2l4-6l9-3l5 4l4-5l1 11l8-4l2-7l5 3l5 5l2-7l6 0l5 5l1-5l9-1l6 5l4 5l12-1l2-6l5 6l5-2l5-2l4 4l7-7l5-1l1 9l7-6l4 3l5 4l3-6l7-4l3 8l2-6l6 2l4 4l4-6l1 8l4-9l7 1l1 5l8-4l7-1l0 6l10-7l3 9l0-5l2-6l3 10l4-10l2 10l1-5l4-4l7 0l1 6l5-5l5-2l1 6l7 3l4-4l2 6l3-11l7 6l8-5l2 7l3-5l6 1l4 5l3-6l11 4l12 0l1-5l6 1l5 5l1-5l8-3l1 11l3-7l5 3l3 4l3-7l8-1l1 5l5-6l5 9l1-9l4 4l4 3l0-9l8 10l1-8l4 6l4-3l6-1l6 2l3-3l5 8l1-9l7 9l1-9l5 4l6-3l9 1l1 7l4-5l7-3l1 8l5-9l7 9l1-8l4 2l6-1l5 1l7 4l1-7l4 9l6-11l5 8l4-6l7 3l2 6l3-4l3-7l2 5l6 3l3-7l6 8l4-7l1 6l5 0l4-4l1 6l9-5l12 2l1-5l10 4l9 3l5-7l4 7l8-1l2-6l3 6l8-8l2 7l5-2l8 1l5 0l5-6l0 6l2 5l4-5l6-2l1 6l6-8l6-1l0 7l10-7l4 4l7 5l5 1l1-8l7 6l5-2l1-6l7 3l6 4l1-6l4-2l7 7l1-7l5 2l5 6l1-7l11 4l2 6l7-4l3-6l7 3l6 5l5-3l8 0l3-1l-1343 11l0 7l5-6l0 5l10-4l0 5l5-6l4-2l0 5l1 2l4-10l0 8l5-1l1-5l1 7l4-9l5 0l1 8l7-4l3 3l2-3l8 2l8 5l2-6l10 5l0-6l5 5l5-2l1-4l5 4l5-1l0-4l4 9l5-4l1-6l4 5l5 0l1-6l4 10l6-6l5 0l5-1l3 7l5-5l5-1l2 4l3-7l4 9l1-10l3 3l3 5l8 0l6-4l6 0l5-1l4 5l5 2l6-2l4-8l5 6l5 1l5-2l8 1l5 2l7-1l6-2l8-3l2 6l4-8l0 11l6-2l1-5l5 4l8 3l0-6l3-4l5-1l4 4l6 4l3-4l5-2l7 8l1-6l6 1l5 0l8 1l7 1l5 0l4-5l1 7l5-1l5-7l1 5l5 1l5-6l0 9l10-1l4-7l5 6l5 3l4-10l1 5l6 0l6-2l8 3l3-5l6-1l7 9l1-6l7 4l7 1l2-8l5 8l6 1l1-8l8 7l5-4l2 6l13-3l7-7l5 4l5 3l9-3l8-3l5 5l0-7l13 10l1-8l7 5l4-5l0 9l8-11l3 6l3-6l4 11l2-11l3 5l1 6l2-11l9 7l7-6l3 10l2-5l5 2l7-7l1 6l5-2l5-1l1 6l5-8l7 3l6 2l5 3l1-6l8-3l1 9l4-7l4 3l5-1l5-4l0 7l7 2l4-5l3-4l9 1l3 9l4-5l4-4l8 0l5 3l1 5l5-2l4-4l1 5l6-9l4 8l1-7l6 2l5 2l3-5l4 8l6 0l5-4l7 5l1-9l6 11l0-11l4 2l2 9l4-4l7-4l8-1l6-2l2 8l5-7l6 2l4 6l4-6l5-1l5 3l5 3l5-2l6-3l3 5l3-7l7 0l4 4l3 5l5-2l7-4l2 5l10-1l1-7l4 3l6 3l0-7l6 9l6 1l3-7l6 8l6-1l2-9l2 7l6-3l5 1l9 2l7-2l5 3l6-1l4-7l1 6l6-1l3-4l2 6l8 3l4-3l4-5l8 1l5 2l4 3l7-3l6-4l3 4l9 5l3-9l2 9l6-4l3-4l6 7l0-9l6-1l6 3l1 5l6-6l8-2l0 11l1-5l7 3l8 2l1-8l7 7l6-5l2-5l8 4l0 7l5-4l5-7l1 7l6-1l6 0l5 4l4-7l6-1l6-1l1 6l7 4l1-10l5 0l1 5l14-2l8 6l4-10l0 6l5-3l7 5l1-6l7-2l5 2l1 5l5-5l7-1l2 6l2 4l3-11l10 2l5 5l7-5l4 9l7-7l3 3l5-7l0 5l3-2l-1343 13l5-1l0-3l7 9l4-6l5-1l5 0l5 7l4-4l5 0l5-1l7 2l7-5l1 9l4-10l5 0l2 11l5-3l7-6l4 5l6 0l3-6l3 5l4 4l2-7l10 1l0 6l5-4l6 0l10-2l0 6l6-7l8 1l1 5l8-5l6-3l2 5l9 4l4-7l4 7l6 0l3-8l3 8l5 1l2-7l10 7l2-7l5 5l5 0l2-7l4 7l7-8l2 9l5-2l3-7l2 9l9-9l1 8l7-2l2-5l2 8l8-2l1-5l5 4l5 4l1-6l8-3l3 6l4-7l9 0l1 6l7-5l6 2l4 5l5-5l4-4l5 5l8-3l1 6l5 1l5-7l0 6l6 2l4-7l1 8l6-1l4-4l5-6l4 6l1 5l4-3l5-2l0 5l10-7l3 5l5-5l5-2l3 5l9-7l4 9l2-5l8 4l7 3l3-7l10 6l6-6l3 5l12 1l3-6l5-4l1 11l7-10l3 9l2-6l4-4l3 9l6 2l3-6l1-5l7 2l6 5l2-5l4-2l8 5l10 4l3-4l4 6l1-10l6-1l1 6l10 2l5-5l5 2l5 2l5 1l9-2l5-6l3 5l8 0l5-1l6 3l2-7l3 9l6-2l6-4l4 4l8 3l4-10l1 7l5-2l5-3l2 6l6 2l4-10l4 10l5-5l7 4l6 0l1-9l3 5l6 3l5 1l4-3l6 1l4-4l5 2l6 1l2-6l4 8l8-7l1 5l6 0l6-4l1 6l5 2l7 0l1-6l5 6l7 1l2-11l1 7l7-5l5-1l1 7l6-6l5 5l1-5l7 0l3 8l2-5l3-5l3 8l7-7l1 6l5-3l6-2l4 6l6-8l1 11l6-2l1-6l4 4l4 4l1-6l7-4l3 9l1-6l6 2l6 2l1-6l6 9l6-6l12 0l10-3l0 7l5-3l4-2l0 7l5-9l5 4l6 4l4-7l2 6l6-1l5-7l1 7l8-1l4-4l4 6l6 1l3-8l2 5l5 4l2-9l11 0l0 8l6-4l8-3l0 8l15-8l2 7l6-5l6-1l5 1l3-4l2 8l5-9l4 8l2-5l8 4l2 4l4-4l5-3l3 5l10 0l1-7l5 2l6 3l6 3l6-9l0 8l6 2l6-5l9-3l2 6l3-8l6-1l1 6l12 1l2-6l5 0l8 6l1-7l12 1l1 10l3-5l4-5l1 10l7-11l4 7l4-5l6 0l2 5l3-7l8 9l5-6l4-3l1 9l10-4l2-5l1 11l6-2l7-3l2-5l1 9l7-8l-1343 10l0 10l6-9l0 5l0 5l10 0l1-11l3 7l3 4l1-11l9 4l1 7l7-3l5-6l1 7l6 0l6-2l7-5l4 5l10-5l3 5l5-2l3-5l2 6l3 4l3-5l6-2l6 7l0-5l9 0l6 0l0-5l5 7l6 1l6-2l4-4l10 0l1 6l5-5l5-3l4 7l8 4l5 0l1-5l5 5l7-4l8-6l5 5l6 4l7-6l1 5l6 0l7-5l2 5l5 2l8-4l3-7l7 6l13 3l0-7l8 6l9-4l5-1l7-2l3 9l3-7l8 1l1 5l5-7l8 7l2-7l5 1l5 6l2-6l5-3l4 6l7 4l4-6l1 7l10-6l1 6l6-1l3-9l5 7l3-3l5 2l5 3l0-5l5-2l5-1l0 5l8-5l2 8l2-5l5-3l1 8l4-10l7 10l1-6l6 3l7 3l1-5l10-4l2 4l0 6l5-2l5-4l0 6l6-11l6 6l10 5l5-2l3-5l7 4l6 1l9-5l4 6l5-9l7-1l1 10l4-2l5-6l6-2l4 7l7 3l7-4l3-4l5-1l5 4l4 4l4-7l1 9l10-4l3-5l6 3l2 6l4-6l6-5l1 5l7 3l4-6l1 8l7-2l2-6l4 4l4 5l2-6l5-3l4 6l4 3l6-9l2 6l5-3l4-3l2 6l8 0l4-5l4 4l8 2l2-7l4 7l5 2l2-7l7 6l2-8l2 5l6 1l1-8l5 10l5-3l1-5l5 7l5-2l6-6l4 4l5 3l4 2l1-9l7 8l4-6l2 7l10 0l2-5l10-3l4 7l3-4l5-1l4 6l0-9l5 0l4 8l2-5l6 3l8 1l2-8l6 6l6 1l3-5l3 9l9-8l5 7l7-4l6-2l6 2l8 2l4-5l3 7l9-4l1-6l5 1l4 9l1-7l6-1l4 4l7 2l5-1l5-3l5-3l1 7l11-4l9 7l5-2l1-7l7 6l7-6l0 8l6 1l5-3l7-5l6 4l5 2l6-1l6-4l3 6l6-9l6 7l2-5l6 2l5 1l1 5l1-10l6 6l6 1l3-8l6 6l6-2l7 1l4 3l3-5l5-2l5 9l1-7l5 3l7 3l0-6l12 4l10 4l1-7l5 2l5-2l5-2l6 6l1-7l6-1l4 10l2-9l4 4l4 5l2-9l9-1l5 6l5 5l9 0l5-5l3-5l8 2l7 5l1-5l5-3l6 4l4 7l4-4l4-4l4-3l0 10l8-6l1 7l6-2l6-6l1 8l6-11l0 10l-1343 10l4 0l7-4l3 4l10 0l3-4l8 5l10 0l3-6l2 5l8-3l1-5l4 4l5 6l2-5l5-3l7 3l6 3l7-1l6 0l6-5l0 9l10-9l5 8l4-4l0-6l5 8l6 1l1-6l10-3l0 9l5-4l4-3l0 9l6-9l3 8l2-6l4-4l4 8l9-3l1 5l5 0l6-10l1 7l7-4l5-3l1 7l5 3l5-3l3-4l5 3l6 5l3-8l11 3l2-6l6 2l3 5l2-5l5-2l4 10l3-5l6 3l8 0l4-8l5 4l2 6l5-8l6 2l3 5l3-5l7-2l2 6l4-7l6 1l3 7l4-4l6-1l7 4l3-7l12 6l4-6l7 5l4 3l7-2l1-5l7 4l6 3l1-6l5-2l6-1l2 8l4-6l4 3l5 2l3-4l4-3l6 10l0-7l5 5l4-4l8-2l4 3l1 5l8-2l5 2l0-5l6-4l9 0l0 5l14-3l0 6l5-2l7-6l0 6l7 2l8-4l9-3l4 4l2 5l5-3l3-8l2 5l6 1l4-5l3 8l8 0l3-8l4 5l4 4l3-9l11 6l5-6l5 3l5 4l5 0l8 0l3-7l4 9l10-8l1 8l7-2l3-4l7-1l4 4l3-5l11 0l5 7l6-5l5-4l3 4l8 5l5-7l12 9l6-7l3 6l12-4l11-1l8 5l3-9l3 7l5-1l2-6l3 9l9-6l6 7l4-3l8-3l2 4l9-9l5 8l3-5l6 3l7 2l1-5l4-3l0 10l6-7l0 6l4-3l8-5l0 6l8 3l5-7l1 8l9-2l5-3l3-5l0 10l11-7l9 5l7-7l2 8l9 1l7-5l3-5l5 1l5 2l2 6l4-4l5-5l2 6l9 2l2-8l3 7l6 1l4-3l5-4l7-1l2 9l11-4l0 5l5-2l6-4l0 5l7 1l5-8l1 8l5-3l4-6l0 8l7-1l3-6l3 4l6-1l6-3l2 8l4-9l6 1l2 5l4-6l8 2l3 4l7 0l2-7l4 8l5-3l3-6l3 4l5 4l3-6l6 9l1-11l6 11l0-8l8 6l8-3l6-4l6 2l9 0l4 3l6-7l0 8l5-2l6-1l8-1l3 3l9 1l7-3l5 5l2-10l6 11l7-6l1 6l13-10l2 9l5-4l5-4l1 9l7-10l2 10l2-6l9 3l6-1l9-4l1 5l7 3l8-7l0 5l6-1l-1343 11l4-6l0 5l4 4l5-5l5-5l5 5l5 4l5-4l7-5l3 5l8 5l3-5l1-5l6 2l5 7l1-6l6 2l6 3l2-6l12 8l1-5l6 5l6 1l5-5l6-5l8 4l1 6l5-3l7-1l7-6l4 6l5 1l4-4l2 7l3-9l5 1l5 4l4-4l4-3l6 5l3 6l7-2l2-9l5 6l6 3l1-9l5 8l5-8l1 10l5-3l5-4l9-3l5 9l1-8l7 2l7-2l0 8l6-8l6 3l3 6l5-3l4-6l3 6l6-1l8-2l3 7l5-8l6 0l6 6l3-6l6-2l5 10l3-7l4 3l6-1l7-1l9-3l5 2l7 1l2-5l2 8l4 3l3-5l3-5l4 3l2 5l4-5l7-2l2 5l6-7l5 2l2 9l3-4l4-3l8-3l5 6l3 4l6-1l3-10l1 5l1 6l3-10l6 8l3-6l4 3l5 4l3-5l5-3l7-1l0 6l9-7l3 9l2-6l5 3l6 1l3-5l4 7l9-3l3-5l5 1l1 8l3-5l7 2l8 4l4-9l8 7l6-7l1 6l7 0l5-3l7-4l3 10l2-7l7 1l5 5l4-9l3 10l9-6l1 6l8-1l4-3l3-7l8 7l7 4l2-11l4 7l3-4l7-1l4 6l3-8l10 2l3 6l6-5l6-1l2 6l10 1l1-9l3 6l5 3l9-2l6-7l4 9l1-9l7 2l3 8l2-6l5-3l3 8l6 2l4-7l1 5l5-1l7-3l1 5l1-10l10 4l2 7l4-3l5-5l2 8l5-11l4 11l3-8l3 4l8-1l2-5l5 7l8-6l1 7l5-1l8-5l1 8l6-1l7 0l3-6l6 5l10-1l4-4l6-4l3 9l11 1l4-4l5 5l11-10l2 7l7-6l6 2l2 5l4-5l7-2l2 5l6 3l6 1l0-6l10-3l5 5l4-4l5-1l4 9l2-6l5 3l6 2l2-6l12 1l10 3l2-5l4 3l6 4l2-10l2 6l6-1l5-1l1 5l5-6l6-1l3 4l3 4l2-10l6 10l4-6l2 7l5-1l5-9l1 8l6-3l7-5l1 8l5 2l5-1l4-5l3 5l8-1l4-7l4 4l1 5l4-7l8-4l0 10l1-5l6 1l6 0l1-5l6 8l6-2l1-6l6 6l5-2l0 6l4-9l5 4l3 5l5-3l4-4l3 5l12-3l1 5l6-11l7 5l7 6l4-4l5-4l4 4l6 3l4-4l2-4l4 3l4 4l6-6l15 1l0 5l8-3l-1343 11l8-1l1 7l8-6l5-4l0 8l11-8l1 9l5-5l7-5l1 9l5 0l5-9l6 1l3 8l6 0l3-6l7-3l3 9l4-8l7 5l10-1l10-4l6 4l5 6l5 0l4-4l3-6l4 4l5 2l3-6l13 4l4-4l9 0l3 6l5-6l10 4l3 6l5 0l7-9l1 6l7-1l4-4l1 6l9-1l1-8l5 4l4 6l1-8l7 2l7 4l3-5l7-2l8 3l4 7l5 0l6-10l0 7l6-1l9-2l9-2l5-2l1 6l9-6l4 2l5 8l5 0l3-10l2 6l6 0l5-7l2 6l2 5l5-7l4-4l2 6l1 5l4-4l7-2l8-1l6 1l6 5l3-7l7-2l6 6l10-6l3 5l3-4l9 3l12 2l5-5l4 3l5 3l2-5l8-2l3 6l3-5l7-1l5 3l1 6l9-4l5-6l1 6l3 4l6-5l3-5l5 2l1 8l5-6l5 2l4 4l7-5l12-5l1 6l3 5l5 0l3-8l3 8l5 0l4-11l1 11l4-9l6 9l7-4l4-4l3 6l15-4l14-4l2 5l4-3l5-1l2 5l11-5l1 5l6-4l7-2l1 7l6-6l8 1l6 6l6-6l6-2l5 3l1 5l6-4l4-3l5 2l6 2l4 5l2-8l5-1l3 9l2-7l4 3l7 2l2-7l11 1l2 8l5 0l3-8l7-3l4 9l2-5l6 4l6 3l5-8l4 8l5 0l6-3l1-6l6 6l5 3l6-8l15 1l10 4l3-5l3 5l7-1l6-6l4 5l3 4l5 0l3-7l7-3l5 5l14 0l4-4l9 1l7 6l5-5l6 0l5-3l1 6l12-2l6-4l9 1l0 6l8-5l5 3l2 5l6-3l7-3l2 5l5-9l6 0l1 8l5-8l4 4l6 3l3-5l9 0l4 7l5 0l4-7l5-1l11 4l12 0l11-2l4 7l6-7l10 2l10 1l4-5l4 4l4 6l7-5l5-2l6 0l6 2l6-4l1 7l11-1l1-5l5 3l3 4l2-5l5-2l8 2l8 5l6-3l4-4l8 7l7-10l6 1l1 5l10-3l5 3l5-4l9-1l4 4l4-4l10-1l2 6l6-6l7 3l0 5l6-3l-1343 10l5 5l0-5l9 1l1 4l4-4l5 0l1 4l4-7l6 4l1 3l4-3l5-3l0 3l1 3l4-3l5 0l1 3l2-8l8 8l9-6l1 6l4-6l6 1l0 5l6-5l5 0l0 5l4-8l6 1l0 7l5-7l5 0l0 7l10 0l9-5l1 5l4-5l5 0l2 5l6-8l4 8l2-8l8 1l0 7l5-7l5 0l0 7l8-6l2 6l3-6l7 6l11 0l2-4l5 0l3 4l2-4l5-4l3 8l1-4l5 0l4 4l2-4l4-2l4 6l2-6l8 6l1-6l5 0l5 6l1-6l9 6l10-3l0 3l5-3l5 0l0 3l5-8l5 3l0 5l5-5l5 0l0 5l6-7l5 0l0 7l10 0l10-3l0 3l5-3l5 0l0 3l7-5l3 5l2-5l5 1l4 4l1-4l5-4l4 4l0 4l5-4l5 0l0 4l9-6l1 6l4-6l5 0l1 6l6-7l4 7l1-7l6 0l4 7l1-7l6-1l3 8l3-8l6 3l1 5l4-5l5 0l1 5l6-7l4 7l1-7l6 1l3 6l3-6l8 6l1-4l5 0l4 4l1-4l9-2l0 6l5-6l5 0l0 6l7-4l3 4l2-4l8 4l3-6l5 0l3 6l2-6l8 6l10 0l10 0l10 0l2-4l5 0l4 4l1-4l4-3l5 0l0 7l10-8l0 8l5-8l5 8l1-6l5 0l4 6l2-6l5-1l3 7l2-7l7 1l2 6l3-6l6 0l1 6l5-6l5 0l0 6l10 0l2-6l5 0l3 6l2-6l7 1l1 5l4-5l5-3l1 5l1 3l5-3l5 0l0 3l5-6l4 3l1 3l4-3l6 0l0 3l8-8l2 8l3-8l8 8l7-7l3 7l3-7l6 4l1 3l4-3l5 0l1 3l10 0l10-3l0 3l6-3l5 0l0 3l10-8l0 8l5-8l5 0l0 8l7-8l3 4l0 4l5-4l5 0l0 4l3-8l5 4l2 4l3-4l8 4l8-7l2 7l3-7l6-1l1 8l4-8l6 8l2-7l5 0l3 7l2-7l5 0l3 7l9-6l2 6l3-6l5 0l2 6l4-8l6 1l0 7l5-7l5 0l0 7l8-6l2 6l3-6l8 2l0 4l6-4l4 4l1-4l6-2l3 6l2-6l6 0l2 6l3-6l5 0l2 6l7-7l3 7l2-7l9 7l9-8l1 8l4-8l6 8l1-8l5 0l4 8l1-8l5 0l4 8l1-8l9 8l2-7l5 0l4 7l1-7l5-1l4 8l1-6l5 0l4 6l1-6l9 6l2-5l5 0l3 5l2-5l2-3l3 5l3 3l2-3l6-4l3 7l3-7l4 3l3 4l2-4l5-1l3 5l2-5l6 0l2 5l10 0l1-3l6 0l4 3l1-3l7-4l2 7l3-7l6 0l1 7l4-7l5 0l1 7l9-7l1 7l4-7l5 0l1 7l7-8l4 8l1-8l8 1l1 7l4-7l6 7l0-5l5 0" fill="none" stroke="none" marker-start="url(#mk)" marker-mid="url(#mk)" marker-end="url(#mk)"/><g stroke="#aaaaff" stroke-width="4" stroke-dasharray="11.8 4 3.8 4.1 3.8 4.1" shape-rendering="crispEdges"><line x1="621" y1="287.3" x2="621" y2="421.2"/><line x1="647" y1="289.3" x2="647" y2="423.2"/><line x1="674" y1="292.2" x2="674" y2="426.1"/><line x1="701" y1="294.4" x2="701" y2="428.1"/><line x1="728" y1="297.3" x2="728" y2="431.3"/><line x1="754" y1="299.3" x2="754" y2="433.3"/><line x1="781" y1="302.2" x2="781" y2="437.3"/><line x1="807" y1="308.2" x2="807" y2="442.4"/><line x1="833" y1="314.2" x2="833" y2="448.1"/><line x1="860" y1="319.1" x2="860" y2="453.0"/><line x1="886" y1="322.2" x2="886" y2="457.0"/><line x1="913" y1="326.2" x2="913" y2="460.2"/><line x1="940" y1="330.2" x2="940" y2="464.2"/><line x1="966" y1="334.2" x2="966" y2="468.2"/><line x1="993" y1="337.4" x2="993" y2="471.0"/><line x1="1020" y1="335.1" x2="1020" y2="469.0"/><line x1="1046" y1="333.4" x2="1046" y2="468.2"/><line x1="1073" y1="334.2" x2="1073" y2="468.2"/><line x1="1100" y1="335.1" x2="1100" y2="469.9"/><line x1="1127" y1="337.4" x2="1127" y2="471.3"/><line x1="1154" y1="339.4" x2="1154" y2="473.3"/></g><g fill="none" stroke="#00ff00" stroke-width="3" stroke-linejoin="round" shape-rendering="crispEdges"><polyline points="115.0,272.0 418.0,272.0 585.5,283.4 621.2,287.3 647.3,289.3 674.2,292.2 701.1,294.4 728.3,297.3 754.0,299.3 775.2,301.3 781.0,302.2 807.3,308.2 833.3,314.2 848.2,317.3 860.2,319.1 886.3,322.2 913.2,326.2 940.1,330.2 966.4,334.2 988.2,337.4 993.3,337.4 1020.2,335.1 1046.3,333.4 1057.2,333.4 1073.2,334.2 1100.1,335.1 1127.3,337.4 1154.2,339.4 1183.4,341.1 1458.0,341.2"/><line x1="115.0" y1="404.5" x2="1458.0" y2="470.5"/><line x1="115.0" y1="673.0" x2="1458.0" y2="538.5"/><polyline points="585.5,283.4 706.4,223.3 948.4,223.3 1183.4,341.1"/><line x1="666.4" y1="243.3" x2="988.2" y2="243.3"/><line x1="626.4" y1="263.3" x2="1028.3" y2="263.3"/><line x1="585.5" y1="283.3" x2="1069.2" y2="283.3"/></g><g shape-rendering="crispEdges" fill="#7a007a"><rect x="115" y="202" width="1343" height="3"/><rect x="115" y="739" width="1343" height="3"/></g><defs><g id="nd" shape-rendering="crispEdges"><path d="M-1.5 -2.5h3v1h-3zM-1.5 1.5h3v1h-3zM-2.5 -1.5h1v3h-1zM1.5 -1.5h1v3h-1z" fill="#000"/><rect x="-1.5" y="-1.5" width="3" height="3" fill="#fff"/></g></defs><g><use href="#nd" x="585.5" y="283.5"/><use href="#nd" x="626.5" y="263.5"/><use href="#nd" x="666.5" y="243.5"/><use href="#nd" x="706.5" y="223.5"/><use href="#nd" x="733.5" y="223.5"/><use href="#nd" x="814.5" y="223.5"/><use href="#nd" x="840.5" y="223.5"/><use href="#nd" x="921.5" y="223.5"/><use href="#nd" x="948.5" y="223.5"/><use href="#nd" x="988.5" y="243.5"/><use href="#nd" x="1028.5" y="263.5"/><use href="#nd" x="1069.5" y="283.5"/><use href="#nd" x="621.5" y="287.5"/><use href="#nd" x="647.5" y="289.5"/><use href="#nd" x="674.5" y="292.5"/><use href="#nd" x="701.5" y="294.5"/><use href="#nd" x="728.5" y="297.5"/><use href="#nd" x="754.5" y="299.5"/><use href="#nd" x="775.5" y="301.5"/><use href="#nd" x="781.5" y="302.5"/><use href="#nd" x="807.5" y="308.5"/><use href="#nd" x="833.5" y="314.5"/><use href="#nd" x="848.5" y="317.5"/><use href="#nd" x="860.5" y="319.5"/><use href="#nd" x="886.5" y="322.5"/><use href="#nd" x="913.5" y="326.5"/><use href="#nd" x="940.5" y="330.5"/><use href="#nd" x="966.5" y="334.5"/><use href="#nd" x="988.5" y="337.5"/><use href="#nd" x="993.5" y="337.5"/><use href="#nd" x="1020.5" y="335.5"/><use href="#nd" x="1046.5" y="333.5"/><use href="#nd" x="1057.5" y="333.5"/><use href="#nd" x="1073.5" y="334.5"/><use href="#nd" x="1100.5" y="335.5"/><use href="#nd" x="1127.5" y="337.5"/><use href="#nd" x="1154.5" y="339.5"/><use href="#nd" x="1183.5" y="341.5"/><use href="#nd" x="621.5" y="421.5"/><use href="#nd" x="647.5" y="423.5"/><use href="#nd" x="674.5" y="426.5"/><use href="#nd" x="701.5" y="428.5"/><use href="#nd" x="728.5" y="431.5"/><use href="#nd" x="754.5" y="433.5"/><use href="#nd" x="781.5" y="437.5"/><use href="#nd" x="807.5" y="442.5"/><use href="#nd" x="833.5" y="448.5"/><use href="#nd" x="860.5" y="453.5"/><use href="#nd" x="886.5" y="457.5"/><use href="#nd" x="913.5" y="460.5"/><use href="#nd" x="940.5" y="464.5"/><use href="#nd" x="966.5" y="468.5"/><use href="#nd" x="993.5" y="471.5"/><use href="#nd" x="1020.5" y="469.5"/><use href="#nd" x="1046.5" y="468.5"/><use href="#nd" x="1073.5" y="468.5"/><use href="#nd" x="1100.5" y="469.5"/><use href="#nd" x="1127.5" y="471.5"/><use href="#nd" x="1154.5" y="473.5"/></g><g fill="#fff" stroke="#ff0000" stroke-width="1.4" shape-rendering="crispEdges"><circle cx="115" cy="203.00" r="3.5"/><circle cx="1458" cy="203.00" r="3.5"/><circle cx="115" cy="209.97" r="3.5"/><circle cx="1458" cy="209.97" r="3.5"/><circle cx="115" cy="216.95" r="3.5"/><circle cx="1458" cy="216.95" r="3.5"/><circle cx="115" cy="223.92" r="3.5"/><circle cx="1458" cy="223.92" r="3.5"/><circle cx="115" cy="230.90" r="3.5"/><circle cx="1458" cy="230.90" r="3.5"/><circle cx="115" cy="237.87" r="3.5"/><circle cx="1458" cy="237.87" r="3.5"/><circle cx="115" cy="244.84" r="3.5"/><circle cx="1458" cy="244.84" r="3.5"/><circle cx="115" cy="251.82" r="3.5"/><circle cx="1458" cy="251.82" r="3.5"/><circle cx="115" cy="258.79" r="3.5"/><circle cx="1458" cy="258.79" r="3.5"/><circle cx="115" cy="265.77" r="3.5"/><circle cx="1458" cy="265.77" r="3.5"/><circle cx="115" cy="272.74" r="3.5"/><circle cx="1458" cy="272.74" r="3.5"/><circle cx="115" cy="279.71" r="3.5"/><circle cx="1458" cy="279.71" r="3.5"/><circle cx="115" cy="286.69" r="3.5"/><circle cx="1458" cy="286.69" r="3.5"/><circle cx="115" cy="293.66" r="3.5"/><circle cx="1458" cy="293.66" r="3.5"/><circle cx="115" cy="300.64" r="3.5"/><circle cx="1458" cy="300.64" r="3.5"/><circle cx="115" cy="307.61" r="3.5"/><circle cx="1458" cy="307.61" r="3.5"/><circle cx="115" cy="314.58" r="3.5"/><circle cx="1458" cy="314.58" r="3.5"/><circle cx="115" cy="321.56" r="3.5"/><circle cx="1458" cy="321.56" r="3.5"/><circle cx="115" cy="328.53" r="3.5"/><circle cx="1458" cy="328.53" r="3.5"/><circle cx="115" cy="335.51" r="3.5"/><circle cx="1458" cy="335.51" r="3.5"/><circle cx="115" cy="342.48" r="3.5"/><circle cx="1458" cy="342.48" r="3.5"/><circle cx="115" cy="349.45" r="3.5"/><circle cx="1458" cy="349.45" r="3.5"/><circle cx="115" cy="356.43" r="3.5"/><circle cx="1458" cy="356.43" r="3.5"/><circle cx="115" cy="363.40" r="3.5"/><circle cx="1458" cy="363.40" r="3.5"/><circle cx="115" cy="370.38" r="3.5"/><circle cx="1458" cy="370.38" r="3.5"/><circle cx="115" cy="377.35" r="3.5"/><circle cx="1458" cy="377.35" r="3.5"/><circle cx="115" cy="384.32" r="3.5"/><circle cx="1458" cy="384.32" r="3.5"/><circle cx="115" cy="391.30" r="3.5"/><circle cx="1458" cy="391.30" r="3.5"/><circle cx="115" cy="398.27" r="3.5"/><circle cx="1458" cy="398.27" r="3.5"/><circle cx="115" cy="405.25" r="3.5"/><circle cx="1458" cy="405.25" r="3.5"/><circle cx="115" cy="412.22" r="3.5"/><circle cx="1458" cy="412.22" r="3.5"/><circle cx="115" cy="419.19" r="3.5"/><circle cx="1458" cy="419.19" r="3.5"/><circle cx="115" cy="426.17" r="3.5"/><circle cx="1458" cy="426.17" r="3.5"/><circle cx="115" cy="433.14" r="3.5"/><circle cx="1458" cy="433.14" r="3.5"/><circle cx="115" cy="440.12" r="3.5"/><circle cx="1458" cy="440.12" r="3.5"/><circle cx="115" cy="447.09" r="3.5"/><circle cx="1458" cy="447.09" r="3.5"/><circle cx="115" cy="454.06" r="3.5"/><circle cx="1458" cy="454.06" r="3.5"/><circle cx="115" cy="461.04" r="3.5"/><circle cx="1458" cy="461.04" r="3.5"/><circle cx="115" cy="468.01" r="3.5"/><circle cx="1458" cy="468.01" r="3.5"/><circle cx="115" cy="474.99" r="3.5"/><circle cx="1458" cy="474.99" r="3.5"/><circle cx="115" cy="481.96" r="3.5"/><circle cx="1458" cy="481.96" r="3.5"/><circle cx="115" cy="488.94" r="3.5"/><circle cx="1458" cy="488.94" r="3.5"/><circle cx="115" cy="495.91" r="3.5"/><circle cx="1458" cy="495.91" r="3.5"/><circle cx="115" cy="502.88" r="3.5"/><circle cx="1458" cy="502.88" r="3.5"/><circle cx="115" cy="509.86" r="3.5"/><circle cx="1458" cy="509.86" r="3.5"/><circle cx="115" cy="516.83" r="3.5"/><circle cx="1458" cy="516.83" r="3.5"/><circle cx="115" cy="523.81" r="3.5"/><circle cx="1458" cy="523.81" r="3.5"/><circle cx="115" cy="530.78" r="3.5"/><circle cx="1458" cy="530.78" r="3.5"/><circle cx="115" cy="537.75" r="3.5"/><circle cx="1458" cy="537.75" r="3.5"/><circle cx="115" cy="544.73" r="3.5"/><circle cx="1458" cy="544.73" r="3.5"/><circle cx="115" cy="551.70" r="3.5"/><circle cx="1458" cy="551.70" r="3.5"/><circle cx="115" cy="558.68" r="3.5"/><circle cx="1458" cy="558.68" r="3.5"/><circle cx="115" cy="565.65" r="3.5"/><circle cx="1458" cy="565.65" r="3.5"/><circle cx="115" cy="572.62" r="3.5"/><circle cx="1458" cy="572.62" r="3.5"/><circle cx="115" cy="579.60" r="3.5"/><circle cx="1458" cy="579.60" r="3.5"/><circle cx="115" cy="586.57" r="3.5"/><circle cx="1458" cy="586.57" r="3.5"/><circle cx="115" cy="593.55" r="3.5"/><circle cx="1458" cy="593.55" r="3.5"/><circle cx="115" cy="600.52" r="3.5"/><circle cx="1458" cy="600.52" r="3.5"/><circle cx="115" cy="607.49" r="3.5"/><circle cx="1458" cy="607.49" r="3.5"/><circle cx="115" cy="614.47" r="3.5"/><circle cx="1458" cy="614.47" r="3.5"/><circle cx="115" cy="621.44" r="3.5"/><circle cx="1458" cy="621.44" r="3.5"/><circle cx="115" cy="628.42" r="3.5"/><circle cx="1458" cy="628.42" r="3.5"/><circle cx="115" cy="635.39" r="3.5"/><circle cx="1458" cy="635.39" r="3.5"/><circle cx="115" cy="642.36" r="3.5"/><circle cx="1458" cy="642.36" r="3.5"/><circle cx="115" cy="649.34" r="3.5"/><circle cx="1458" cy="649.34" r="3.5"/><circle cx="115" cy="656.31" r="3.5"/><circle cx="1458" cy="656.31" r="3.5"/><circle cx="115" cy="663.29" r="3.5"/><circle cx="1458" cy="663.29" r="3.5"/><circle cx="115" cy="670.26" r="3.5"/><circle cx="1458" cy="670.26" r="3.5"/><circle cx="115" cy="677.23" r="3.5"/><circle cx="1458" cy="677.23" r="3.5"/><circle cx="115" cy="684.21" r="3.5"/><circle cx="1458" cy="684.21" r="3.5"/><circle cx="115" cy="691.18" r="3.5"/><circle cx="1458" cy="691.18" r="3.5"/><circle cx="115" cy="698.16" r="3.5"/><circle cx="1458" cy="698.16" r="3.5"/><circle cx="115" cy="705.13" r="3.5"/><circle cx="1458" cy="705.13" r="3.5"/><circle cx="115" cy="712.10" r="3.5"/><circle cx="1458" cy="712.10" r="3.5"/><circle cx="115" cy="719.08" r="3.5"/><circle cx="1458" cy="719.08" r="3.5"/><circle cx="115" cy="726.05" r="3.5"/><circle cx="1458" cy="726.05" r="3.5"/><circle cx="115" cy="733.03" r="3.5"/><circle cx="1458" cy="733.03" r="3.5"/><circle cx="115" cy="740.00" r="3.5"/><circle cx="1458" cy="740.00" r="3.5"/></g><g shape-rendering="crispEdges" fill="#000"><rect x="20" y="2" width="1" height="938"/><rect x="20" y="939" width="1537" height="1"/><rect x="17" y="927" width="2" height="1"/><rect x="17" y="914" width="2" height="1"/><rect x="17" y="901" width="2" height="1"/><rect x="17" y="887" width="2" height="1"/><rect x="14" y="874" width="5" height="1"/><rect x="17" y="860" width="2" height="1"/><rect x="17" y="847" width="2" height="1"/><rect x="17" y="834" width="2" height="1"/><rect x="17" y="820" width="2" height="1"/><rect x="15" y="807" width="4" height="1"/><rect x="17" y="793" width="2" height="1"/><rect x="17" y="780" width="2" height="1"/><rect x="17" y="766" width="2" height="1"/><rect x="17" y="753" width="2" height="1"/><rect x="14" y="740" width="5" height="1"/><rect x="17" y="726" width="2" height="1"/><rect x="17" y="713" width="2" height="1"/><rect x="17" y="699" width="2" height="1"/><rect x="17" y="686" width="2" height="1"/><rect x="15" y="672" width="4" height="1"/><rect x="17" y="659" width="2" height="1"/><rect x="17" y="646" width="2" height="1"/><rect x="17" y="632" width="2" height="1"/><rect x="17" y="619" width="2" height="1"/><rect x="14" y="605" width="5" height="1"/><rect x="17" y="592" width="2" height="1"/><rect x="17" y="579" width="2" height="1"/><rect x="17" y="565" width="2" height="1"/><rect x="17" y="552" width="2" height="1"/><rect x="15" y="538" width="4" height="1"/><rect x="17" y="525" width="2" height="1"/><rect x="17" y="511" width="2" height="1"/><rect x="17" y="498" width="2" height="1"/><rect x="17" y="485" width="2" height="1"/><rect x="14" y="471" width="5" height="1"/><rect x="17" y="458" width="2" height="1"/><rect x="17" y="444" width="2" height="1"/><rect x="17" y="431" width="2" height="1"/><rect x="17" y="418" width="2" height="1"/><rect x="15" y="404" width="4" height="1"/><rect x="17" y="391" width="2" height="1"/><rect x="17" y="377" width="2" height="1"/><rect x="17" y="364" width="2" height="1"/><rect x="17" y="350" width="2" height="1"/><rect x="14" y="337" width="5" height="1"/><rect x="17" y="324" width="2" height="1"/><rect x="17" y="310" width="2" height="1"/><rect x="17" y="297" width="2" height="1"/><rect x="17" y="283" width="2" height="1"/><rect x="15" y="270" width="4" height="1"/><rect x="17" y="256" width="2" height="1"/><rect x="17" y="243" width="2" height="1"/><rect x="17" y="230" width="2" height="1"/><rect x="17" y="216" width="2" height="1"/><rect x="14" y="203" width="5" height="1"/><rect x="17" y="189" width="2" height="1"/><rect x="17" y="176" width="2" height="1"/><rect x="17" y="163" width="2" height="1"/><rect x="17" y="149" width="2" height="1"/><rect x="15" y="136" width="4" height="1"/><rect x="17" y="122" width="2" height="1"/><rect x="17" y="109" width="2" height="1"/><rect x="17" y="95" width="2" height="1"/><rect x="17" y="82" width="2" height="1"/><rect x="14" y="69" width="5" height="1"/><rect x="17" y="55" width="2" height="1"/><rect x="17" y="42" width="2" height="1"/><rect x="17" y="28" width="2" height="1"/><rect x="17" y="15" width="2" height="1"/><rect x="15" y="2" width="4" height="1"/><rect x="21" y="941" width="1" height="2"/><rect x="35" y="941" width="1" height="2"/><rect x="48" y="941" width="1" height="4"/><rect x="62" y="941" width="1" height="2"/><rect x="75" y="941" width="1" height="2"/><rect x="88" y="941" width="1" height="2"/><rect x="102" y="941" width="1" height="2"/><rect x="115" y="941" width="1" height="5"/><rect x="129" y="941" width="1" height="2"/><rect x="142" y="941" width="1" height="2"/><rect x="156" y="941" width="1" height="2"/><rect x="169" y="941" width="1" height="2"/><rect x="182" y="941" width="1" height="4"/><rect x="196" y="941" width="1" height="2"/><rect x="209" y="941" width="1" height="2"/><rect x="223" y="941" width="1" height="2"/><rect x="236" y="941" width="1" height="2"/><rect x="250" y="941" width="1" height="5"/><rect x="263" y="941" width="1" height="2"/><rect x="276" y="941" width="1" height="2"/><rect x="290" y="941" width="1" height="2"/><rect x="303" y="941" width="1" height="2"/><rect x="317" y="941" width="1" height="4"/><rect x="330" y="941" width="1" height="2"/><rect x="344" y="941" width="1" height="2"/><rect x="357" y="941" width="1" height="2"/><rect x="370" y="941" width="1" height="2"/><rect x="384" y="941" width="1" height="5"/><rect x="397" y="941" width="1" height="2"/><rect x="411" y="941" width="1" height="2"/><rect x="424" y="941" width="1" height="2"/><rect x="438" y="941" width="1" height="2"/><rect x="451" y="941" width="1" height="4"/><rect x="464" y="941" width="1" height="2"/><rect x="478" y="941" width="1" height="2"/><rect x="491" y="941" width="1" height="2"/><rect x="505" y="941" width="1" height="2"/><rect x="518" y="941" width="1" height="5"/><rect x="532" y="941" width="1" height="2"/><rect x="545" y="941" width="1" height="2"/><rect x="558" y="941" width="1" height="2"/><rect x="572" y="941" width="1" height="2"/><rect x="585" y="941" width="1" height="4"/><rect x="599" y="941" width="1" height="2"/><rect x="612" y="941" width="1" height="2"/><rect x="626" y="941" width="1" height="2"/><rect x="639" y="941" width="1" height="2"/><rect x="652" y="941" width="1" height="5"/><rect x="666" y="941" width="1" height="2"/><rect x="679" y="941" width="1" height="2"/><rect x="693" y="941" width="1" height="2"/><rect x="706" y="941" width="1" height="2"/><rect x="720" y="941" width="1" height="4"/><rect x="733" y="941" width="1" height="2"/><rect x="747" y="941" width="1" height="2"/><rect x="760" y="941" width="1" height="2"/><rect x="773" y="941" width="1" height="2"/><rect x="787" y="941" width="1" height="5"/><rect x="800" y="941" width="1" height="2"/><rect x="814" y="941" width="1" height="2"/><rect x="827" y="941" width="1" height="2"/><rect x="841" y="941" width="1" height="2"/><rect x="854" y="941" width="1" height="4"/><rect x="867" y="941" width="1" height="2"/><rect x="881" y="941" width="1" height="2"/><rect x="894" y="941" width="1" height="2"/><rect x="908" y="941" width="1" height="2"/><rect x="921" y="941" width="1" height="5"/><rect x="935" y="941" width="1" height="2"/><rect x="948" y="941" width="1" height="2"/><rect x="961" y="941" width="1" height="2"/><rect x="975" y="941" width="1" height="2"/><rect x="988" y="941" width="1" height="4"/><rect x="1002" y="941" width="1" height="2"/><rect x="1015" y="941" width="1" height="2"/><rect x="1029" y="941" width="1" height="2"/><rect x="1042" y="941" width="1" height="2"/><rect x="1055" y="941" width="1" height="5"/><rect x="1069" y="941" width="1" height="2"/><rect x="1082" y="941" width="1" height="2"/><rect x="1096" y="941" width="1" height="2"/><rect x="1109" y="941" width="1" height="2"/><rect x="1123" y="941" width="1" height="4"/><rect x="1136" y="941" width="1" height="2"/><rect x="1149" y="941" width="1" height="2"/><rect x="1163" y="941" width="1" height="2"/><rect x="1176" y="941" width="1" height="2"/><rect x="1190" y="941" width="1" height="5"/><rect x="1203" y="941" width="1" height="2"/><rect x="1217" y="941" width="1" height="2"/><rect x="1230" y="941" width="1" height="2"/><rect x="1243" y="941" width="1" height="2"/><rect x="1257" y="941" width="1" height="4"/><rect x="1270" y="941" width="1" height="2"/><rect x="1284" y="941" width="1" height="2"/><rect x="1297" y="941" width="1" height="2"/><rect x="1311" y="941" width="1" height="2"/><rect x="1324" y="941" width="1" height="5"/><rect x="1337" y="941" width="1" height="2"/><rect x="1351" y="941" width="1" height="2"/><rect x="1364" y="941" width="1" height="2"/><rect x="1378" y="941" width="1" height="2"/><rect x="1391" y="941" width="1" height="4"/><rect x="1405" y="941" width="1" height="2"/><rect x="1418" y="941" width="1" height="2"/><rect x="1431" y="941" width="1" height="2"/><rect x="1445" y="941" width="1" height="2"/><rect x="1458" y="941" width="1" height="5"/><rect x="1472" y="941" width="1" height="2"/><rect x="1485" y="941" width="1" height="2"/><rect x="1499" y="941" width="1" height="2"/><rect x="1512" y="941" width="1" height="2"/><rect x="1525" y="941" width="1" height="4"/><rect x="1539" y="941" width="1" height="2"/><rect x="1552" y="941" width="1" height="2"/></g><g font-size="10px" fill="#000"><text transform="translate(12 874.5) rotate(-90)" text-anchor="middle">-50</text><text transform="translate(12 740.2) rotate(-90)" text-anchor="middle">-40</text><text transform="translate(12 605.9) rotate(-90)" text-anchor="middle">-30</text><text transform="translate(12 471.6) rotate(-90)" text-anchor="middle">-20</text><text transform="translate(12 337.3) rotate(-90)" text-anchor="middle">-10</text><text transform="translate(12 203.0) rotate(-90)" text-anchor="middle">0</text><text transform="translate(12 68.7) rotate(-90)" text-anchor="middle">10</text><text x="115.0" y="954" text-anchor="middle">0</text><text x="249.3" y="954" text-anchor="middle">10</text><text x="383.6" y="954" text-anchor="middle">20</text><text x="517.9" y="954" text-anchor="middle">30</text><text x="652.2" y="954" text-anchor="middle">40</text><text x="786.5" y="954" text-anchor="middle">50</text><text x="920.8" y="954" text-anchor="middle">60</text><text x="1055.1" y="954" text-anchor="middle">70</text><text x="1189.4" y="954" text-anchor="middle">80</text><text x="1323.7" y="954" text-anchor="middle">90</text><text x="1458.0" y="954" text-anchor="middle">100</text></g><g stroke="#000080" fill="none" stroke-width="1" shape-rendering="crispEdges"><line x1="1500.5" y1="18" x2="1500.5" y2="39"/><rect x="1493.5" y="45.5" width="14" height="28"/><line x1="1511" y1="59.5" x2="1521" y2="59.5"/></g><g fill="#000080"><polygon points="1497,38 1504,38 1500.5,45"/><polygon points="1508,59.5 1511.5,52 1511.5,67"/></g><rect x="0" y="958" width="1559" height="1" fill="#fff"/><rect x="0" y="959" width="1559" height="1" fill="#000"/><rect x="0" y="960" width="1559" height="18" fill="#f0f0f0"/><rect x="0" y="976" width="1559" height="2" fill="#a0a0a0"/><g shape-rendering="crispEdges"><rect x="0" y="960" width="18" height="16" fill="#f0f0f0"/><rect x="0" y="960" width="1" height="16" fill="#fff"/><rect x="0" y="960" width="18" height="1" fill="#fff"/><rect x="18" y="960" width="2" height="18" fill="#a0a0a0"/><rect x="20" y="960" width="19" height="16" fill="#f0f0f0"/><rect x="20" y="960" width="1" height="16" fill="#fff"/><rect x="20" y="960" width="19" height="1" fill="#fff"/><rect x="39" y="960" width="2" height="18" fill="#a0a0a0"/><rect x="41" y="960" width="19" height="16" fill="#f0f0f0"/><rect x="41" y="960" width="1" height="16" fill="#fff"/><rect x="41" y="960" width="19" height="1" fill="#fff"/><rect x="60" y="960" width="2" height="18" fill="#a0a0a0"/><rect x="62" y="960" width="19" height="16" fill="#f0f0f0"/><rect x="62" y="960" width="1" height="16" fill="#fff"/><rect x="62" y="960" width="19" height="1" fill="#fff"/><rect x="81" y="960" width="2" height="18" fill="#a0a0a0"/><rect x="83" y="960" width="19" height="16" fill="#f0f0f0"/><rect x="83" y="960" width="1" height="16" fill="#fff"/><rect x="83" y="960" width="19" height="1" fill="#fff"/><rect x="102" y="960" width="2" height="18" fill="#a0a0a0"/></g><g fill="#000"><rect x="6" y="964" width="1.4" height="9"/><polygon points="8,968.5 13,964 13,973"/><polygon points="28,968.5 33,964 33,973" fill="#a0a0a0"/><polygon points="69.5,964 75.5,968.5 69.5,973"/><polygon points="90.3,964 94.8,968.5 90.3,973"/><rect x="96" y="964" width="1.4" height="9"/><text x="52" y="973" font-size="11px" font-weight="bold" text-anchor="middle">#</text></g><g font-size="11px"><polygon points="272.45,960.00 280.95,976.00 395.75,976.00 404.25,960.00" fill="#88cbf9"/><path d="M272.45 960L280.95 976M395.75 976L404.25 960" fill="none" stroke="#000" stroke-width="1"/><text x="338.9" y="972.3" text-anchor="middle" letter-spacing="0.93">2. Stage 2 (10 d)</text><polygon points="395.75,960.00 404.25,976.00 461.25,976.00 469.75,960.00" fill="#88cbf9"/><path d="M395.75 960L404.25 976M461.25 976L469.75 960" fill="none" stroke="#000" stroke-width="1"/><text x="433.2" y="972.3" text-anchor="middle" letter-spacing="0.93">3 (11 d)</text><polygon points="461.25,960.00 469.75,976.00 527.15,976.00 535.65,960.00" fill="#88cbf9"/><path d="M461.25 960L469.75 976M527.15 976L535.65 960" fill="none" stroke="#000" stroke-width="1"/><text x="498.9" y="972.3" text-anchor="middle" letter-spacing="0.93">4 (13 d)</text><polygon points="527.15,960.00 535.65,976.00 650.25,976.00 658.75,960.00" fill="#88cbf9"/><path d="M527.15 960L535.65 976M650.25 976L658.75 960" fill="none" stroke="#000" stroke-width="1"/><text x="593.5" y="972.3" text-anchor="middle" letter-spacing="0.93">5. Stage 5 (14 d)</text><polygon points="650.25,960.00 658.75,976.00 716.75,976.00 725.25,960.00" fill="#88cbf9"/><path d="M650.25 960L658.75 976M716.75 976L725.25 960" fill="none" stroke="#000" stroke-width="1"/><text x="688.2" y="972.3" text-anchor="middle" letter-spacing="0.93">6 (20 d)</text><polygon points="716.75,960.00 725.25,976.00 839.15,976.00 847.65,960.00" fill="#88cbf9"/><path d="M716.75 960L725.25 976M839.15 976L847.65 960" fill="none" stroke="#000" stroke-width="1"/><text x="782.7" y="972.3" text-anchor="middle" letter-spacing="0.93">7. Stage 7 (21 d)</text><polygon points="839.15,960.00 847.65,976.00 905.45,976.00 913.95,960.00" fill="#88cbf9"/><path d="M839.15 960L847.65 976M905.45 976L913.95 960" fill="none" stroke="#000" stroke-width="1"/><text x="877.0" y="972.3" text-anchor="middle" letter-spacing="0.93">8 (30 d)</text><polygon points="905.45,960.00 913.95,976.00 1028.45,976.00 1036.95,960.00" fill="#88cbf9"/><path d="M905.45 960L913.95 976M1028.45 976L1036.95 960" fill="none" stroke="#000" stroke-width="1"/><text x="971.7" y="972.3" text-anchor="middle" letter-spacing="0.93">9. Stage 9 (31 d)</text><polygon points="1028.45,960.00 1036.95,976.00 1102.55,976.00 1111.05,960.00" fill="#88cbf9"/><path d="M1028.45 960L1036.95 976M1102.55 976L1111.05 960" fill="none" stroke="#000" stroke-width="1"/><text x="1070.2" y="972.3" text-anchor="middle" letter-spacing="0.93">10 (35 d)</text><polygon points="1102.55,960.00 1111.05,976.00 1241.05,976.00 1249.55,960.00" fill="#88cbf9"/><path d="M1102.55 960L1111.05 976M1241.05 976L1249.55 960" fill="none" stroke="#000" stroke-width="1"/><text x="1176.5" y="972.3" text-anchor="middle" letter-spacing="0.93">11. Stage 11 (40 d)</text><polygon points="1241.05,960.00 1249.55,976.00 1380.75,976.00 1389.25,960.00" fill="#88cbf9"/><path d="M1241.05 960L1249.55 976M1380.75 976L1389.25 960" fill="none" stroke="#000" stroke-width="1"/><text x="1315.7" y="972.3" text-anchor="middle" letter-spacing="0.93">12. Stage 12 (70 d)</text><polygon points="1380.75,960.00 1389.25,976.00 1519.35,976.00 1527.85,960.00" fill="#88cbf9"/><path d="M1380.75 960L1389.25 976M1519.35 976L1527.85 960" fill="none" stroke="#000" stroke-width="1"/><text x="1454.8" y="972.3" text-anchor="middle" letter-spacing="0.93">13. Stage 13 (75 d)</text><polygon points="1519.35,960.00 1527.85,976.00 1660.75,976.00 1669.25,960.00" fill="#88cbf9"/><path d="M1519.35 960L1527.85 976M1660.75 976L1669.25 960" fill="none" stroke="#000" stroke-width="1"/><text x="1594.8" y="972.3" text-anchor="middle" letter-spacing="0.93">14. Stage 14 (80 d)</text><polygon points="105.30,960.00 113.60,976.00 272.45,976.00 280.95,960.00" fill="#fff"/><path d="M105.3 960L113.6 976M272.45 976L280.95 960" fill="none" stroke="#000" stroke-width="1"/><text x="116.7" y="972.3" font-weight="bold" letter-spacing="1.47">1. Initial (Steady State)</text></g></svg><div style="position:absolute;left:212px;top:50px;width:323px;height:247px;background:#f0f0f0;box-sizing:border-box;border-top:2px solid #fbfbfb;border-left:2px solid #fbfbfb;border-right:2px solid #6b6b6b;border-bottom:2px solid #6b6b6b;"></div>
<svg width="1559" height="300" viewBox="0 0 1559 300" font-family="Liberation Sans, sans-serif">
<defs>
<linearGradient id="bg1" x1="0" y1="0" x2="1" y2="1"><stop offset="0" stop-color="#000070"/><stop offset="1" stop-color="#0a6ee8"/></linearGradient>
<linearGradient id="rg1" x1="0" y1="0" x2="1" y2="1"><stop offset="0" stop-color="#ff1010"/><stop offset="1" stop-color="#800000"/></linearGradient>
</defs>
<!-- title -->
<text x="224" y="70" font-size="12.8px" font-weight="bold" fill="#000">Set Boundary Conditions</text>
<g shape-rendering="crispEdges">
<rect x="382" y="62" width="79" height="1" fill="#fff"/><rect x="382" y="63" width="79" height="1" fill="#a0a0a0"/><rect x="460" y="61" width="1" height="3" fill="#a0a0a0"/>
<rect x="382" y="66" width="79" height="1" fill="#fff"/><rect x="382" y="67" width="79" height="1" fill="#a0a0a0"/><rect x="460" y="65" width="1" height="3" fill="#a0a0a0"/>
<rect x="224" y="79" width="298" height="1" fill="#6e6e6e"/>
</g>
<text x="473" y="70.8" font-size="14.5px" font-weight="bold" text-anchor="middle" fill="#000">?</text>
<polygon points="487.6,70 499.2,70 493.4,63.6" fill="#000"/>
<path d="M510 62L517.6 69.6M517.6 62L510 69.6" stroke="#000" stroke-width="2" stroke-linecap="square"/>
<!-- toolbar buttons -->
<g shape-rendering="crispEdges">
<rect x="232.5" y="90.5" width="24" height="20" fill="#cce4f7" stroke="#005499"/>
<rect x="260.5" y="90.5" width="24" height="20" fill="#e1e1e1" stroke="#adadad"/>
<rect x="289.5" y="90.5" width="24" height="20" fill="#e1e1e1" stroke="#adadad"/>
<rect x="317.5" y="90.5" width="24" height="20" fill="#e1e1e1" stroke="#adadad"/>
<rect x="346.5" y="90.5" width="24" height="20" fill="#e1e1e1" stroke="#adadad"/>
<rect x="374.5" y="90.5" width="24" height="20" fill="#e1e1e1" stroke="#adadad"/>
<rect x="403.5" y="90.5" width="24" height="20" fill="#e1e1e1" stroke="#adadad"/>
<rect x="431.5" y="90.5" width="24" height="20" fill="#e1e1e1" stroke="#adadad"/>
<rect x="460.5" y="90.5" width="24" height="20" fill="#e1e1e1" stroke="#adadad"/>
<rect x="491.5" y="90.5" width="24" height="20" fill="#e1e1e1" stroke="#adadad"/>
</g>
<g transform="translate(-0.6 -0.5)">
<!-- icon 1 -->
<circle cx="244.5" cy="100.5" r="5.6" fill="none" stroke="#0010c0" stroke-width="1"/>
<circle cx="244.5" cy="100.5" r="4.3" fill="url(#bg1)"/>
<!-- icon 2 -->
<circle cx="272.5" cy="100.5" r="5.5" fill="#fff" stroke="#0018b0" stroke-width="1"/>
<path d="M266.5 100.5A6 6 0 0 0 278.5 100.5Z" fill="url(#bg1)"/>
<!-- icon 3 -->
<circle cx="301.5" cy="100.5" r="6" fill="url(#bg1)"/>
<path d="M297.6 94.3L305.4 94.3L301.5 99.4ZM297.6 106.7L305.4 106.7L301.5 101.6Z" fill="#fff"/>
<!-- icon 4 -->
<circle cx="329.5" cy="100.5" r="6" fill="url(#bg1)"/>
<path d="M327.6 97.2V101A1.9 1.9 0 0 0 331.4 101V97.2M331.4 100V103.3" fill="none" stroke="#fff" stroke-width="1.5"/>
<!-- icon 5 -->
<circle cx="358.5" cy="100.5" r="5.5" fill="none" stroke="#1030d0" stroke-width="1"/>
<path d="M358.5 97V104M355 100.5H362" stroke="#0000a0" stroke-width="1.8"/>
<!-- icon 6 -->
<path d="M378.5 97.5L389 108M390 92.5L383 99.5M394 96.5L387 103.5" stroke="#000080" stroke-width="1" fill="none"/>
<path d="M382 96.5L385.5 100.5L381.5 100.8Z M386 100.5L389.5 104.5L385.5 104.8Z" fill="#000080"/>
<!-- icon 7 -->
<path d="M411.5 92.5V103M418.5 92.5V103M407 106.5H423.5" stroke="#000080" stroke-width="1.1" fill="none"/>
<path d="M408.5 101.5H414.5L411.5 105Z M415.5 101.5H421.5L418.5 105Z" fill="#000080"/>
<!-- icon 8 -->
<circle cx="443.5" cy="100.5" r="6" fill="url(#bg1)"/>
<text x="443.5" y="104.6" font-size="10px" font-weight="bold" fill="#fff" text-anchor="middle">?</text>
<!-- icon 9 -->
<path d="M467.5 96A5.6 5.6 0 1 0 474 94.9" fill="none" stroke="#0a60e0" stroke-width="1.1" stroke-dasharray="6 1.2"/>
<path d="M464.5 92.5L471 99M471 92.5L464.5 99" stroke="#f03020" stroke-width="1.8"/>
<!-- icon 10 -->
<circle cx="503.5" cy="100.5" r="5.8" fill="none" stroke="#e00000" stroke-width="1"/>
<circle cx="503.5" cy="100.5" r="4.3" fill="url(#rg1)"/>
</g>
<!-- BC type -->
<text x="243.6" y="131.5" font-size="11px" letter-spacing="-0.28" fill="#000">BC Type:</text>
<rect x="294.5" y="117.5" width="172" height="23" fill="#fff" stroke="#7a7a7a" shape-rendering="crispEdges"/>
<circle cx="307" cy="129" r="5.6" fill="none" stroke="#0010c0" stroke-width="1"/>
<circle cx="307" cy="129" r="4.3" fill="url(#bg1)"/>
<text x="319.1" y="133" font-size="11px" letter-spacing="-0.15" fill="#000">Total Head (H)</text>
<path d="M454 127L458 131L462 127" fill="none" stroke="#444" stroke-width="1"/>
<!-- seepage face -->
<rect x="258.5" y="150.5" width="12" height="12" fill="#f0f0f0" stroke="#c5c5c5" shape-rendering="crispEdges"/>
<path d="M260.5 156.5L263.5 159.5L268.5 153" fill="none" stroke="#b0b0b0" stroke-width="1.1"/>
<text x="273.7" y="160.8" font-size="11px" letter-spacing="-0.15" fill="#8a8a8a">Seepage face condition</text>
<!-- total head value -->
<text x="258.3" y="188" font-size="11px" letter-spacing="-0.15" fill="#000">Total Head Value (m):</text>
<rect x="402.5" y="174.5" width="77" height="19" fill="#fff" stroke="#0078d7" shape-rendering="crispEdges"/>
<text x="473" y="188" font-size="11px" text-anchor="end" fill="#000">-12</text>
<rect x="473" y="177" width="1" height="13" fill="#000"/>
<!-- selection mode -->
<text x="230.8" y="219.2" font-size="11px" letter-spacing="-0.22" fill="#000">Selection mode:</text>
<rect x="312.5" y="205.5" width="121" height="23" fill="#fff" stroke="#7a7a7a" shape-rendering="crispEdges"/>
<text x="316.3" y="220.8" font-size="11px" letter-spacing="-0.22" fill="#000">Boundary Segments</text>
<path d="M421 215L425 219L429 215" fill="none" stroke="#444" stroke-width="1"/>
<!-- apply at stage -->
<rect x="231.5" y="233.5" width="12" height="12" fill="#fff" stroke="#333" shape-rendering="crispEdges"/>
<text x="246.7" y="243.3" font-size="11px" fill="#000">Apply at this stage only (do not propagate)</text>
<!-- buttons -->
<rect x="360" y="257" width="71" height="19" fill="#e1e1e1" stroke="#0078d7" stroke-width="2" shape-rendering="crispEdges"/>
<text x="395.3" y="271" font-size="11px" text-anchor="middle" fill="#000">Apply</text>
<rect x="442.5" y="256.5" width="72" height="20" fill="#e1e1e1" stroke="#adadad" shape-rendering="crispEdges"/>
<text x="477.5" y="271" font-size="11px" text-anchor="middle" fill="#000">Close</text>
</svg>
</body></html>
